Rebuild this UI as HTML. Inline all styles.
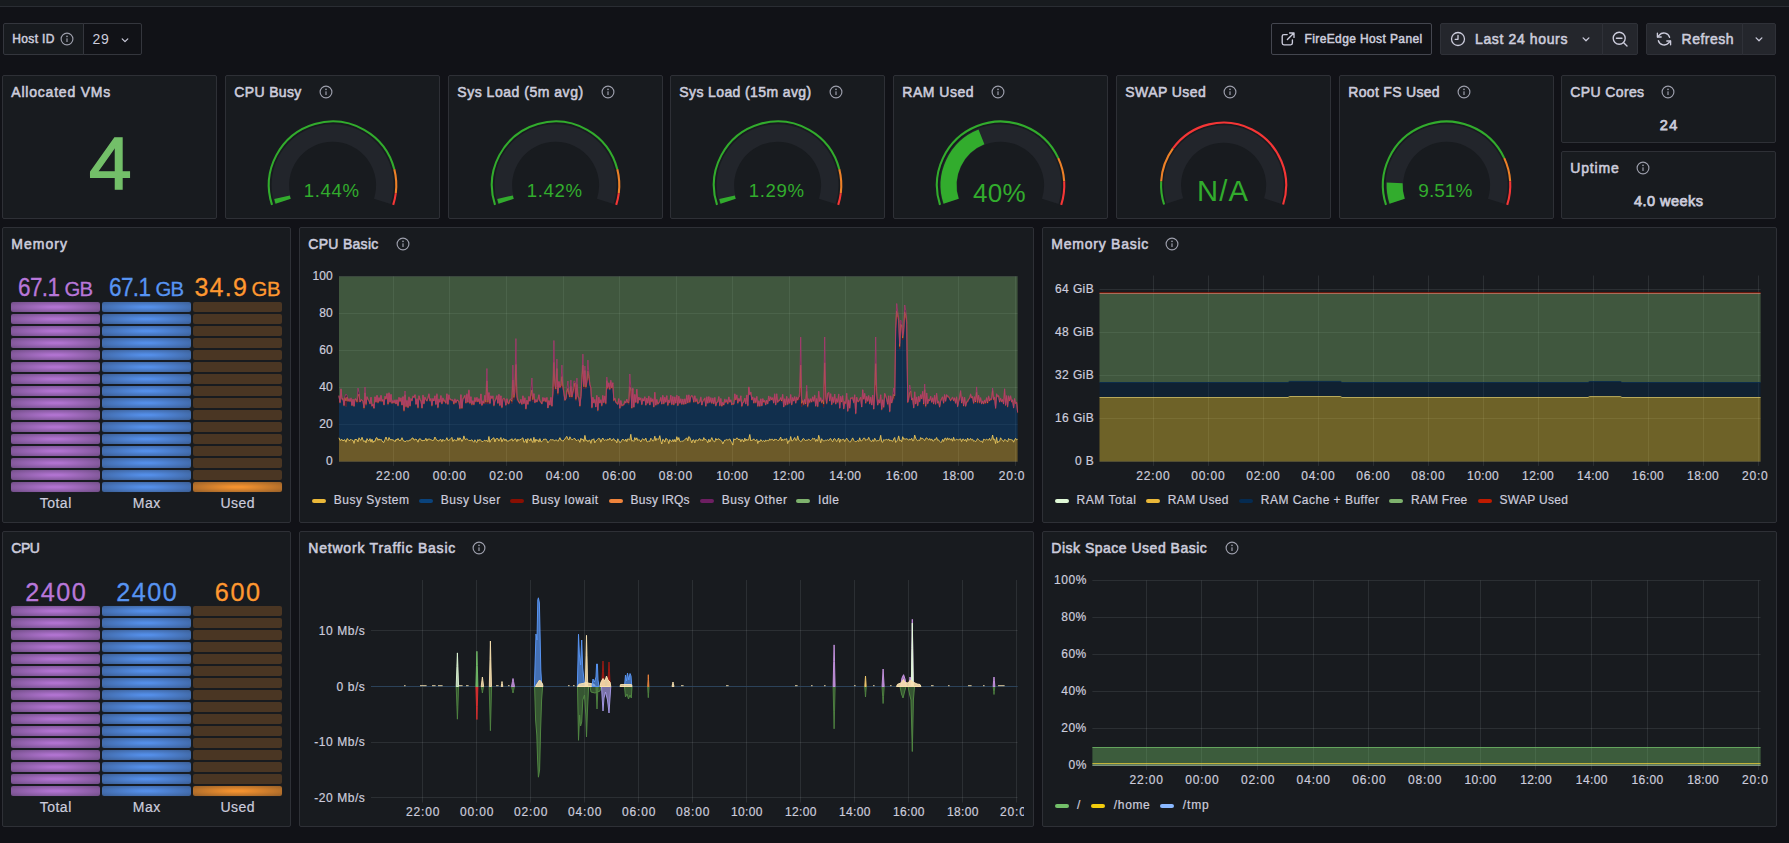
<!DOCTYPE html>
<html lang="en"><head><meta charset="utf-8"><title>Host dashboard</title>
<style>
html,body{margin:0;padding:0}
body{width:1789px;height:843px;overflow:hidden;background:#111217;position:relative;font-family:"Liberation Sans",sans-serif;color:#ccccdc}
.a{position:absolute}
.t{position:absolute;white-space:pre;line-height:normal}
.p{position:absolute;background:#181b1f;border:1px solid #2e3036;border-radius:2px}
.b{position:absolute;box-sizing:border-box;border-radius:2px}
svg{position:absolute;overflow:visible}
</style></head><body>

<div class="a" style="left:0;top:0;width:1789px;height:6px;background:#181b1f;border-bottom:1px solid #2a2d33"></div>
<div class="b" style="left:3px;top:23px;width:81px;height:32px;background:#181b1f;border:1px solid #34363d;border-radius:2px 0 0 2px"></div>
<div class="b" style="left:83px;top:23px;width:59px;height:32px;background:#111217;border:1px solid #34363d;border-radius:0 2px 2px 0"></div>
<div class="t" style="left:12.30px;top:32.44px;font-size:12px;color:#ccccdc;letter-spacing:0.332px;-webkit-text-stroke:0.5px #ccccdc;">Host ID</div>
<svg class="a" style="left:59px;top:31px" width="16" height="16" viewBox="0 0 16 16"><circle cx="8" cy="8" r="5.9" fill="none" stroke="#9d9fac" stroke-width="1.15"/><rect x="7.4" y="7.3" width="1.2" height="3.6" rx="0.5" fill="#9d9fac"/><circle cx="8" cy="5.4" r="0.8" fill="#9d9fac"/></svg>
<div class="t" style="left:92.60px;top:31.33px;font-size:14px;color:#ccccdc;letter-spacing:0.728px;">29</div>
<svg style="left:119px;top:33.6px" width="12" height="12" viewBox="-6 -6 12 12"><path d="M-2.8 -1.0999999999999999 L0 1.7 L2.8 -1.0999999999999999" fill="none" stroke="#ccccdc" stroke-width="1.2" stroke-linecap="round" stroke-linejoin="round"/></svg>
<div class="b" style="left:1271px;top:23px;width:161px;height:32px;border:1px solid #44464f"></div>
<svg style="left:1281px;top:32px" width="14" height="14" viewBox="0 0 14 14"><path d="M6.2 2.6H2.9Q1.2 2.6 1.2 4.3V11.1Q1.2 12.8 2.9 12.8H9.7Q11.4 12.8 11.4 11.1V7.8" fill="none" stroke="#ccccdc" stroke-width="1.35" stroke-linecap="round"/><path d="M8.6 1H13V5.4M13 1L6.4 7.6" fill="none" stroke="#ccccdc" stroke-width="1.35" stroke-linecap="round" stroke-linejoin="round"/></svg>
<div class="t" style="left:1304.50px;top:32.34px;font-size:12px;color:#ccccdc;letter-spacing:0.387px;-webkit-text-stroke:0.5px #ccccdc;">FireEdge Host Panel</div>
<div class="b" style="left:1440px;top:23px;width:163px;height:32px;background:#24262c;border:1px solid #2f3138;border-radius:2px 0 0 2px"></div>
<div class="b" style="left:1602px;top:23px;width:36px;height:32px;background:#24262c;border:1px solid #2f3138;border-radius:0 2px 2px 0"></div>
<svg style="left:1450px;top:31px" width="16" height="16" viewBox="0 0 16 16"><circle cx="8" cy="8" r="6.5" fill="none" stroke="#ccccdc" stroke-width="1.3"/><path d="M8 4.3V8.3H5.2" fill="none" stroke="#ccccdc" stroke-width="1.3" stroke-linecap="round" stroke-linejoin="round"/></svg>
<div class="t" style="left:1475.00px;top:31.33px;font-size:14px;color:#ccccdc;letter-spacing:0.630px;-webkit-text-stroke:0.55px #ccccdc;">Last 24 hours</div>
<svg style="left:1580.2px;top:32.8px" width="12" height="12" viewBox="-6 -6 12 12"><path d="M-2.9 -1.15 L0 1.75 L2.9 -1.15" fill="none" stroke="#ccccdc" stroke-width="1.25" stroke-linecap="round" stroke-linejoin="round"/></svg>
<svg style="left:1611px;top:30px" width="18" height="18" viewBox="0 0 18 18"><circle cx="8.2" cy="8.2" r="6" fill="none" stroke="#ccccdc" stroke-width="1.35"/><path d="M5.4 8.2H11M12.7 12.7L16 16" fill="none" stroke="#ccccdc" stroke-width="1.35" stroke-linecap="round"/></svg>
<div class="b" style="left:1646px;top:23px;width:97px;height:32px;background:#24262c;border:1px solid #2f3138;border-radius:2px 0 0 2px"></div>
<div class="b" style="left:1742px;top:23px;width:34px;height:32px;background:#24262c;border:1px solid #2f3138;border-radius:0 2px 2px 0"></div>
<svg style="left:1656px;top:31px" width="16" height="16" viewBox="0 0 16 16"><g fill="none" stroke="#ccccdc" stroke-width="1.35" stroke-linecap="round" stroke-linejoin="round"><path d="M13.6 6.3A6 6 0 0 0 3.2 4.2L1.6 5.9"/><path d="M1.4 2.2V6H5.2"/><path d="M2.4 9.7A6 6 0 0 0 12.8 11.8L14.4 10.1"/><path d="M14.6 13.8V10H10.8"/></g></svg>
<div class="t" style="left:1681.60px;top:31.33px;font-size:14px;color:#ccccdc;letter-spacing:0.497px;-webkit-text-stroke:0.55px #ccccdc;">Refresh</div>
<svg style="left:1752.8px;top:32.8px" width="12" height="12" viewBox="-6 -6 12 12"><path d="M-2.9 -1.15 L0 1.75 L2.9 -1.15" fill="none" stroke="#ccccdc" stroke-width="1.25" stroke-linecap="round" stroke-linejoin="round"/></svg>
<div class="p" style="left:2px;top:75px;width:213px;height:142px"></div>
<div class="t" style="left:11.30px;top:84.33px;font-size:14px;color:#ccccdc;letter-spacing:0.793px;-webkit-text-stroke:0.55px #ccccdc;">Allocated VMs</div>
<div class="t" style="left:88.54px;top:120.78px;font-size:73.5px;color:#73bf69;-webkit-text-stroke:1.5px #73bf69;transform:scaleX(1.04);transform-origin:0 0;">4</div>
<div class="p" style="left:225px;top:75px;width:213px;height:142px"></div>
<div class="t" style="left:234.30px;top:84.33px;font-size:14px;color:#ccccdc;letter-spacing:0.347px;-webkit-text-stroke:0.55px #ccccdc;">CPU Busy</div>
<svg class="a" style="left:318px;top:84px" width="16" height="16" viewBox="0 0 16 16"><circle cx="8" cy="8" r="5.9" fill="none" stroke="#9d9fac" stroke-width="1.15"/><rect x="7.4" y="7.3" width="1.2" height="3.6" rx="0.5" fill="#9d9fac"/><circle cx="8" cy="5.4" r="0.8" fill="#9d9fac"/></svg>
<svg style="left:0;top:0" width="1789" height="843"><path d="M282.91 201.35A52.25 52.25 0 1 1 382.29 201.35" fill="none" stroke="#22252b" stroke-width="17.5"/><path d="M272.02 204.88A63.7 63.7 0 1 1 394.30 169.36" fill="none" stroke="rgb(50,172,45)" stroke-width="2.1"/><path d="M394.30 169.36A63.7 63.7 0 0 1 395.80 193.18" fill="none" stroke="rgb(237,129,40)" stroke-width="2.1"/><path d="M395.80 193.18A63.7 63.7 0 0 1 393.18 204.88" fill="none" stroke="rgb(245,54,54)" stroke-width="2.1"/><path d="M283.15 201.27A52.0 52.0 0 0 1 282.02 197.25" fill="none" stroke="rgb(50,172,45)" stroke-width="16"/></svg>
<div class="t" style="left:303.65px;top:180.07px;font-size:18.6px;color:rgb(50,172,45);letter-spacing:0.690px;">1.44%</div>
<div class="p" style="left:448px;top:75px;width:213px;height:142px"></div>
<div class="t" style="left:457.30px;top:84.33px;font-size:14px;color:#ccccdc;letter-spacing:0.519px;-webkit-text-stroke:0.55px #ccccdc;">Sys Load (5m avg)</div>
<svg class="a" style="left:599.5px;top:84px" width="16" height="16" viewBox="0 0 16 16"><circle cx="8" cy="8" r="5.9" fill="none" stroke="#9d9fac" stroke-width="1.15"/><rect x="7.4" y="7.3" width="1.2" height="3.6" rx="0.5" fill="#9d9fac"/><circle cx="8" cy="5.4" r="0.8" fill="#9d9fac"/></svg>
<svg style="left:0;top:0" width="1789" height="843"><path d="M505.91 201.35A52.25 52.25 0 1 1 605.29 201.35" fill="none" stroke="#22252b" stroke-width="17.5"/><path d="M495.02 204.88A63.7 63.7 0 1 1 617.30 169.36" fill="none" stroke="rgb(50,172,45)" stroke-width="2.1"/><path d="M617.30 169.36A63.7 63.7 0 0 1 618.80 193.18" fill="none" stroke="rgb(237,129,40)" stroke-width="2.1"/><path d="M618.80 193.18A63.7 63.7 0 0 1 616.18 204.88" fill="none" stroke="rgb(245,54,54)" stroke-width="2.1"/><path d="M506.15 201.27A52.0 52.0 0 0 1 505.02 197.25" fill="none" stroke="rgb(50,172,45)" stroke-width="16"/></svg>
<div class="t" style="left:526.65px;top:180.07px;font-size:18.6px;color:rgb(50,172,45);letter-spacing:0.690px;">1.42%</div>
<div class="p" style="left:670px;top:75px;width:213px;height:142px"></div>
<div class="t" style="left:679.30px;top:84.33px;font-size:14px;color:#ccccdc;letter-spacing:0.383px;-webkit-text-stroke:0.55px #ccccdc;">Sys Load (15m avg)</div>
<svg class="a" style="left:828px;top:84px" width="16" height="16" viewBox="0 0 16 16"><circle cx="8" cy="8" r="5.9" fill="none" stroke="#9d9fac" stroke-width="1.15"/><rect x="7.4" y="7.3" width="1.2" height="3.6" rx="0.5" fill="#9d9fac"/><circle cx="8" cy="5.4" r="0.8" fill="#9d9fac"/></svg>
<svg style="left:0;top:0" width="1789" height="843"><path d="M727.91 201.35A52.25 52.25 0 1 1 827.29 201.35" fill="none" stroke="#22252b" stroke-width="17.5"/><path d="M717.02 204.88A63.7 63.7 0 1 1 839.30 169.36" fill="none" stroke="rgb(50,172,45)" stroke-width="2.1"/><path d="M839.30 169.36A63.7 63.7 0 0 1 840.80 193.18" fill="none" stroke="rgb(237,129,40)" stroke-width="2.1"/><path d="M840.80 193.18A63.7 63.7 0 0 1 838.18 204.88" fill="none" stroke="rgb(245,54,54)" stroke-width="2.1"/><path d="M728.15 201.27A52.0 52.0 0 0 1 727.02 197.25" fill="none" stroke="rgb(50,172,45)" stroke-width="16"/></svg>
<div class="t" style="left:748.65px;top:180.07px;font-size:18.6px;color:rgb(50,172,45);letter-spacing:0.690px;">1.29%</div>
<div class="p" style="left:893px;top:75px;width:213px;height:142px"></div>
<div class="t" style="left:902.30px;top:84.33px;font-size:14px;color:#ccccdc;letter-spacing:0.502px;-webkit-text-stroke:0.55px #ccccdc;">RAM Used</div>
<svg class="a" style="left:989.5px;top:84px" width="16" height="16" viewBox="0 0 16 16"><circle cx="8" cy="8" r="5.9" fill="none" stroke="#9d9fac" stroke-width="1.15"/><rect x="7.4" y="7.3" width="1.2" height="3.6" rx="0.5" fill="#9d9fac"/><circle cx="8" cy="5.4" r="0.8" fill="#9d9fac"/></svg>
<svg style="left:0;top:0" width="1789" height="843"><path d="M950.91 201.35A52.25 52.25 0 1 1 1050.29 201.35" fill="none" stroke="#22252b" stroke-width="17.5"/><path d="M940.02 204.88A63.7 63.7 0 0 1 1058.24 158.08" fill="none" stroke="rgb(50,172,45)" stroke-width="2.1"/><path d="M1058.24 158.08A63.7 63.7 0 0 1 1064.17 181.20" fill="none" stroke="rgb(237,129,40)" stroke-width="2.1"/><path d="M1064.17 181.20A63.7 63.7 0 0 1 1061.18 204.88" fill="none" stroke="rgb(245,54,54)" stroke-width="2.1"/><path d="M951.15 201.27A52.0 52.0 0 0 1 981.46 136.85" fill="none" stroke="rgb(50,172,45)" stroke-width="16"/></svg>
<div class="t" style="left:973.00px;top:177.97px;font-size:26px;color:rgb(50,172,45);letter-spacing:0.281px;">40%</div>
<div class="p" style="left:1116px;top:75px;width:213px;height:142px"></div>
<div class="t" style="left:1125.30px;top:84.33px;font-size:14px;color:#ccccdc;letter-spacing:0.422px;-webkit-text-stroke:0.55px #ccccdc;">SWAP Used</div>
<svg class="a" style="left:1222px;top:84px" width="16" height="16" viewBox="0 0 16 16"><circle cx="8" cy="8" r="5.9" fill="none" stroke="#9d9fac" stroke-width="1.15"/><rect x="7.4" y="7.3" width="1.2" height="3.6" rx="0.5" fill="#9d9fac"/><circle cx="8" cy="5.4" r="0.8" fill="#9d9fac"/></svg>
<svg style="left:0;top:0" width="1789" height="843"><path d="M1174.80 201.06A51.3095 51.3095 0 1 1 1272.40 201.06" fill="none" stroke="#22252b" stroke-width="17.5"/><path d="M1164.11 204.53A62.5534 62.5534 0 0 1 1161.17 181.27" fill="none" stroke="rgb(50,172,45)" stroke-width="2.1"/><path d="M1161.17 181.27A62.5534 62.5534 0 0 1 1172.99 148.43" fill="none" stroke="rgb(237,129,40)" stroke-width="2.1"/><path d="M1172.99 148.43A62.5534 62.5534 0 0 1 1283.09 204.53" fill="none" stroke="rgb(245,54,54)" stroke-width="2.1"/></svg>
<div class="t" style="left:1197.10px;top:175.47px;font-size:29.2px;color:rgb(50,172,45);letter-spacing:1.162px;">N/A</div>
<div class="p" style="left:1339px;top:75px;width:213px;height:142px"></div>
<div class="t" style="left:1348.30px;top:84.33px;font-size:14px;color:#ccccdc;letter-spacing:0.307px;-webkit-text-stroke:0.55px #ccccdc;">Root FS Used</div>
<svg class="a" style="left:1456px;top:84px" width="16" height="16" viewBox="0 0 16 16"><circle cx="8" cy="8" r="5.9" fill="none" stroke="#9d9fac" stroke-width="1.15"/><rect x="7.4" y="7.3" width="1.2" height="3.6" rx="0.5" fill="#9d9fac"/><circle cx="8" cy="5.4" r="0.8" fill="#9d9fac"/></svg>
<svg style="left:0;top:0" width="1789" height="843"><path d="M1396.91 201.35A52.25 52.25 0 1 1 1496.29 201.35" fill="none" stroke="#22252b" stroke-width="17.5"/><path d="M1386.02 204.88A63.7 63.7 0 0 1 1504.24 158.08" fill="none" stroke="rgb(50,172,45)" stroke-width="2.1"/><path d="M1504.24 158.08A63.7 63.7 0 0 1 1510.17 181.20" fill="none" stroke="rgb(237,129,40)" stroke-width="2.1"/><path d="M1510.17 181.20A63.7 63.7 0 0 1 1507.18 204.88" fill="none" stroke="rgb(245,54,54)" stroke-width="2.1"/><path d="M1397.15 201.27A52.0 52.0 0 0 1 1394.65 182.89" fill="none" stroke="rgb(50,172,45)" stroke-width="16"/></svg>
<div class="t" style="left:1418.30px;top:180.00px;font-size:19px;color:rgb(50,172,45);letter-spacing:0.032px;">9.51%</div>
<div class="p" style="left:1561px;top:75px;width:213px;height:66px"></div>
<div class="t" style="left:1570.30px;top:84.33px;font-size:14px;color:#ccccdc;letter-spacing:0.376px;-webkit-text-stroke:0.55px #ccccdc;">CPU Cores</div>
<svg class="a" style="left:1660px;top:84px" width="16" height="16" viewBox="0 0 16 16"><circle cx="8" cy="8" r="5.9" fill="none" stroke="#9d9fac" stroke-width="1.15"/><rect x="7.4" y="7.3" width="1.2" height="3.6" rx="0.5" fill="#9d9fac"/><circle cx="8" cy="5.4" r="0.8" fill="#9d9fac"/></svg>
<div class="t" style="left:1659.65px;top:116.88px;font-size:14.5px;color:#ccccdc;letter-spacing:1.571px;-webkit-text-stroke:0.75px #ccccdc;">24</div>
<div class="p" style="left:1561px;top:151px;width:213px;height:66px"></div>
<div class="t" style="left:1570.30px;top:160.33px;font-size:14px;color:#ccccdc;letter-spacing:0.831px;-webkit-text-stroke:0.55px #ccccdc;">Uptime</div>
<svg class="a" style="left:1635px;top:160px" width="16" height="16" viewBox="0 0 16 16"><circle cx="8" cy="8" r="5.9" fill="none" stroke="#9d9fac" stroke-width="1.15"/><rect x="7.4" y="7.3" width="1.2" height="3.6" rx="0.5" fill="#9d9fac"/><circle cx="8" cy="5.4" r="0.8" fill="#9d9fac"/></svg>
<div class="t" style="left:1634.00px;top:192.88px;font-size:14.5px;color:#ccccdc;letter-spacing:0.464px;-webkit-text-stroke:0.75px #ccccdc;">4.0 weeks</div>
<div class="p" style="left:2px;top:227px;width:287px;height:294px"></div>
<div class="t" style="left:11.30px;top:236.33px;font-size:14px;color:#ccccdc;letter-spacing:1.028px;-webkit-text-stroke:0.55px #ccccdc;">Memory</div>
<div class="a" style="left:11px;top:302px;width:89px;height:10px;border-radius:2px;background:radial-gradient(ellipse at center, rgba(184,119,217,0.95) 10%, rgba(184,119,217,0.55));box-shadow:0 0 2px rgba(184,119,217,0.08);"></div>
<div class="a" style="left:11px;top:314px;width:89px;height:10px;border-radius:2px;background:radial-gradient(ellipse at center, rgba(184,119,217,0.95) 10%, rgba(184,119,217,0.55));box-shadow:0 0 2px rgba(184,119,217,0.08);"></div>
<div class="a" style="left:11px;top:326px;width:89px;height:10px;border-radius:2px;background:radial-gradient(ellipse at center, rgba(184,119,217,0.95) 10%, rgba(184,119,217,0.55));box-shadow:0 0 2px rgba(184,119,217,0.08);"></div>
<div class="a" style="left:11px;top:338px;width:89px;height:10px;border-radius:2px;background:radial-gradient(ellipse at center, rgba(184,119,217,0.95) 10%, rgba(184,119,217,0.55));box-shadow:0 0 2px rgba(184,119,217,0.08);"></div>
<div class="a" style="left:11px;top:350px;width:89px;height:10px;border-radius:2px;background:radial-gradient(ellipse at center, rgba(184,119,217,0.95) 10%, rgba(184,119,217,0.55));box-shadow:0 0 2px rgba(184,119,217,0.08);"></div>
<div class="a" style="left:11px;top:362px;width:89px;height:10px;border-radius:2px;background:radial-gradient(ellipse at center, rgba(184,119,217,0.95) 10%, rgba(184,119,217,0.55));box-shadow:0 0 2px rgba(184,119,217,0.08);"></div>
<div class="a" style="left:11px;top:374px;width:89px;height:10px;border-radius:2px;background:radial-gradient(ellipse at center, rgba(184,119,217,0.95) 10%, rgba(184,119,217,0.55));box-shadow:0 0 2px rgba(184,119,217,0.08);"></div>
<div class="a" style="left:11px;top:386px;width:89px;height:10px;border-radius:2px;background:radial-gradient(ellipse at center, rgba(184,119,217,0.95) 10%, rgba(184,119,217,0.55));box-shadow:0 0 2px rgba(184,119,217,0.08);"></div>
<div class="a" style="left:11px;top:398px;width:89px;height:10px;border-radius:2px;background:radial-gradient(ellipse at center, rgba(184,119,217,0.95) 10%, rgba(184,119,217,0.55));box-shadow:0 0 2px rgba(184,119,217,0.08);"></div>
<div class="a" style="left:11px;top:410px;width:89px;height:10px;border-radius:2px;background:radial-gradient(ellipse at center, rgba(184,119,217,0.95) 10%, rgba(184,119,217,0.55));box-shadow:0 0 2px rgba(184,119,217,0.08);"></div>
<div class="a" style="left:11px;top:422px;width:89px;height:10px;border-radius:2px;background:radial-gradient(ellipse at center, rgba(184,119,217,0.95) 10%, rgba(184,119,217,0.55));box-shadow:0 0 2px rgba(184,119,217,0.08);"></div>
<div class="a" style="left:11px;top:434px;width:89px;height:10px;border-radius:2px;background:radial-gradient(ellipse at center, rgba(184,119,217,0.95) 10%, rgba(184,119,217,0.55));box-shadow:0 0 2px rgba(184,119,217,0.08);"></div>
<div class="a" style="left:11px;top:446px;width:89px;height:10px;border-radius:2px;background:radial-gradient(ellipse at center, rgba(184,119,217,0.95) 10%, rgba(184,119,217,0.55));box-shadow:0 0 2px rgba(184,119,217,0.08);"></div>
<div class="a" style="left:11px;top:458px;width:89px;height:10px;border-radius:2px;background:radial-gradient(ellipse at center, rgba(184,119,217,0.95) 10%, rgba(184,119,217,0.55));box-shadow:0 0 2px rgba(184,119,217,0.08);"></div>
<div class="a" style="left:11px;top:470px;width:89px;height:10px;border-radius:2px;background:radial-gradient(ellipse at center, rgba(184,119,217,0.95) 10%, rgba(184,119,217,0.55));box-shadow:0 0 2px rgba(184,119,217,0.08);"></div>
<div class="a" style="left:11px;top:482px;width:89px;height:10px;border-radius:2px;background:radial-gradient(ellipse at center, rgba(184,119,217,0.95) 10%, rgba(184,119,217,0.55));box-shadow:0 0 2px rgba(184,119,217,0.08);"></div>
<div class="t" style="left:39.75px;top:494.73px;font-size:14px;color:#ccccdc;letter-spacing:0.482px;-webkit-text-stroke:0.2px #ccccdc;">Total</div>
<div class="t" style="left:17.90px;top:273.38px;font-size:25px;color:#b877d9;letter-spacing:-0.664px;-webkit-text-stroke:0.3px #b877d9;transform:scaleX(0.9);transform-origin:0 0;">67.1</div>
<div class="t" style="left:64.50px;top:277.63px;font-size:20.3px;color:#b877d9;letter-spacing:-0.730px;-webkit-text-stroke:0.3px #b877d9;">GB</div>
<div class="a" style="left:102px;top:302px;width:89px;height:10px;border-radius:2px;background:radial-gradient(ellipse at center, rgba(87,148,242,0.95) 10%, rgba(87,148,242,0.55));box-shadow:0 0 2px rgba(87,148,242,0.08);"></div>
<div class="a" style="left:102px;top:314px;width:89px;height:10px;border-radius:2px;background:radial-gradient(ellipse at center, rgba(87,148,242,0.95) 10%, rgba(87,148,242,0.55));box-shadow:0 0 2px rgba(87,148,242,0.08);"></div>
<div class="a" style="left:102px;top:326px;width:89px;height:10px;border-radius:2px;background:radial-gradient(ellipse at center, rgba(87,148,242,0.95) 10%, rgba(87,148,242,0.55));box-shadow:0 0 2px rgba(87,148,242,0.08);"></div>
<div class="a" style="left:102px;top:338px;width:89px;height:10px;border-radius:2px;background:radial-gradient(ellipse at center, rgba(87,148,242,0.95) 10%, rgba(87,148,242,0.55));box-shadow:0 0 2px rgba(87,148,242,0.08);"></div>
<div class="a" style="left:102px;top:350px;width:89px;height:10px;border-radius:2px;background:radial-gradient(ellipse at center, rgba(87,148,242,0.95) 10%, rgba(87,148,242,0.55));box-shadow:0 0 2px rgba(87,148,242,0.08);"></div>
<div class="a" style="left:102px;top:362px;width:89px;height:10px;border-radius:2px;background:radial-gradient(ellipse at center, rgba(87,148,242,0.95) 10%, rgba(87,148,242,0.55));box-shadow:0 0 2px rgba(87,148,242,0.08);"></div>
<div class="a" style="left:102px;top:374px;width:89px;height:10px;border-radius:2px;background:radial-gradient(ellipse at center, rgba(87,148,242,0.95) 10%, rgba(87,148,242,0.55));box-shadow:0 0 2px rgba(87,148,242,0.08);"></div>
<div class="a" style="left:102px;top:386px;width:89px;height:10px;border-radius:2px;background:radial-gradient(ellipse at center, rgba(87,148,242,0.95) 10%, rgba(87,148,242,0.55));box-shadow:0 0 2px rgba(87,148,242,0.08);"></div>
<div class="a" style="left:102px;top:398px;width:89px;height:10px;border-radius:2px;background:radial-gradient(ellipse at center, rgba(87,148,242,0.95) 10%, rgba(87,148,242,0.55));box-shadow:0 0 2px rgba(87,148,242,0.08);"></div>
<div class="a" style="left:102px;top:410px;width:89px;height:10px;border-radius:2px;background:radial-gradient(ellipse at center, rgba(87,148,242,0.95) 10%, rgba(87,148,242,0.55));box-shadow:0 0 2px rgba(87,148,242,0.08);"></div>
<div class="a" style="left:102px;top:422px;width:89px;height:10px;border-radius:2px;background:radial-gradient(ellipse at center, rgba(87,148,242,0.95) 10%, rgba(87,148,242,0.55));box-shadow:0 0 2px rgba(87,148,242,0.08);"></div>
<div class="a" style="left:102px;top:434px;width:89px;height:10px;border-radius:2px;background:radial-gradient(ellipse at center, rgba(87,148,242,0.95) 10%, rgba(87,148,242,0.55));box-shadow:0 0 2px rgba(87,148,242,0.08);"></div>
<div class="a" style="left:102px;top:446px;width:89px;height:10px;border-radius:2px;background:radial-gradient(ellipse at center, rgba(87,148,242,0.95) 10%, rgba(87,148,242,0.55));box-shadow:0 0 2px rgba(87,148,242,0.08);"></div>
<div class="a" style="left:102px;top:458px;width:89px;height:10px;border-radius:2px;background:radial-gradient(ellipse at center, rgba(87,148,242,0.95) 10%, rgba(87,148,242,0.55));box-shadow:0 0 2px rgba(87,148,242,0.08);"></div>
<div class="a" style="left:102px;top:470px;width:89px;height:10px;border-radius:2px;background:radial-gradient(ellipse at center, rgba(87,148,242,0.95) 10%, rgba(87,148,242,0.55));box-shadow:0 0 2px rgba(87,148,242,0.08);"></div>
<div class="a" style="left:102px;top:482px;width:89px;height:10px;border-radius:2px;background:radial-gradient(ellipse at center, rgba(87,148,242,0.95) 10%, rgba(87,148,242,0.55));box-shadow:0 0 2px rgba(87,148,242,0.08);"></div>
<div class="t" style="left:132.75px;top:494.73px;font-size:14px;color:#ccccdc;letter-spacing:0.526px;-webkit-text-stroke:0.2px #ccccdc;">Max</div>
<div class="t" style="left:108.90px;top:273.38px;font-size:25px;color:#5794f2;letter-spacing:-0.664px;-webkit-text-stroke:0.3px #5794f2;transform:scaleX(0.9);transform-origin:0 0;">67.1</div>
<div class="t" style="left:155.50px;top:277.63px;font-size:20.3px;color:#5794f2;letter-spacing:-0.730px;-webkit-text-stroke:0.3px #5794f2;">GB</div>
<div class="a" style="left:193px;top:302px;width:89px;height:10px;border-radius:2px;background:rgba(255,152,48,0.22);"></div>
<div class="a" style="left:193px;top:314px;width:89px;height:10px;border-radius:2px;background:rgba(255,152,48,0.22);"></div>
<div class="a" style="left:193px;top:326px;width:89px;height:10px;border-radius:2px;background:rgba(255,152,48,0.22);"></div>
<div class="a" style="left:193px;top:338px;width:89px;height:10px;border-radius:2px;background:rgba(255,152,48,0.22);"></div>
<div class="a" style="left:193px;top:350px;width:89px;height:10px;border-radius:2px;background:rgba(255,152,48,0.22);"></div>
<div class="a" style="left:193px;top:362px;width:89px;height:10px;border-radius:2px;background:rgba(255,152,48,0.22);"></div>
<div class="a" style="left:193px;top:374px;width:89px;height:10px;border-radius:2px;background:rgba(255,152,48,0.22);"></div>
<div class="a" style="left:193px;top:386px;width:89px;height:10px;border-radius:2px;background:rgba(255,152,48,0.22);"></div>
<div class="a" style="left:193px;top:398px;width:89px;height:10px;border-radius:2px;background:rgba(255,152,48,0.22);"></div>
<div class="a" style="left:193px;top:410px;width:89px;height:10px;border-radius:2px;background:rgba(255,152,48,0.22);"></div>
<div class="a" style="left:193px;top:422px;width:89px;height:10px;border-radius:2px;background:rgba(255,152,48,0.22);"></div>
<div class="a" style="left:193px;top:434px;width:89px;height:10px;border-radius:2px;background:rgba(255,152,48,0.22);"></div>
<div class="a" style="left:193px;top:446px;width:89px;height:10px;border-radius:2px;background:rgba(255,152,48,0.22);"></div>
<div class="a" style="left:193px;top:458px;width:89px;height:10px;border-radius:2px;background:rgba(255,152,48,0.22);"></div>
<div class="a" style="left:193px;top:470px;width:89px;height:10px;border-radius:2px;background:rgba(255,152,48,0.22);"></div>
<div class="a" style="left:193px;top:482px;width:89px;height:10px;border-radius:2px;background:radial-gradient(ellipse at center, rgba(255,152,48,0.95) 10%, rgba(255,152,48,0.55));box-shadow:0 0 2px rgba(255,152,48,0.08);"></div>
<div class="t" style="left:220.50px;top:494.73px;font-size:14px;color:#ccccdc;letter-spacing:0.439px;-webkit-text-stroke:0.2px #ccccdc;">Used</div>
<div class="t" style="left:194.40px;top:273.38px;font-size:25px;color:#ff9830;letter-spacing:1.314px;-webkit-text-stroke:0.3px #ff9830;">34.9</div>
<div class="t" style="left:251.60px;top:277.63px;font-size:20.3px;color:#ff9830;letter-spacing:-0.330px;-webkit-text-stroke:0.3px #ff9830;">GB</div>
<div class="p" style="left:2px;top:531px;width:287px;height:294px"></div>
<div class="t" style="left:11.30px;top:540.33px;font-size:14px;color:#ccccdc;letter-spacing:-0.529px;-webkit-text-stroke:0.55px #ccccdc;">CPU</div>
<div class="a" style="left:11px;top:606px;width:89px;height:10px;border-radius:2px;background:radial-gradient(ellipse at center, rgba(184,119,217,0.95) 10%, rgba(184,119,217,0.55));box-shadow:0 0 2px rgba(184,119,217,0.08);"></div>
<div class="a" style="left:11px;top:618px;width:89px;height:10px;border-radius:2px;background:radial-gradient(ellipse at center, rgba(184,119,217,0.95) 10%, rgba(184,119,217,0.55));box-shadow:0 0 2px rgba(184,119,217,0.08);"></div>
<div class="a" style="left:11px;top:630px;width:89px;height:10px;border-radius:2px;background:radial-gradient(ellipse at center, rgba(184,119,217,0.95) 10%, rgba(184,119,217,0.55));box-shadow:0 0 2px rgba(184,119,217,0.08);"></div>
<div class="a" style="left:11px;top:642px;width:89px;height:10px;border-radius:2px;background:radial-gradient(ellipse at center, rgba(184,119,217,0.95) 10%, rgba(184,119,217,0.55));box-shadow:0 0 2px rgba(184,119,217,0.08);"></div>
<div class="a" style="left:11px;top:654px;width:89px;height:10px;border-radius:2px;background:radial-gradient(ellipse at center, rgba(184,119,217,0.95) 10%, rgba(184,119,217,0.55));box-shadow:0 0 2px rgba(184,119,217,0.08);"></div>
<div class="a" style="left:11px;top:666px;width:89px;height:10px;border-radius:2px;background:radial-gradient(ellipse at center, rgba(184,119,217,0.95) 10%, rgba(184,119,217,0.55));box-shadow:0 0 2px rgba(184,119,217,0.08);"></div>
<div class="a" style="left:11px;top:678px;width:89px;height:10px;border-radius:2px;background:radial-gradient(ellipse at center, rgba(184,119,217,0.95) 10%, rgba(184,119,217,0.55));box-shadow:0 0 2px rgba(184,119,217,0.08);"></div>
<div class="a" style="left:11px;top:690px;width:89px;height:10px;border-radius:2px;background:radial-gradient(ellipse at center, rgba(184,119,217,0.95) 10%, rgba(184,119,217,0.55));box-shadow:0 0 2px rgba(184,119,217,0.08);"></div>
<div class="a" style="left:11px;top:702px;width:89px;height:10px;border-radius:2px;background:radial-gradient(ellipse at center, rgba(184,119,217,0.95) 10%, rgba(184,119,217,0.55));box-shadow:0 0 2px rgba(184,119,217,0.08);"></div>
<div class="a" style="left:11px;top:714px;width:89px;height:10px;border-radius:2px;background:radial-gradient(ellipse at center, rgba(184,119,217,0.95) 10%, rgba(184,119,217,0.55));box-shadow:0 0 2px rgba(184,119,217,0.08);"></div>
<div class="a" style="left:11px;top:726px;width:89px;height:10px;border-radius:2px;background:radial-gradient(ellipse at center, rgba(184,119,217,0.95) 10%, rgba(184,119,217,0.55));box-shadow:0 0 2px rgba(184,119,217,0.08);"></div>
<div class="a" style="left:11px;top:738px;width:89px;height:10px;border-radius:2px;background:radial-gradient(ellipse at center, rgba(184,119,217,0.95) 10%, rgba(184,119,217,0.55));box-shadow:0 0 2px rgba(184,119,217,0.08);"></div>
<div class="a" style="left:11px;top:750px;width:89px;height:10px;border-radius:2px;background:radial-gradient(ellipse at center, rgba(184,119,217,0.95) 10%, rgba(184,119,217,0.55));box-shadow:0 0 2px rgba(184,119,217,0.08);"></div>
<div class="a" style="left:11px;top:762px;width:89px;height:10px;border-radius:2px;background:radial-gradient(ellipse at center, rgba(184,119,217,0.95) 10%, rgba(184,119,217,0.55));box-shadow:0 0 2px rgba(184,119,217,0.08);"></div>
<div class="a" style="left:11px;top:774px;width:89px;height:10px;border-radius:2px;background:radial-gradient(ellipse at center, rgba(184,119,217,0.95) 10%, rgba(184,119,217,0.55));box-shadow:0 0 2px rgba(184,119,217,0.08);"></div>
<div class="a" style="left:11px;top:786px;width:89px;height:10px;border-radius:2px;background:radial-gradient(ellipse at center, rgba(184,119,217,0.95) 10%, rgba(184,119,217,0.55));box-shadow:0 0 2px rgba(184,119,217,0.08);"></div>
<div class="t" style="left:39.75px;top:798.73px;font-size:14px;color:#ccccdc;letter-spacing:0.482px;-webkit-text-stroke:0.2px #ccccdc;">Total</div>
<div class="t" style="left:25.30px;top:577.99px;font-size:25.2px;color:#b877d9;letter-spacing:1.446px;-webkit-text-stroke:0.3px #b877d9;">2400</div>
<div class="a" style="left:102px;top:606px;width:89px;height:10px;border-radius:2px;background:radial-gradient(ellipse at center, rgba(87,148,242,0.95) 10%, rgba(87,148,242,0.55));box-shadow:0 0 2px rgba(87,148,242,0.08);"></div>
<div class="a" style="left:102px;top:618px;width:89px;height:10px;border-radius:2px;background:radial-gradient(ellipse at center, rgba(87,148,242,0.95) 10%, rgba(87,148,242,0.55));box-shadow:0 0 2px rgba(87,148,242,0.08);"></div>
<div class="a" style="left:102px;top:630px;width:89px;height:10px;border-radius:2px;background:radial-gradient(ellipse at center, rgba(87,148,242,0.95) 10%, rgba(87,148,242,0.55));box-shadow:0 0 2px rgba(87,148,242,0.08);"></div>
<div class="a" style="left:102px;top:642px;width:89px;height:10px;border-radius:2px;background:radial-gradient(ellipse at center, rgba(87,148,242,0.95) 10%, rgba(87,148,242,0.55));box-shadow:0 0 2px rgba(87,148,242,0.08);"></div>
<div class="a" style="left:102px;top:654px;width:89px;height:10px;border-radius:2px;background:radial-gradient(ellipse at center, rgba(87,148,242,0.95) 10%, rgba(87,148,242,0.55));box-shadow:0 0 2px rgba(87,148,242,0.08);"></div>
<div class="a" style="left:102px;top:666px;width:89px;height:10px;border-radius:2px;background:radial-gradient(ellipse at center, rgba(87,148,242,0.95) 10%, rgba(87,148,242,0.55));box-shadow:0 0 2px rgba(87,148,242,0.08);"></div>
<div class="a" style="left:102px;top:678px;width:89px;height:10px;border-radius:2px;background:radial-gradient(ellipse at center, rgba(87,148,242,0.95) 10%, rgba(87,148,242,0.55));box-shadow:0 0 2px rgba(87,148,242,0.08);"></div>
<div class="a" style="left:102px;top:690px;width:89px;height:10px;border-radius:2px;background:radial-gradient(ellipse at center, rgba(87,148,242,0.95) 10%, rgba(87,148,242,0.55));box-shadow:0 0 2px rgba(87,148,242,0.08);"></div>
<div class="a" style="left:102px;top:702px;width:89px;height:10px;border-radius:2px;background:radial-gradient(ellipse at center, rgba(87,148,242,0.95) 10%, rgba(87,148,242,0.55));box-shadow:0 0 2px rgba(87,148,242,0.08);"></div>
<div class="a" style="left:102px;top:714px;width:89px;height:10px;border-radius:2px;background:radial-gradient(ellipse at center, rgba(87,148,242,0.95) 10%, rgba(87,148,242,0.55));box-shadow:0 0 2px rgba(87,148,242,0.08);"></div>
<div class="a" style="left:102px;top:726px;width:89px;height:10px;border-radius:2px;background:radial-gradient(ellipse at center, rgba(87,148,242,0.95) 10%, rgba(87,148,242,0.55));box-shadow:0 0 2px rgba(87,148,242,0.08);"></div>
<div class="a" style="left:102px;top:738px;width:89px;height:10px;border-radius:2px;background:radial-gradient(ellipse at center, rgba(87,148,242,0.95) 10%, rgba(87,148,242,0.55));box-shadow:0 0 2px rgba(87,148,242,0.08);"></div>
<div class="a" style="left:102px;top:750px;width:89px;height:10px;border-radius:2px;background:radial-gradient(ellipse at center, rgba(87,148,242,0.95) 10%, rgba(87,148,242,0.55));box-shadow:0 0 2px rgba(87,148,242,0.08);"></div>
<div class="a" style="left:102px;top:762px;width:89px;height:10px;border-radius:2px;background:radial-gradient(ellipse at center, rgba(87,148,242,0.95) 10%, rgba(87,148,242,0.55));box-shadow:0 0 2px rgba(87,148,242,0.08);"></div>
<div class="a" style="left:102px;top:774px;width:89px;height:10px;border-radius:2px;background:radial-gradient(ellipse at center, rgba(87,148,242,0.95) 10%, rgba(87,148,242,0.55));box-shadow:0 0 2px rgba(87,148,242,0.08);"></div>
<div class="a" style="left:102px;top:786px;width:89px;height:10px;border-radius:2px;background:radial-gradient(ellipse at center, rgba(87,148,242,0.95) 10%, rgba(87,148,242,0.55));box-shadow:0 0 2px rgba(87,148,242,0.08);"></div>
<div class="t" style="left:132.75px;top:798.73px;font-size:14px;color:#ccccdc;letter-spacing:0.526px;-webkit-text-stroke:0.2px #ccccdc;">Max</div>
<div class="t" style="left:116.30px;top:577.99px;font-size:25.2px;color:#5794f2;letter-spacing:1.446px;-webkit-text-stroke:0.3px #5794f2;">2400</div>
<div class="a" style="left:193px;top:606px;width:89px;height:10px;border-radius:2px;background:rgba(255,152,48,0.22);"></div>
<div class="a" style="left:193px;top:618px;width:89px;height:10px;border-radius:2px;background:rgba(255,152,48,0.22);"></div>
<div class="a" style="left:193px;top:630px;width:89px;height:10px;border-radius:2px;background:rgba(255,152,48,0.22);"></div>
<div class="a" style="left:193px;top:642px;width:89px;height:10px;border-radius:2px;background:rgba(255,152,48,0.22);"></div>
<div class="a" style="left:193px;top:654px;width:89px;height:10px;border-radius:2px;background:rgba(255,152,48,0.22);"></div>
<div class="a" style="left:193px;top:666px;width:89px;height:10px;border-radius:2px;background:rgba(255,152,48,0.22);"></div>
<div class="a" style="left:193px;top:678px;width:89px;height:10px;border-radius:2px;background:rgba(255,152,48,0.22);"></div>
<div class="a" style="left:193px;top:690px;width:89px;height:10px;border-radius:2px;background:rgba(255,152,48,0.22);"></div>
<div class="a" style="left:193px;top:702px;width:89px;height:10px;border-radius:2px;background:rgba(255,152,48,0.22);"></div>
<div class="a" style="left:193px;top:714px;width:89px;height:10px;border-radius:2px;background:rgba(255,152,48,0.22);"></div>
<div class="a" style="left:193px;top:726px;width:89px;height:10px;border-radius:2px;background:rgba(255,152,48,0.22);"></div>
<div class="a" style="left:193px;top:738px;width:89px;height:10px;border-radius:2px;background:rgba(255,152,48,0.22);"></div>
<div class="a" style="left:193px;top:750px;width:89px;height:10px;border-radius:2px;background:rgba(255,152,48,0.22);"></div>
<div class="a" style="left:193px;top:762px;width:89px;height:10px;border-radius:2px;background:rgba(255,152,48,0.22);"></div>
<div class="a" style="left:193px;top:774px;width:89px;height:10px;border-radius:2px;background:rgba(255,152,48,0.22);"></div>
<div class="a" style="left:193px;top:786px;width:89px;height:10px;border-radius:2px;background:radial-gradient(ellipse at center, rgba(255,152,48,0.95) 10%, rgba(255,152,48,0.55));box-shadow:0 0 2px rgba(255,152,48,0.08);"></div>
<div class="t" style="left:220.50px;top:798.73px;font-size:14px;color:#ccccdc;letter-spacing:0.439px;-webkit-text-stroke:0.2px #ccccdc;">Used</div>
<div class="t" style="left:214.85px;top:577.99px;font-size:25.2px;color:#ff9830;letter-spacing:1.627px;-webkit-text-stroke:0.3px #ff9830;">600</div>
<div class="p" style="left:299px;top:227px;width:733px;height:294px"></div>
<div class="t" style="left:308.30px;top:236.33px;font-size:14px;color:#ccccdc;letter-spacing:0.290px;-webkit-text-stroke:0.55px #ccccdc;">CPU Basic</div>
<svg class="a" style="left:395px;top:236px" width="16" height="16" viewBox="0 0 16 16"><circle cx="8" cy="8" r="5.9" fill="none" stroke="#9d9fac" stroke-width="1.15"/><rect x="7.4" y="7.3" width="1.2" height="3.6" rx="0.5" fill="#9d9fac"/><circle cx="8" cy="5.4" r="0.8" fill="#9d9fac"/></svg>
<svg style="left:0;top:0" width="1789" height="843"><path d="M339.0 461.5H1017.6" stroke="rgba(240,250,255,0.09)" stroke-width="1"/><path d="M339.0 424.5H1017.6" stroke="rgba(240,250,255,0.09)" stroke-width="1"/><path d="M339.0 387.5H1017.6" stroke="rgba(240,250,255,0.09)" stroke-width="1"/><path d="M339.0 350.5H1017.6" stroke="rgba(240,250,255,0.09)" stroke-width="1"/><path d="M339.0 313.5H1017.6" stroke="rgba(240,250,255,0.09)" stroke-width="1"/><path d="M339.0 276.5H1017.6" stroke="rgba(240,250,255,0.09)" stroke-width="1"/><path d="M393.5 276.4V465.9" stroke="rgba(240,250,255,0.09)" stroke-width="1"/><path d="M449.5 276.4V465.9" stroke="rgba(240,250,255,0.09)" stroke-width="1"/><path d="M506.5 276.4V465.9" stroke="rgba(240,250,255,0.09)" stroke-width="1"/><path d="M563.5 276.4V465.9" stroke="rgba(240,250,255,0.09)" stroke-width="1"/><path d="M619.5 276.4V465.9" stroke="rgba(240,250,255,0.09)" stroke-width="1"/><path d="M676.5 276.4V465.9" stroke="rgba(240,250,255,0.09)" stroke-width="1"/><path d="M732.5 276.4V465.9" stroke="rgba(240,250,255,0.09)" stroke-width="1"/><path d="M789.5 276.4V465.9" stroke="rgba(240,250,255,0.09)" stroke-width="1"/><path d="M845.5 276.4V465.9" stroke="rgba(240,250,255,0.09)" stroke-width="1"/><path d="M902.5 276.4V465.9" stroke="rgba(240,250,255,0.09)" stroke-width="1"/><path d="M958.5 276.4V465.9" stroke="rgba(240,250,255,0.09)" stroke-width="1"/><path d="M1015.5 276.4V465.9" stroke="rgba(240,250,255,0.09)" stroke-width="1"/><polygon points="339.0,437.8 340.0,440.5 341.0,439.9 342.0,439.4 343.0,441.0 344.0,439.9 345.0,439.9 346.0,442.2 347.0,438.6 348.0,439.2 349.0,440.7 350.0,440.2 351.0,439.3 352.0,440.3 353.0,440.3 354.0,443.4 355.0,439.2 356.0,439.8 357.0,439.6 358.0,441.9 359.0,437.8 360.0,439.7 361.0,440.4 362.0,437.3 363.0,440.0 364.0,441.8 365.0,440.5 366.0,442.9 367.0,438.6 368.0,440.5 369.0,440.9 370.0,438.6 371.0,442.1 372.0,439.2 373.0,442.6 374.0,440.8 375.0,441.5 376.0,438.0 377.0,437.7 378.0,440.4 379.0,438.9 380.0,440.2 381.0,439.2 382.0,440.9 383.0,442.2 384.0,442.3 385.0,439.4 386.0,437.0 387.0,439.6 388.0,440.6 389.0,437.5 390.0,439.6 391.0,439.8 392.0,439.6 393.0,440.1 394.0,440.3 395.0,441.8 396.0,439.3 397.0,440.1 398.0,438.4 399.0,440.4 400.0,440.5 401.0,440.1 402.0,437.7 403.0,440.4 404.0,441.1 405.0,441.5 406.0,441.3 407.0,440.3 408.0,441.5 409.0,440.2 410.0,440.3 411.0,439.8 412.0,438.1 413.0,438.0 414.0,440.2 415.0,439.5 416.0,439.0 417.0,440.2 418.0,442.2 419.0,439.1 420.0,438.8 421.0,439.4 422.0,441.1 423.0,440.2 423.9,440.7 424.9,440.3 425.9,438.3 426.9,441.1 427.9,439.1 428.9,439.2 429.9,439.1 430.9,440.0 431.9,440.0 432.9,440.8 433.9,440.0 434.9,437.0 435.9,438.8 436.9,440.4 437.9,440.6 438.9,441.1 439.9,439.5 440.9,439.4 441.9,441.8 442.9,439.3 443.9,440.7 444.9,440.7 445.9,439.7 446.9,437.7 447.9,440.5 448.9,440.3 449.9,439.6 450.9,438.6 451.9,437.4 452.9,441.5 453.9,439.7 454.9,439.9 455.9,440.5 456.9,440.8 457.9,437.7 458.9,440.4 459.9,437.8 460.9,439.1 461.9,441.5 462.9,440.0 463.9,435.9 464.9,439.3 465.9,439.5 466.9,438.7 467.9,439.6 468.9,440.7 469.9,440.4 470.9,440.6 471.9,439.7 472.9,441.3 473.9,442.3 474.9,439.8 475.9,441.7 476.9,442.5 477.9,439.5 478.9,440.9 479.9,439.3 480.9,440.6 481.9,441.4 482.9,441.6 483.9,440.6 484.9,440.3 485.9,441.0 486.9,440.3 487.9,441.9 488.9,436.5 489.9,442.3 490.9,440.2 491.9,439.0 492.9,438.5 493.9,437.7 494.9,442.0 495.9,439.0 496.9,438.4 497.9,438.7 498.9,441.1 499.9,439.4 500.9,437.5 501.9,441.9 502.9,439.3 503.9,438.5 504.9,440.8 505.9,439.2 506.9,441.3 507.9,441.0 508.9,441.0 509.9,439.7 510.9,440.1 511.9,438.7 512.9,441.2 513.9,440.1 514.9,438.7 515.9,439.2 516.9,441.7 517.9,439.1 518.9,440.6 519.9,439.4 520.9,439.6 521.9,438.4 522.9,437.9 523.9,442.3 524.9,441.7 525.9,439.0 526.9,443.1 527.9,438.5 528.9,439.6 529.9,440.9 530.9,438.5 531.9,441.0 532.9,442.6 533.9,437.3 534.9,442.4 535.9,439.1 536.9,440.9 537.9,439.7 538.9,442.1 539.9,438.6 540.9,441.8 541.9,441.7 542.9,440.4 543.9,438.9 544.9,439.6 545.9,438.9 546.9,440.5 547.9,442.9 548.9,441.4 549.9,440.4 550.9,439.2 551.9,440.3 552.9,439.3 553.9,440.7 554.9,440.7 555.9,439.9 556.9,440.2 557.9,441.4 558.9,439.7 559.9,437.7 560.9,440.2 561.9,440.2 562.9,441.3 563.9,439.9 564.9,439.1 565.9,437.3 566.9,436.4 567.9,439.0 568.9,440.1 569.9,436.8 570.9,438.7 571.9,439.8 572.9,439.4 573.9,438.4 574.9,438.5 575.9,440.4 576.9,440.6 577.9,439.6 578.9,440.1 579.9,442.4 580.9,438.3 581.9,439.9 582.9,439.0 583.9,441.5 584.9,435.4 585.9,440.7 586.9,440.1 587.9,441.8 588.9,440.2 589.9,440.2 590.9,443.4 591.9,439.4 592.9,439.9 593.8,438.7 594.8,442.9 595.8,441.2 596.8,440.0 597.8,439.1 598.8,438.3 599.8,438.9 600.8,442.2 601.8,439.5 602.8,438.0 603.8,439.9 604.8,440.6 605.8,439.5 606.8,440.6 607.8,439.1 608.8,440.0 609.8,438.1 610.8,439.3 611.8,440.9 612.8,439.2 613.8,438.7 614.8,440.7 615.8,440.5 616.8,442.9 617.8,438.8 618.8,440.7 619.8,442.7 620.8,442.2 621.8,440.2 622.8,439.0 623.8,440.1 624.8,441.2 625.8,439.1 626.8,441.7 627.8,438.8 628.8,439.3 629.8,440.0 630.8,434.3 631.8,441.2 632.8,440.5 633.8,441.5 634.8,437.6 635.8,439.9 636.8,437.8 637.8,440.7 638.8,439.5 639.8,440.2 640.8,442.0 641.8,439.6 642.8,438.7 643.8,440.1 644.8,440.0 645.8,438.1 646.8,441.6 647.8,441.9 648.8,440.8 649.8,441.5 650.8,438.2 651.8,439.5 652.8,441.1 653.8,440.7 654.8,436.2 655.8,440.7 656.8,438.4 657.8,439.5 658.8,439.1 659.8,435.7 660.8,441.1 661.8,444.0 662.8,439.2 663.8,440.0 664.8,442.1 665.8,438.4 666.8,438.9 667.8,440.3 668.8,443.6 669.8,439.6 670.8,440.8 671.8,441.7 672.8,439.5 673.8,441.8 674.8,439.4 675.8,441.8 676.8,436.7 677.8,440.1 678.8,437.6 679.8,441.3 680.8,441.8 681.8,440.8 682.8,441.4 683.8,440.7 684.8,439.4 685.8,438.9 686.8,437.8 687.8,440.9 688.8,436.5 689.8,437.4 690.8,440.2 691.8,442.9 692.8,440.0 693.8,439.8 694.8,442.9 695.8,439.8 696.8,440.2 697.8,441.0 698.8,439.1 699.8,438.6 700.8,440.6 701.8,439.6 702.8,440.8 703.8,437.6 704.8,439.8 705.8,439.3 706.8,440.7 707.8,442.8 708.8,439.2 709.8,442.0 710.8,439.8 711.8,437.6 712.8,440.0 713.8,441.5 714.8,441.8 715.8,438.4 716.8,440.0 717.8,439.2 718.8,438.7 719.8,440.0 720.8,440.3 721.8,441.2 722.8,443.9 723.8,441.9 724.8,440.0 725.8,440.2 726.8,439.4 727.8,440.1 728.8,439.7 729.8,438.9 730.8,441.1 731.8,442.6 732.8,445.1 733.8,438.7 734.8,439.9 735.8,439.3 736.8,437.9 737.8,438.5 738.8,440.0 739.8,438.9 740.8,441.8 741.8,439.4 742.8,439.8 743.8,442.0 744.8,438.2 745.8,440.9 746.8,439.1 747.8,440.5 748.8,438.7 749.8,434.5 750.8,441.0 751.8,440.0 752.8,440.1 753.8,438.8 754.8,440.4 755.8,440.7 756.8,439.3 757.8,443.5 758.8,440.8 759.8,441.7 760.8,439.6 761.8,440.9 762.8,441.4 763.7,440.4 764.7,441.8 765.7,440.0 766.7,440.8 767.7,440.4 768.7,440.9 769.7,438.8 770.7,440.1 771.7,439.3 772.7,439.3 773.7,441.0 774.7,439.2 775.7,439.5 776.7,439.5 777.7,440.5 778.7,440.5 779.7,438.9 780.7,437.1 781.7,441.0 782.7,439.2 783.7,440.4 784.7,438.9 785.7,439.4 786.7,438.6 787.7,443.6 788.7,440.7 789.7,441.2 790.7,436.5 791.7,440.9 792.7,440.8 793.7,439.1 794.7,437.5 795.7,440.4 796.7,440.3 797.7,435.9 798.7,439.9 799.7,440.4 800.7,441.7 801.7,441.2 802.7,439.0 803.7,438.5 804.7,439.8 805.7,441.0 806.7,439.8 807.7,440.3 808.7,439.2 809.7,439.8 810.7,440.7 811.7,439.7 812.7,438.2 813.7,438.9 814.7,438.4 815.7,441.5 816.7,439.4 817.7,441.2 818.7,435.3 819.7,438.8 820.7,442.8 821.7,438.7 822.7,440.5 823.7,440.8 824.7,440.7 825.7,440.1 826.7,440.4 827.7,439.7 828.7,440.7 829.7,438.9 830.7,438.6 831.7,440.6 832.7,441.8 833.7,439.0 834.7,438.5 835.7,440.2 836.7,441.6 837.7,439.6 838.7,438.0 839.7,442.4 840.7,439.3 841.7,440.3 842.7,439.3 843.7,439.3 844.7,441.6 845.7,439.6 846.7,438.2 847.7,439.7 848.7,441.1 849.7,442.2 850.7,441.6 851.7,439.6 852.7,437.9 853.7,440.3 854.7,441.3 855.7,441.6 856.7,441.3 857.7,440.4 858.7,441.6 859.7,437.8 860.7,440.9 861.7,441.0 862.7,439.5 863.7,438.1 864.7,438.2 865.7,440.6 866.7,439.6 867.7,439.7 868.7,437.4 869.7,439.6 870.7,441.2 871.7,441.6 872.7,439.7 873.7,441.5 874.7,438.2 875.7,439.9 876.7,441.3 877.7,440.4 878.7,440.6 879.7,440.1 880.7,435.3 881.7,441.8 882.7,442.4 883.7,439.5 884.7,440.2 885.7,439.7 886.7,439.4 887.7,440.2 888.7,438.9 889.7,441.1 890.7,439.9 891.7,441.0 892.7,441.4 893.7,439.1 894.7,437.5 895.7,442.5 896.7,441.4 897.7,439.6 898.7,435.9 899.7,440.8 900.7,440.2 901.7,441.8 902.7,436.7 903.7,439.3 904.7,438.8 905.7,439.1 906.7,438.7 907.7,439.2 908.7,440.4 909.7,439.0 910.7,439.8 911.7,438.3 912.7,440.9 913.7,440.6 914.7,435.1 915.7,438.3 916.7,439.8 917.7,440.9 918.7,440.1 919.7,440.6 920.7,437.5 921.7,438.8 922.7,438.3 923.7,439.5 924.7,440.7 925.7,438.4 926.7,437.8 927.7,439.2 928.7,440.0 929.7,438.5 930.7,440.4 931.7,438.9 932.7,440.9 933.6,441.2 934.6,439.2 935.6,439.5 936.6,437.5 937.6,440.3 938.6,439.9 939.6,441.4 940.6,442.4 941.6,442.2 942.6,439.3 943.6,441.5 944.6,438.5 945.6,438.1 946.6,440.3 947.6,437.8 948.6,439.6 949.6,438.5 950.6,440.2 951.6,438.7 952.6,441.2 953.6,437.3 954.6,440.5 955.6,440.1 956.6,439.1 957.6,439.7 958.6,440.0 959.6,439.0 960.6,438.9 961.6,441.7 962.6,439.2 963.6,439.1 964.6,440.9 965.6,439.4 966.6,441.7 967.6,438.1 968.6,440.2 969.6,440.0 970.6,438.4 971.6,440.1 972.6,439.2 973.6,441.3 974.6,440.7 975.6,441.7 976.6,440.2 977.6,438.6 978.6,439.7 979.6,440.7 980.6,441.3 981.6,441.1 982.6,442.6 983.6,439.2 984.6,439.5 985.6,440.0 986.6,439.1 987.6,440.1 988.6,440.0 989.6,438.3 990.6,440.7 991.6,439.7 992.6,435.0 993.6,439.8 994.6,439.0 995.6,443.6 996.6,437.4 997.6,442.9 998.6,441.4 999.6,441.3 1000.6,437.8 1001.6,439.5 1002.6,440.3 1003.6,441.6 1004.6,439.5 1005.6,439.8 1006.6,440.8 1007.6,441.9 1008.6,438.5 1009.6,439.7 1010.6,439.5 1011.6,439.8 1012.6,440.1 1013.6,442.2 1014.6,439.9 1015.6,438.3 1016.6,439.9 1017.6,439.3 1017.6,461.4 339.0,461.4" fill="#eab839" fill-opacity="0.4"/><polygon points="339.0,396.5 340.0,403.4 341.0,390.4 342.0,400.1 343.0,399.5 344.0,406.3 345.0,399.1 346.0,406.9 347.0,398.6 348.0,402.0 349.0,399.8 350.0,402.4 351.0,399.3 352.0,406.2 353.0,400.3 354.0,407.0 355.0,399.8 356.0,400.2 357.0,403.2 358.0,402.7 359.0,396.0 360.0,402.6 361.0,400.4 362.0,400.8 363.0,402.2 364.0,409.5 365.0,397.9 366.0,406.2 367.0,397.6 368.0,400.2 369.0,401.7 370.0,404.5 371.0,398.1 372.0,406.9 373.0,405.1 374.0,409.0 375.0,397.7 376.0,402.9 377.0,396.5 378.0,403.6 379.0,398.8 380.0,402.2 381.0,396.4 382.0,402.2 383.0,400.8 384.0,405.7 385.0,397.5 386.0,400.3 387.0,394.5 388.0,405.3 389.0,394.0 390.0,403.0 391.0,395.8 392.0,404.1 393.0,401.7 394.0,403.9 395.0,400.9 396.0,404.7 397.0,400.6 398.0,406.6 399.0,398.5 400.0,402.6 401.0,398.9 402.0,405.7 403.0,397.6 404.0,411.7 405.0,398.4 406.0,407.9 407.0,401.9 408.0,408.3 409.0,398.2 410.0,407.1 411.0,399.4 412.0,401.4 413.0,396.9 414.0,398.4 415.0,396.0 416.0,405.1 417.0,400.1 418.0,408.9 419.0,396.8 420.0,400.5 421.0,401.8 422.0,408.8 423.0,396.2 423.9,404.6 424.9,398.3 425.9,400.7 426.9,402.0 427.9,399.5 428.9,395.4 429.9,402.1 430.9,399.4 431.9,406.7 432.9,399.8 433.9,401.7 434.9,396.7 435.9,405.2 436.9,395.9 437.9,408.6 438.9,400.7 439.9,402.9 440.9,396.5 441.9,404.7 442.9,399.2 443.9,402.5 444.9,401.5 445.9,404.3 446.9,395.0 447.9,405.0 448.9,396.1 449.9,400.6 450.9,400.3 451.9,401.2 452.9,400.9 453.9,405.0 454.9,400.3 455.9,403.7 456.9,401.2 457.9,401.5 458.9,402.5 459.9,409.5 460.9,396.2 461.9,409.1 462.9,399.9 463.9,398.3 464.9,396.7 465.9,404.1 466.9,395.5 467.9,403.2 468.9,391.4 469.9,404.2 470.9,397.7 471.9,405.7 472.9,401.6 473.9,405.5 474.9,398.5 475.9,402.7 476.9,398.5 477.9,402.7 478.9,400.0 479.9,404.7 480.9,394.9 481.9,406.1 482.9,401.9 483.9,404.4 484.9,396.6 485.9,404.3 486.9,391.6 487.9,404.4 488.9,394.2 489.9,404.3 490.9,396.7 491.9,399.4 492.9,397.2 493.9,406.6 494.9,401.9 495.9,400.1 496.9,397.2 497.9,404.0 498.9,396.1 499.9,406.4 500.9,396.7 501.9,408.4 502.9,400.2 503.9,399.2 504.9,400.6 505.9,405.9 506.9,399.9 507.9,404.4 508.9,404.7 509.9,400.5 510.9,400.5 511.9,403.7 512.9,392.5 513.9,400.3 514.9,395.5 515.9,386.0 516.9,400.7 517.9,401.1 518.9,403.4 519.9,404.0 520.9,400.3 521.9,405.0 522.9,397.2 523.9,404.3 524.9,399.1 525.9,410.0 526.9,401.2 527.9,405.2 528.9,397.6 529.9,402.1 530.9,396.4 531.9,400.0 532.9,402.1 533.9,395.3 534.9,403.4 535.9,401.4 536.9,402.9 537.9,401.0 538.9,395.8 539.9,402.1 540.9,402.9 541.9,404.6 542.9,398.8 543.9,402.0 544.9,398.6 545.9,402.6 546.9,398.9 547.9,408.6 548.9,401.6 549.9,406.0 550.9,398.7 551.9,406.8 552.9,396.9 553.9,380.6 554.9,388.6 555.9,390.5 556.9,376.3 557.9,395.4 558.9,382.3 559.9,388.4 560.9,387.8 561.9,386.1 562.9,388.6 563.9,394.0 564.9,401.0 565.9,399.9 566.9,392.3 567.9,394.6 568.9,395.3 569.9,398.6 570.9,392.0 571.9,398.4 572.9,393.8 573.9,393.6 574.9,384.5 575.9,401.1 576.9,389.9 577.9,398.2 578.9,398.8 579.9,407.2 580.9,397.3 581.9,382.0 582.9,374.3 583.9,389.1 584.9,374.3 585.9,388.8 586.9,383.6 587.9,380.3 588.9,378.6 589.9,385.5 590.9,389.0 591.9,408.6 592.9,398.4 593.8,403.6 594.8,400.5 595.8,407.7 596.8,396.4 597.8,411.6 598.8,398.2 599.8,403.8 600.8,400.9 601.8,406.8 602.8,396.3 603.8,403.3 604.8,397.4 605.8,404.7 606.8,383.9 607.8,389.9 608.8,383.6 609.8,390.3 610.8,383.0 611.8,388.9 612.8,384.0 613.8,401.7 614.8,399.4 615.8,402.9 616.8,404.3 617.8,405.0 618.8,399.5 619.8,409.1 620.8,401.7 621.8,406.9 622.8,405.8 623.8,405.8 624.8,402.4 625.8,403.7 626.8,400.3 627.8,403.3 628.8,404.9 629.8,397.4 630.8,391.0 631.8,409.0 632.8,390.0 633.8,407.9 634.8,395.6 635.8,403.1 636.8,390.2 637.8,404.2 638.8,398.0 639.8,401.0 640.8,398.6 641.8,405.2 642.8,399.8 643.8,401.8 644.8,397.7 645.8,405.8 646.8,399.0 647.8,404.0 648.8,397.2 649.8,405.6 650.8,399.0 651.8,402.6 652.8,399.7 653.8,407.8 654.8,393.3 655.8,406.1 656.8,400.3 657.8,405.4 658.8,404.1 659.8,402.5 660.8,398.7 661.8,404.8 662.8,396.4 663.8,404.8 664.8,398.3 665.8,403.0 666.8,396.8 667.8,406.3 668.8,400.8 669.8,403.7 670.8,396.1 671.8,405.4 672.8,398.1 673.8,405.6 674.8,398.1 675.8,404.0 676.8,396.3 677.8,406.2 678.8,397.4 679.8,404.0 680.8,399.9 681.8,405.1 682.8,400.4 683.8,405.1 684.8,399.8 685.8,404.6 686.8,396.7 687.8,403.7 688.8,395.9 689.8,403.4 690.8,397.5 691.8,396.4 692.8,398.1 693.8,403.1 694.8,396.9 695.8,402.7 696.8,400.5 697.8,404.4 698.8,403.5 699.8,403.1 700.8,398.5 701.8,405.9 702.8,402.6 703.8,401.2 704.8,399.0 705.8,407.1 706.8,398.2 707.8,404.0 708.8,397.8 709.8,403.3 710.8,399.1 711.8,404.2 712.8,399.2 713.8,404.7 714.8,398.5 715.8,406.9 716.8,403.3 717.8,402.8 718.8,397.8 719.8,406.6 720.8,399.5 721.8,406.9 722.8,403.5 723.8,406.0 724.8,400.6 725.8,403.4 726.8,401.4 727.8,404.8 728.8,398.1 729.8,402.9 730.8,400.7 731.8,405.7 732.8,404.7 733.8,404.8 734.8,394.8 735.8,401.3 736.8,396.0 737.8,404.3 738.8,399.5 739.8,402.0 740.8,397.1 741.8,407.2 742.8,403.7 743.8,403.1 744.8,399.1 745.8,404.8 746.8,396.2 747.8,406.6 748.8,388.2 749.8,395.4 750.8,393.2 751.8,400.6 752.8,397.9 753.8,404.0 754.8,399.1 755.8,403.8 756.8,397.9 757.8,407.3 758.8,402.1 759.8,407.0 760.8,399.7 761.8,406.7 762.8,399.6 763.7,403.3 764.7,401.4 765.7,405.7 766.7,401.4 767.7,404.5 768.7,397.0 769.7,401.7 770.7,397.7 771.7,400.5 772.7,398.8 773.7,403.9 774.7,395.4 775.7,405.7 776.7,394.9 777.7,403.1 778.7,401.2 779.7,401.3 780.7,398.7 781.7,402.2 782.7,395.8 783.7,407.6 784.7,400.1 785.7,406.1 786.7,398.0 787.7,405.3 788.7,399.8 789.7,404.1 790.7,395.7 791.7,405.6 792.7,398.4 793.7,401.7 794.7,397.6 795.7,403.9 796.7,398.1 797.7,401.0 798.7,397.9 799.7,399.8 800.7,388.2 801.7,406.9 802.7,401.4 803.7,405.5 804.7,400.5 805.7,405.6 806.7,397.1 807.7,407.9 808.7,400.6 809.7,403.7 810.7,399.9 811.7,402.9 812.7,397.8 813.7,402.0 814.7,397.0 815.7,407.0 816.7,399.6 817.7,407.3 818.7,392.4 819.7,402.2 820.7,398.8 821.7,403.9 822.7,400.8 823.7,407.6 824.7,384.2 825.7,401.0 826.7,404.6 827.7,394.5 828.7,393.5 829.7,402.0 830.7,394.6 831.7,405.3 832.7,398.4 833.7,403.4 834.7,395.0 835.7,405.1 836.7,400.1 837.7,403.2 838.7,395.6 839.7,408.9 840.7,397.6 841.7,402.9 842.7,396.9 843.7,409.5 844.7,402.6 845.7,404.5 846.7,394.9 847.7,411.9 848.7,401.8 849.7,408.9 850.7,399.1 851.7,399.1 852.7,398.5 853.7,403.6 854.7,396.1 855.7,414.4 856.7,398.1 857.7,402.5 858.7,402.4 859.7,399.9 860.7,398.1 861.7,407.6 862.7,391.0 863.7,399.9 864.7,395.4 865.7,404.1 866.7,397.4 867.7,401.9 868.7,396.7 869.7,404.6 870.7,398.4 871.7,405.6 872.7,396.3 873.7,409.9 874.7,397.6 875.7,385.7 876.7,398.5 877.7,406.0 878.7,400.8 879.7,403.8 880.7,395.6 881.7,410.4 882.7,400.7 883.7,408.2 884.7,394.3 885.7,397.2 886.7,400.1 887.7,405.2 888.7,396.9 889.7,412.5 890.7,396.8 891.7,403.8 892.7,400.3 893.7,400.1 894.7,397.1 895.7,331.4 896.7,317.3 897.7,317.8 898.7,323.1 899.7,349.3 900.7,328.0 901.7,328.2 902.7,340.4 903.7,334.0 904.7,317.7 905.7,319.4 906.7,324.4 907.7,403.1 908.7,400.4 909.7,398.9 910.7,392.8 911.7,400.8 912.7,399.0 913.7,408.6 914.7,393.1 915.7,405.0 916.7,398.2 917.7,406.4 918.7,397.2 919.7,402.6 920.7,395.7 921.7,399.5 922.7,392.8 923.7,405.5 924.7,394.3 925.7,407.6 926.7,394.1 927.7,404.4 928.7,400.3 929.7,401.5 930.7,397.2 931.7,403.0 932.7,398.7 933.6,404.7 934.6,396.3 935.6,405.0 936.6,394.7 937.6,404.1 938.6,402.4 939.6,407.8 940.6,402.2 941.6,399.6 942.6,398.0 943.6,403.9 944.6,395.7 945.6,401.9 946.6,395.7 947.6,397.6 948.6,397.8 949.6,399.5 950.6,401.6 951.6,399.5 952.6,398.6 953.6,401.4 954.6,399.0 955.6,403.9 956.6,397.8 957.6,407.3 958.6,402.7 959.6,398.9 960.6,392.2 961.6,403.9 962.6,397.9 963.6,406.8 964.6,398.2 965.6,406.9 966.6,402.7 967.6,402.7 968.6,400.4 969.6,399.5 970.6,395.7 971.6,398.9 972.6,397.9 973.6,404.2 974.6,397.7 975.6,403.4 976.6,397.1 977.6,403.8 978.6,396.2 979.6,403.8 980.6,399.2 981.6,404.7 982.6,401.9 983.6,404.9 984.6,401.6 985.6,404.2 986.6,398.7 987.6,404.2 988.6,397.2 989.6,401.8 990.6,399.9 991.6,400.6 992.6,392.9 993.6,400.6 994.6,398.2 995.6,408.9 996.6,395.1 997.6,397.4 998.6,397.2 999.6,402.9 1000.6,399.1 1001.6,402.4 1002.6,400.6 1003.6,404.6 1004.6,390.2 1005.6,406.0 1006.6,397.1 1007.6,407.7 1008.6,396.9 1009.6,401.6 1010.6,396.8 1011.6,402.8 1012.6,400.7 1013.6,408.7 1014.6,399.4 1015.6,404.1 1016.6,403.1 1017.6,413.2 1017.6,439.3 1016.6,439.9 1015.6,438.3 1014.6,439.9 1013.6,442.2 1012.6,440.1 1011.6,439.8 1010.6,439.5 1009.6,439.7 1008.6,438.5 1007.6,441.9 1006.6,440.8 1005.6,439.8 1004.6,439.5 1003.6,441.6 1002.6,440.3 1001.6,439.5 1000.6,437.8 999.6,441.3 998.6,441.4 997.6,442.9 996.6,437.4 995.6,443.6 994.6,439.0 993.6,439.8 992.6,435.0 991.6,439.7 990.6,440.7 989.6,438.3 988.6,440.0 987.6,440.1 986.6,439.1 985.6,440.0 984.6,439.5 983.6,439.2 982.6,442.6 981.6,441.1 980.6,441.3 979.6,440.7 978.6,439.7 977.6,438.6 976.6,440.2 975.6,441.7 974.6,440.7 973.6,441.3 972.6,439.2 971.6,440.1 970.6,438.4 969.6,440.0 968.6,440.2 967.6,438.1 966.6,441.7 965.6,439.4 964.6,440.9 963.6,439.1 962.6,439.2 961.6,441.7 960.6,438.9 959.6,439.0 958.6,440.0 957.6,439.7 956.6,439.1 955.6,440.1 954.6,440.5 953.6,437.3 952.6,441.2 951.6,438.7 950.6,440.2 949.6,438.5 948.6,439.6 947.6,437.8 946.6,440.3 945.6,438.1 944.6,438.5 943.6,441.5 942.6,439.3 941.6,442.2 940.6,442.4 939.6,441.4 938.6,439.9 937.6,440.3 936.6,437.5 935.6,439.5 934.6,439.2 933.6,441.2 932.7,440.9 931.7,438.9 930.7,440.4 929.7,438.5 928.7,440.0 927.7,439.2 926.7,437.8 925.7,438.4 924.7,440.7 923.7,439.5 922.7,438.3 921.7,438.8 920.7,437.5 919.7,440.6 918.7,440.1 917.7,440.9 916.7,439.8 915.7,438.3 914.7,435.1 913.7,440.6 912.7,440.9 911.7,438.3 910.7,439.8 909.7,439.0 908.7,440.4 907.7,439.2 906.7,438.7 905.7,439.1 904.7,438.8 903.7,439.3 902.7,436.7 901.7,441.8 900.7,440.2 899.7,440.8 898.7,435.9 897.7,439.6 896.7,441.4 895.7,442.5 894.7,437.5 893.7,439.1 892.7,441.4 891.7,441.0 890.7,439.9 889.7,441.1 888.7,438.9 887.7,440.2 886.7,439.4 885.7,439.7 884.7,440.2 883.7,439.5 882.7,442.4 881.7,441.8 880.7,435.3 879.7,440.1 878.7,440.6 877.7,440.4 876.7,441.3 875.7,439.9 874.7,438.2 873.7,441.5 872.7,439.7 871.7,441.6 870.7,441.2 869.7,439.6 868.7,437.4 867.7,439.7 866.7,439.6 865.7,440.6 864.7,438.2 863.7,438.1 862.7,439.5 861.7,441.0 860.7,440.9 859.7,437.8 858.7,441.6 857.7,440.4 856.7,441.3 855.7,441.6 854.7,441.3 853.7,440.3 852.7,437.9 851.7,439.6 850.7,441.6 849.7,442.2 848.7,441.1 847.7,439.7 846.7,438.2 845.7,439.6 844.7,441.6 843.7,439.3 842.7,439.3 841.7,440.3 840.7,439.3 839.7,442.4 838.7,438.0 837.7,439.6 836.7,441.6 835.7,440.2 834.7,438.5 833.7,439.0 832.7,441.8 831.7,440.6 830.7,438.6 829.7,438.9 828.7,440.7 827.7,439.7 826.7,440.4 825.7,440.1 824.7,440.7 823.7,440.8 822.7,440.5 821.7,438.7 820.7,442.8 819.7,438.8 818.7,435.3 817.7,441.2 816.7,439.4 815.7,441.5 814.7,438.4 813.7,438.9 812.7,438.2 811.7,439.7 810.7,440.7 809.7,439.8 808.7,439.2 807.7,440.3 806.7,439.8 805.7,441.0 804.7,439.8 803.7,438.5 802.7,439.0 801.7,441.2 800.7,441.7 799.7,440.4 798.7,439.9 797.7,435.9 796.7,440.3 795.7,440.4 794.7,437.5 793.7,439.1 792.7,440.8 791.7,440.9 790.7,436.5 789.7,441.2 788.7,440.7 787.7,443.6 786.7,438.6 785.7,439.4 784.7,438.9 783.7,440.4 782.7,439.2 781.7,441.0 780.7,437.1 779.7,438.9 778.7,440.5 777.7,440.5 776.7,439.5 775.7,439.5 774.7,439.2 773.7,441.0 772.7,439.3 771.7,439.3 770.7,440.1 769.7,438.8 768.7,440.9 767.7,440.4 766.7,440.8 765.7,440.0 764.7,441.8 763.7,440.4 762.8,441.4 761.8,440.9 760.8,439.6 759.8,441.7 758.8,440.8 757.8,443.5 756.8,439.3 755.8,440.7 754.8,440.4 753.8,438.8 752.8,440.1 751.8,440.0 750.8,441.0 749.8,434.5 748.8,438.7 747.8,440.5 746.8,439.1 745.8,440.9 744.8,438.2 743.8,442.0 742.8,439.8 741.8,439.4 740.8,441.8 739.8,438.9 738.8,440.0 737.8,438.5 736.8,437.9 735.8,439.3 734.8,439.9 733.8,438.7 732.8,445.1 731.8,442.6 730.8,441.1 729.8,438.9 728.8,439.7 727.8,440.1 726.8,439.4 725.8,440.2 724.8,440.0 723.8,441.9 722.8,443.9 721.8,441.2 720.8,440.3 719.8,440.0 718.8,438.7 717.8,439.2 716.8,440.0 715.8,438.4 714.8,441.8 713.8,441.5 712.8,440.0 711.8,437.6 710.8,439.8 709.8,442.0 708.8,439.2 707.8,442.8 706.8,440.7 705.8,439.3 704.8,439.8 703.8,437.6 702.8,440.8 701.8,439.6 700.8,440.6 699.8,438.6 698.8,439.1 697.8,441.0 696.8,440.2 695.8,439.8 694.8,442.9 693.8,439.8 692.8,440.0 691.8,442.9 690.8,440.2 689.8,437.4 688.8,436.5 687.8,440.9 686.8,437.8 685.8,438.9 684.8,439.4 683.8,440.7 682.8,441.4 681.8,440.8 680.8,441.8 679.8,441.3 678.8,437.6 677.8,440.1 676.8,436.7 675.8,441.8 674.8,439.4 673.8,441.8 672.8,439.5 671.8,441.7 670.8,440.8 669.8,439.6 668.8,443.6 667.8,440.3 666.8,438.9 665.8,438.4 664.8,442.1 663.8,440.0 662.8,439.2 661.8,444.0 660.8,441.1 659.8,435.7 658.8,439.1 657.8,439.5 656.8,438.4 655.8,440.7 654.8,436.2 653.8,440.7 652.8,441.1 651.8,439.5 650.8,438.2 649.8,441.5 648.8,440.8 647.8,441.9 646.8,441.6 645.8,438.1 644.8,440.0 643.8,440.1 642.8,438.7 641.8,439.6 640.8,442.0 639.8,440.2 638.8,439.5 637.8,440.7 636.8,437.8 635.8,439.9 634.8,437.6 633.8,441.5 632.8,440.5 631.8,441.2 630.8,434.3 629.8,440.0 628.8,439.3 627.8,438.8 626.8,441.7 625.8,439.1 624.8,441.2 623.8,440.1 622.8,439.0 621.8,440.2 620.8,442.2 619.8,442.7 618.8,440.7 617.8,438.8 616.8,442.9 615.8,440.5 614.8,440.7 613.8,438.7 612.8,439.2 611.8,440.9 610.8,439.3 609.8,438.1 608.8,440.0 607.8,439.1 606.8,440.6 605.8,439.5 604.8,440.6 603.8,439.9 602.8,438.0 601.8,439.5 600.8,442.2 599.8,438.9 598.8,438.3 597.8,439.1 596.8,440.0 595.8,441.2 594.8,442.9 593.8,438.7 592.9,439.9 591.9,439.4 590.9,443.4 589.9,440.2 588.9,440.2 587.9,441.8 586.9,440.1 585.9,440.7 584.9,435.4 583.9,441.5 582.9,439.0 581.9,439.9 580.9,438.3 579.9,442.4 578.9,440.1 577.9,439.6 576.9,440.6 575.9,440.4 574.9,438.5 573.9,438.4 572.9,439.4 571.9,439.8 570.9,438.7 569.9,436.8 568.9,440.1 567.9,439.0 566.9,436.4 565.9,437.3 564.9,439.1 563.9,439.9 562.9,441.3 561.9,440.2 560.9,440.2 559.9,437.7 558.9,439.7 557.9,441.4 556.9,440.2 555.9,439.9 554.9,440.7 553.9,440.7 552.9,439.3 551.9,440.3 550.9,439.2 549.9,440.4 548.9,441.4 547.9,442.9 546.9,440.5 545.9,438.9 544.9,439.6 543.9,438.9 542.9,440.4 541.9,441.7 540.9,441.8 539.9,438.6 538.9,442.1 537.9,439.7 536.9,440.9 535.9,439.1 534.9,442.4 533.9,437.3 532.9,442.6 531.9,441.0 530.9,438.5 529.9,440.9 528.9,439.6 527.9,438.5 526.9,443.1 525.9,439.0 524.9,441.7 523.9,442.3 522.9,437.9 521.9,438.4 520.9,439.6 519.9,439.4 518.9,440.6 517.9,439.1 516.9,441.7 515.9,439.2 514.9,438.7 513.9,440.1 512.9,441.2 511.9,438.7 510.9,440.1 509.9,439.7 508.9,441.0 507.9,441.0 506.9,441.3 505.9,439.2 504.9,440.8 503.9,438.5 502.9,439.3 501.9,441.9 500.9,437.5 499.9,439.4 498.9,441.1 497.9,438.7 496.9,438.4 495.9,439.0 494.9,442.0 493.9,437.7 492.9,438.5 491.9,439.0 490.9,440.2 489.9,442.3 488.9,436.5 487.9,441.9 486.9,440.3 485.9,441.0 484.9,440.3 483.9,440.6 482.9,441.6 481.9,441.4 480.9,440.6 479.9,439.3 478.9,440.9 477.9,439.5 476.9,442.5 475.9,441.7 474.9,439.8 473.9,442.3 472.9,441.3 471.9,439.7 470.9,440.6 469.9,440.4 468.9,440.7 467.9,439.6 466.9,438.7 465.9,439.5 464.9,439.3 463.9,435.9 462.9,440.0 461.9,441.5 460.9,439.1 459.9,437.8 458.9,440.4 457.9,437.7 456.9,440.8 455.9,440.5 454.9,439.9 453.9,439.7 452.9,441.5 451.9,437.4 450.9,438.6 449.9,439.6 448.9,440.3 447.9,440.5 446.9,437.7 445.9,439.7 444.9,440.7 443.9,440.7 442.9,439.3 441.9,441.8 440.9,439.4 439.9,439.5 438.9,441.1 437.9,440.6 436.9,440.4 435.9,438.8 434.9,437.0 433.9,440.0 432.9,440.8 431.9,440.0 430.9,440.0 429.9,439.1 428.9,439.2 427.9,439.1 426.9,441.1 425.9,438.3 424.9,440.3 423.9,440.7 423.0,440.2 422.0,441.1 421.0,439.4 420.0,438.8 419.0,439.1 418.0,442.2 417.0,440.2 416.0,439.0 415.0,439.5 414.0,440.2 413.0,438.0 412.0,438.1 411.0,439.8 410.0,440.3 409.0,440.2 408.0,441.5 407.0,440.3 406.0,441.3 405.0,441.5 404.0,441.1 403.0,440.4 402.0,437.7 401.0,440.1 400.0,440.5 399.0,440.4 398.0,438.4 397.0,440.1 396.0,439.3 395.0,441.8 394.0,440.3 393.0,440.1 392.0,439.6 391.0,439.8 390.0,439.6 389.0,437.5 388.0,440.6 387.0,439.6 386.0,437.0 385.0,439.4 384.0,442.3 383.0,442.2 382.0,440.9 381.0,439.2 380.0,440.2 379.0,438.9 378.0,440.4 377.0,437.7 376.0,438.0 375.0,441.5 374.0,440.8 373.0,442.6 372.0,439.2 371.0,442.1 370.0,438.6 369.0,440.9 368.0,440.5 367.0,438.6 366.0,442.9 365.0,440.5 364.0,441.8 363.0,440.0 362.0,437.3 361.0,440.4 360.0,439.7 359.0,437.8 358.0,441.9 357.0,439.6 356.0,439.8 355.0,439.2 354.0,443.4 353.0,440.3 352.0,440.3 351.0,439.3 350.0,440.2 349.0,440.7 348.0,439.2 347.0,438.6 346.0,442.2 345.0,439.9 344.0,439.9 343.0,441.0 342.0,439.4 341.0,439.9 340.0,440.5 339.0,437.8" fill="#0a437c" fill-opacity="0.5"/><polygon points="339.0,396.2 340.0,403.1 341.0,390.0 342.0,399.7 343.0,399.2 344.0,405.9 345.0,398.8 346.0,406.6 347.0,398.1 348.0,401.8 349.0,399.2 350.0,402.1 351.0,399.0 352.0,405.9 353.0,399.9 354.0,406.7 355.0,399.5 356.0,400.0 357.0,402.9 358.0,402.5 359.0,395.5 360.0,402.4 361.0,400.1 362.0,400.5 363.0,401.8 364.0,409.1 365.0,397.6 366.0,405.5 367.0,397.3 368.0,399.9 369.0,401.3 370.0,404.2 371.0,397.8 372.0,406.6 373.0,404.8 374.0,408.7 375.0,397.4 376.0,402.7 377.0,396.3 378.0,403.3 379.0,398.4 380.0,401.7 381.0,396.1 382.0,401.9 383.0,400.6 384.0,405.3 385.0,397.2 386.0,399.9 387.0,394.2 388.0,404.9 389.0,393.7 390.0,402.8 391.0,395.4 392.0,403.7 393.0,401.4 394.0,403.7 395.0,400.6 396.0,404.4 397.0,400.4 398.0,406.2 399.0,398.2 400.0,402.3 401.0,398.5 402.0,405.4 403.0,397.3 404.0,411.5 405.0,398.0 406.0,407.6 407.0,401.6 408.0,408.0 409.0,397.8 410.0,406.7 411.0,399.2 412.0,401.1 413.0,396.7 414.0,398.0 415.0,395.5 416.0,404.8 417.0,399.8 418.0,408.6 419.0,396.6 420.0,400.3 421.0,401.4 422.0,408.5 423.0,395.9 423.9,404.3 424.9,398.0 425.9,400.4 426.9,401.6 427.9,399.1 428.9,395.1 429.9,401.5 430.9,399.2 431.9,406.4 432.9,399.6 433.9,401.3 434.9,396.5 435.9,404.8 436.9,395.5 437.9,408.3 438.9,400.2 439.9,402.7 440.9,396.2 441.9,404.2 442.9,398.9 443.9,402.3 444.9,401.1 445.9,403.8 446.9,394.6 447.9,404.7 448.9,395.8 449.9,400.3 450.9,400.0 451.9,400.8 452.9,400.6 453.9,404.7 454.9,399.9 455.9,403.4 456.9,400.9 457.9,401.2 458.9,402.3 459.9,409.2 460.9,395.7 461.9,408.9 462.9,399.5 463.9,398.0 464.9,396.3 465.9,403.8 466.9,395.2 467.9,402.8 468.9,391.0 469.9,403.8 470.9,397.5 471.9,405.5 472.9,401.2 473.9,405.0 474.9,398.2 475.9,402.4 476.9,398.1 477.9,402.4 478.9,399.7 479.9,404.2 480.9,394.6 481.9,405.8 482.9,401.4 483.9,404.1 484.9,396.4 485.9,403.9 486.9,391.2 487.9,404.0 488.9,393.8 489.9,403.8 490.9,396.4 491.9,398.9 492.9,396.9 493.9,406.3 494.9,401.5 495.9,399.8 496.9,396.7 497.9,403.7 498.9,395.6 499.9,405.9 500.9,396.4 501.9,408.0 502.9,400.0 503.9,398.8 504.9,400.3 505.9,405.7 506.9,399.4 507.9,404.1 508.9,404.3 509.9,400.1 510.9,400.1 511.9,403.4 512.9,392.2 513.9,399.8 514.9,395.2 515.9,385.5 516.9,400.3 517.9,400.7 518.9,403.0 519.9,403.7 520.9,400.0 521.9,404.8 522.9,396.9 523.9,404.0 524.9,398.9 525.9,409.6 526.9,400.9 527.9,404.9 528.9,397.3 529.9,401.6 530.9,396.0 531.9,399.6 532.9,401.7 533.9,394.8 534.9,403.0 535.9,401.1 536.9,402.5 537.9,400.7 538.9,395.6 539.9,401.8 540.9,402.6 541.9,404.3 542.9,398.5 543.9,401.8 544.9,398.3 545.9,402.3 546.9,398.3 547.9,408.3 548.9,401.1 549.9,405.6 550.9,398.4 551.9,406.6 552.9,396.6 553.9,380.3 554.9,388.4 555.9,390.2 556.9,376.1 557.9,394.9 558.9,382.0 559.9,388.0 560.9,387.4 561.9,385.8 562.9,388.3 563.9,393.7 564.9,400.7 565.9,399.5 566.9,392.0 567.9,394.2 568.9,395.0 569.9,398.2 570.9,391.8 571.9,398.1 572.9,393.5 573.9,393.4 574.9,384.1 575.9,400.7 576.9,389.6 577.9,397.9 578.9,398.6 579.9,406.8 580.9,397.1 581.9,381.6 582.9,374.0 583.9,388.8 584.9,374.0 585.9,388.5 586.9,383.3 587.9,380.0 588.9,378.3 589.9,385.2 590.9,388.7 591.9,408.1 592.9,398.1 593.8,403.2 594.8,400.2 595.8,407.4 596.8,396.1 597.8,411.1 598.8,397.9 599.8,403.5 600.8,400.5 601.8,406.4 602.8,396.0 603.8,403.1 604.8,396.8 605.8,404.5 606.8,383.6 607.8,389.2 608.8,383.4 609.8,389.9 610.8,382.6 611.8,388.7 612.8,383.7 613.8,401.3 614.8,398.9 615.8,402.6 616.8,404.0 617.8,404.7 618.8,399.2 619.8,408.7 620.8,401.4 621.8,406.5 622.8,405.5 623.8,405.5 624.8,402.0 625.8,403.4 626.8,399.9 627.8,403.0 628.8,404.5 629.8,397.0 630.8,390.8 631.8,408.7 632.8,389.6 633.8,407.6 634.8,395.3 635.8,402.9 636.8,390.0 637.8,403.8 638.8,397.7 639.8,400.6 640.8,398.3 641.8,405.0 642.8,399.5 643.8,401.4 644.8,397.3 645.8,405.6 646.8,398.7 647.8,403.7 648.8,396.9 649.8,405.3 650.8,398.7 651.8,402.2 652.8,399.5 653.8,407.5 654.8,392.9 655.8,405.7 656.8,400.1 657.8,404.8 658.8,403.6 659.8,402.1 660.8,398.4 661.8,404.5 662.8,396.1 663.8,404.4 664.8,398.1 665.8,402.7 666.8,396.6 667.8,406.0 668.8,400.5 669.8,403.5 670.8,395.9 671.8,405.0 672.8,397.8 673.8,405.3 674.8,397.8 675.8,403.7 676.8,396.0 677.8,405.9 678.8,396.9 679.8,403.7 680.8,399.6 681.8,404.8 682.8,399.9 683.8,404.8 684.8,399.6 685.8,404.4 686.8,396.3 687.8,403.3 688.8,395.7 689.8,403.2 690.8,397.2 691.8,396.1 692.8,397.7 693.8,402.8 694.8,396.5 695.8,402.3 696.8,400.1 697.8,404.1 698.8,403.2 699.8,402.9 700.8,398.2 701.8,405.6 702.8,402.4 703.8,401.0 704.8,398.6 705.8,406.7 706.8,397.9 707.8,403.6 708.8,397.4 709.8,402.8 710.8,398.6 711.8,403.9 712.8,398.9 713.8,404.3 714.8,398.2 715.8,406.2 716.8,402.8 717.8,402.5 718.8,397.2 719.8,406.2 720.8,399.1 721.8,406.7 722.8,403.2 723.8,405.7 724.8,400.3 725.8,402.9 726.8,401.2 727.8,404.4 728.8,397.6 729.8,402.6 730.8,400.5 731.8,405.3 732.8,404.2 733.8,404.6 734.8,394.5 735.8,400.8 736.8,395.8 737.8,403.9 738.8,399.2 739.8,401.7 740.8,396.6 741.8,406.8 742.8,403.3 743.8,402.8 744.8,398.8 745.8,404.3 746.8,395.9 747.8,406.2 748.8,387.8 749.8,395.1 750.8,392.8 751.8,400.3 752.8,397.5 753.8,403.6 754.8,398.7 755.8,403.6 756.8,397.6 757.8,406.8 758.8,401.6 759.8,406.6 760.8,399.3 761.8,406.1 762.8,399.3 763.7,402.9 764.7,401.1 765.7,405.3 766.7,400.9 767.7,404.2 768.7,396.6 769.7,401.2 770.7,397.4 771.7,400.3 772.7,398.3 773.7,403.5 774.7,395.1 775.7,405.3 776.7,394.6 777.7,402.9 778.7,400.9 779.7,401.1 780.7,398.3 781.7,401.8 782.7,395.5 783.7,407.2 784.7,399.8 785.7,405.9 786.7,397.8 787.7,404.9 788.7,399.5 789.7,403.8 790.7,395.3 791.7,405.3 792.7,398.1 793.7,401.4 794.7,397.3 795.7,403.6 796.7,397.7 797.7,400.7 798.7,397.7 799.7,399.6 800.7,388.0 801.7,406.6 802.7,400.9 803.7,405.2 804.7,400.2 805.7,405.1 806.7,396.4 807.7,407.5 808.7,400.3 809.7,403.4 810.7,399.5 811.7,402.6 812.7,397.4 813.7,401.7 814.7,396.6 815.7,406.6 816.7,399.3 817.7,407.0 818.7,392.2 819.7,401.9 820.7,398.5 821.7,403.6 822.7,400.5 823.7,407.2 824.7,383.9 825.7,400.6 826.7,404.2 827.7,394.1 828.7,393.2 829.7,401.5 830.7,394.4 831.7,405.0 832.7,398.0 833.7,403.1 834.7,394.8 835.7,404.6 836.7,399.9 837.7,402.7 838.7,395.1 839.7,408.6 840.7,397.3 841.7,402.6 842.7,396.6 843.7,409.2 844.7,402.2 845.7,404.2 846.7,394.4 847.7,411.6 848.7,401.4 849.7,408.6 850.7,398.5 851.7,398.8 852.7,398.2 853.7,403.0 854.7,395.8 855.7,414.0 856.7,397.8 857.7,402.2 858.7,402.1 859.7,399.6 860.7,397.9 861.7,407.3 862.7,390.5 863.7,399.6 864.7,394.9 865.7,403.9 866.7,397.2 867.7,401.7 868.7,396.3 869.7,404.2 870.7,397.9 871.7,405.3 872.7,395.9 873.7,409.6 874.7,397.4 875.7,385.3 876.7,398.2 877.7,405.5 878.7,400.4 879.7,403.5 880.7,395.4 881.7,410.2 882.7,400.3 883.7,407.8 884.7,394.0 885.7,396.7 886.7,399.7 887.7,404.8 888.7,396.5 889.7,412.0 890.7,396.6 891.7,403.4 892.7,400.0 893.7,399.7 894.7,396.8 895.7,331.1 896.7,317.0 897.7,317.5 898.7,322.8 899.7,348.9 900.7,327.7 901.7,327.7 902.7,340.1 903.7,333.7 904.7,317.4 905.7,318.9 906.7,324.2 907.7,402.8 908.7,399.9 909.7,398.5 910.7,392.4 911.7,400.4 912.7,398.7 913.7,408.1 914.7,392.8 915.7,404.6 916.7,397.9 917.7,406.1 918.7,396.9 919.7,402.1 920.7,395.5 921.7,399.1 922.7,392.1 923.7,405.2 924.7,394.1 925.7,407.2 926.7,393.8 927.7,404.1 928.7,400.1 929.7,401.2 930.7,396.9 931.7,402.7 932.7,398.3 933.6,404.4 934.6,396.1 935.6,404.6 936.6,394.3 937.6,403.8 938.6,402.1 939.6,407.5 940.6,401.8 941.6,399.3 942.6,397.7 943.6,403.7 944.6,395.4 945.6,401.7 946.6,395.4 947.6,397.2 948.6,397.4 949.6,399.2 950.6,401.2 951.6,399.3 952.6,398.2 953.6,401.2 954.6,398.6 955.6,403.6 956.6,397.4 957.6,406.9 958.6,402.4 959.6,398.5 960.6,391.7 961.6,403.6 962.6,397.5 963.6,406.5 964.6,397.9 965.6,406.7 966.6,402.4 967.6,402.5 968.6,399.7 969.6,399.2 970.6,395.3 971.6,398.5 972.6,397.5 973.6,403.8 974.6,397.5 975.6,402.9 976.6,396.6 977.6,403.4 978.6,395.9 979.6,403.5 980.6,398.8 981.6,404.3 982.6,401.6 983.6,404.4 984.6,401.0 985.6,403.9 986.6,398.4 987.6,403.9 988.6,396.8 989.6,401.5 990.6,399.5 991.6,400.1 992.6,392.6 993.6,400.3 994.6,397.8 995.6,408.6 996.6,394.8 997.6,397.0 998.6,396.6 999.6,402.6 1000.6,398.7 1001.6,402.2 1002.6,400.2 1003.6,404.4 1004.6,389.8 1005.6,405.8 1006.6,396.8 1007.6,407.3 1008.6,396.7 1009.6,401.3 1010.6,396.5 1011.6,402.5 1012.6,400.3 1013.6,408.3 1014.6,399.2 1015.6,403.9 1016.6,402.7 1017.6,412.9 1017.6,413.2 1016.6,403.1 1015.6,404.1 1014.6,399.4 1013.6,408.7 1012.6,400.7 1011.6,402.8 1010.6,396.8 1009.6,401.6 1008.6,396.9 1007.6,407.7 1006.6,397.1 1005.6,406.0 1004.6,390.2 1003.6,404.6 1002.6,400.6 1001.6,402.4 1000.6,399.1 999.6,402.9 998.6,397.2 997.6,397.4 996.6,395.1 995.6,408.9 994.6,398.2 993.6,400.6 992.6,392.9 991.6,400.6 990.6,399.9 989.6,401.8 988.6,397.2 987.6,404.2 986.6,398.7 985.6,404.2 984.6,401.6 983.6,404.9 982.6,401.9 981.6,404.7 980.6,399.2 979.6,403.8 978.6,396.2 977.6,403.8 976.6,397.1 975.6,403.4 974.6,397.7 973.6,404.2 972.6,397.9 971.6,398.9 970.6,395.7 969.6,399.5 968.6,400.4 967.6,402.7 966.6,402.7 965.6,406.9 964.6,398.2 963.6,406.8 962.6,397.9 961.6,403.9 960.6,392.2 959.6,398.9 958.6,402.7 957.6,407.3 956.6,397.8 955.6,403.9 954.6,399.0 953.6,401.4 952.6,398.6 951.6,399.5 950.6,401.6 949.6,399.5 948.6,397.8 947.6,397.6 946.6,395.7 945.6,401.9 944.6,395.7 943.6,403.9 942.6,398.0 941.6,399.6 940.6,402.2 939.6,407.8 938.6,402.4 937.6,404.1 936.6,394.7 935.6,405.0 934.6,396.3 933.6,404.7 932.7,398.7 931.7,403.0 930.7,397.2 929.7,401.5 928.7,400.3 927.7,404.4 926.7,394.1 925.7,407.6 924.7,394.3 923.7,405.5 922.7,392.8 921.7,399.5 920.7,395.7 919.7,402.6 918.7,397.2 917.7,406.4 916.7,398.2 915.7,405.0 914.7,393.1 913.7,408.6 912.7,399.0 911.7,400.8 910.7,392.8 909.7,398.9 908.7,400.4 907.7,403.1 906.7,324.4 905.7,319.4 904.7,317.7 903.7,334.0 902.7,340.4 901.7,328.2 900.7,328.0 899.7,349.3 898.7,323.1 897.7,317.8 896.7,317.3 895.7,331.4 894.7,397.1 893.7,400.1 892.7,400.3 891.7,403.8 890.7,396.8 889.7,412.5 888.7,396.9 887.7,405.2 886.7,400.1 885.7,397.2 884.7,394.3 883.7,408.2 882.7,400.7 881.7,410.4 880.7,395.6 879.7,403.8 878.7,400.8 877.7,406.0 876.7,398.5 875.7,385.7 874.7,397.6 873.7,409.9 872.7,396.3 871.7,405.6 870.7,398.4 869.7,404.6 868.7,396.7 867.7,401.9 866.7,397.4 865.7,404.1 864.7,395.4 863.7,399.9 862.7,391.0 861.7,407.6 860.7,398.1 859.7,399.9 858.7,402.4 857.7,402.5 856.7,398.1 855.7,414.4 854.7,396.1 853.7,403.6 852.7,398.5 851.7,399.1 850.7,399.1 849.7,408.9 848.7,401.8 847.7,411.9 846.7,394.9 845.7,404.5 844.7,402.6 843.7,409.5 842.7,396.9 841.7,402.9 840.7,397.6 839.7,408.9 838.7,395.6 837.7,403.2 836.7,400.1 835.7,405.1 834.7,395.0 833.7,403.4 832.7,398.4 831.7,405.3 830.7,394.6 829.7,402.0 828.7,393.5 827.7,394.5 826.7,404.6 825.7,401.0 824.7,384.2 823.7,407.6 822.7,400.8 821.7,403.9 820.7,398.8 819.7,402.2 818.7,392.4 817.7,407.3 816.7,399.6 815.7,407.0 814.7,397.0 813.7,402.0 812.7,397.8 811.7,402.9 810.7,399.9 809.7,403.7 808.7,400.6 807.7,407.9 806.7,397.1 805.7,405.6 804.7,400.5 803.7,405.5 802.7,401.4 801.7,406.9 800.7,388.2 799.7,399.8 798.7,397.9 797.7,401.0 796.7,398.1 795.7,403.9 794.7,397.6 793.7,401.7 792.7,398.4 791.7,405.6 790.7,395.7 789.7,404.1 788.7,399.8 787.7,405.3 786.7,398.0 785.7,406.1 784.7,400.1 783.7,407.6 782.7,395.8 781.7,402.2 780.7,398.7 779.7,401.3 778.7,401.2 777.7,403.1 776.7,394.9 775.7,405.7 774.7,395.4 773.7,403.9 772.7,398.8 771.7,400.5 770.7,397.7 769.7,401.7 768.7,397.0 767.7,404.5 766.7,401.4 765.7,405.7 764.7,401.4 763.7,403.3 762.8,399.6 761.8,406.7 760.8,399.7 759.8,407.0 758.8,402.1 757.8,407.3 756.8,397.9 755.8,403.8 754.8,399.1 753.8,404.0 752.8,397.9 751.8,400.6 750.8,393.2 749.8,395.4 748.8,388.2 747.8,406.6 746.8,396.2 745.8,404.8 744.8,399.1 743.8,403.1 742.8,403.7 741.8,407.2 740.8,397.1 739.8,402.0 738.8,399.5 737.8,404.3 736.8,396.0 735.8,401.3 734.8,394.8 733.8,404.8 732.8,404.7 731.8,405.7 730.8,400.7 729.8,402.9 728.8,398.1 727.8,404.8 726.8,401.4 725.8,403.4 724.8,400.6 723.8,406.0 722.8,403.5 721.8,406.9 720.8,399.5 719.8,406.6 718.8,397.8 717.8,402.8 716.8,403.3 715.8,406.9 714.8,398.5 713.8,404.7 712.8,399.2 711.8,404.2 710.8,399.1 709.8,403.3 708.8,397.8 707.8,404.0 706.8,398.2 705.8,407.1 704.8,399.0 703.8,401.2 702.8,402.6 701.8,405.9 700.8,398.5 699.8,403.1 698.8,403.5 697.8,404.4 696.8,400.5 695.8,402.7 694.8,396.9 693.8,403.1 692.8,398.1 691.8,396.4 690.8,397.5 689.8,403.4 688.8,395.9 687.8,403.7 686.8,396.7 685.8,404.6 684.8,399.8 683.8,405.1 682.8,400.4 681.8,405.1 680.8,399.9 679.8,404.0 678.8,397.4 677.8,406.2 676.8,396.3 675.8,404.0 674.8,398.1 673.8,405.6 672.8,398.1 671.8,405.4 670.8,396.1 669.8,403.7 668.8,400.8 667.8,406.3 666.8,396.8 665.8,403.0 664.8,398.3 663.8,404.8 662.8,396.4 661.8,404.8 660.8,398.7 659.8,402.5 658.8,404.1 657.8,405.4 656.8,400.3 655.8,406.1 654.8,393.3 653.8,407.8 652.8,399.7 651.8,402.6 650.8,399.0 649.8,405.6 648.8,397.2 647.8,404.0 646.8,399.0 645.8,405.8 644.8,397.7 643.8,401.8 642.8,399.8 641.8,405.2 640.8,398.6 639.8,401.0 638.8,398.0 637.8,404.2 636.8,390.2 635.8,403.1 634.8,395.6 633.8,407.9 632.8,390.0 631.8,409.0 630.8,391.0 629.8,397.4 628.8,404.9 627.8,403.3 626.8,400.3 625.8,403.7 624.8,402.4 623.8,405.8 622.8,405.8 621.8,406.9 620.8,401.7 619.8,409.1 618.8,399.5 617.8,405.0 616.8,404.3 615.8,402.9 614.8,399.4 613.8,401.7 612.8,384.0 611.8,388.9 610.8,383.0 609.8,390.3 608.8,383.6 607.8,389.9 606.8,383.9 605.8,404.7 604.8,397.4 603.8,403.3 602.8,396.3 601.8,406.8 600.8,400.9 599.8,403.8 598.8,398.2 597.8,411.6 596.8,396.4 595.8,407.7 594.8,400.5 593.8,403.6 592.9,398.4 591.9,408.6 590.9,389.0 589.9,385.5 588.9,378.6 587.9,380.3 586.9,383.6 585.9,388.8 584.9,374.3 583.9,389.1 582.9,374.3 581.9,382.0 580.9,397.3 579.9,407.2 578.9,398.8 577.9,398.2 576.9,389.9 575.9,401.1 574.9,384.5 573.9,393.6 572.9,393.8 571.9,398.4 570.9,392.0 569.9,398.6 568.9,395.3 567.9,394.6 566.9,392.3 565.9,399.9 564.9,401.0 563.9,394.0 562.9,388.6 561.9,386.1 560.9,387.8 559.9,388.4 558.9,382.3 557.9,395.4 556.9,376.3 555.9,390.5 554.9,388.6 553.9,380.6 552.9,396.9 551.9,406.8 550.9,398.7 549.9,406.0 548.9,401.6 547.9,408.6 546.9,398.9 545.9,402.6 544.9,398.6 543.9,402.0 542.9,398.8 541.9,404.6 540.9,402.9 539.9,402.1 538.9,395.8 537.9,401.0 536.9,402.9 535.9,401.4 534.9,403.4 533.9,395.3 532.9,402.1 531.9,400.0 530.9,396.4 529.9,402.1 528.9,397.6 527.9,405.2 526.9,401.2 525.9,410.0 524.9,399.1 523.9,404.3 522.9,397.2 521.9,405.0 520.9,400.3 519.9,404.0 518.9,403.4 517.9,401.1 516.9,400.7 515.9,386.0 514.9,395.5 513.9,400.3 512.9,392.5 511.9,403.7 510.9,400.5 509.9,400.5 508.9,404.7 507.9,404.4 506.9,399.9 505.9,405.9 504.9,400.6 503.9,399.2 502.9,400.2 501.9,408.4 500.9,396.7 499.9,406.4 498.9,396.1 497.9,404.0 496.9,397.2 495.9,400.1 494.9,401.9 493.9,406.6 492.9,397.2 491.9,399.4 490.9,396.7 489.9,404.3 488.9,394.2 487.9,404.4 486.9,391.6 485.9,404.3 484.9,396.6 483.9,404.4 482.9,401.9 481.9,406.1 480.9,394.9 479.9,404.7 478.9,400.0 477.9,402.7 476.9,398.5 475.9,402.7 474.9,398.5 473.9,405.5 472.9,401.6 471.9,405.7 470.9,397.7 469.9,404.2 468.9,391.4 467.9,403.2 466.9,395.5 465.9,404.1 464.9,396.7 463.9,398.3 462.9,399.9 461.9,409.1 460.9,396.2 459.9,409.5 458.9,402.5 457.9,401.5 456.9,401.2 455.9,403.7 454.9,400.3 453.9,405.0 452.9,400.9 451.9,401.2 450.9,400.3 449.9,400.6 448.9,396.1 447.9,405.0 446.9,395.0 445.9,404.3 444.9,401.5 443.9,402.5 442.9,399.2 441.9,404.7 440.9,396.5 439.9,402.9 438.9,400.7 437.9,408.6 436.9,395.9 435.9,405.2 434.9,396.7 433.9,401.7 432.9,399.8 431.9,406.7 430.9,399.4 429.9,402.1 428.9,395.4 427.9,399.5 426.9,402.0 425.9,400.7 424.9,398.3 423.9,404.6 423.0,396.2 422.0,408.8 421.0,401.8 420.0,400.5 419.0,396.8 418.0,408.9 417.0,400.1 416.0,405.1 415.0,396.0 414.0,398.4 413.0,396.9 412.0,401.4 411.0,399.4 410.0,407.1 409.0,398.2 408.0,408.3 407.0,401.9 406.0,407.9 405.0,398.4 404.0,411.7 403.0,397.6 402.0,405.7 401.0,398.9 400.0,402.6 399.0,398.5 398.0,406.6 397.0,400.6 396.0,404.7 395.0,400.9 394.0,403.9 393.0,401.7 392.0,404.1 391.0,395.8 390.0,403.0 389.0,394.0 388.0,405.3 387.0,394.5 386.0,400.3 385.0,397.5 384.0,405.7 383.0,400.8 382.0,402.2 381.0,396.4 380.0,402.2 379.0,398.8 378.0,403.6 377.0,396.5 376.0,402.9 375.0,397.7 374.0,409.0 373.0,405.1 372.0,406.9 371.0,398.1 370.0,404.5 369.0,401.7 368.0,400.2 367.0,397.6 366.0,406.2 365.0,397.9 364.0,409.5 363.0,402.2 362.0,400.8 361.0,400.4 360.0,402.6 359.0,396.0 358.0,402.7 357.0,403.2 356.0,400.2 355.0,399.8 354.0,407.0 353.0,400.3 352.0,406.2 351.0,399.3 350.0,402.4 349.0,399.8 348.0,402.0 347.0,398.6 346.0,406.9 345.0,399.1 344.0,406.3 343.0,399.5 342.0,400.1 341.0,390.4 340.0,403.4 339.0,396.5" fill="#890f02" fill-opacity="0.4"/><polygon points="339.0,395.9 340.0,402.7 341.0,389.4 342.0,399.4 343.0,398.7 344.0,405.6 345.0,397.6 346.0,401.0 347.0,397.0 348.0,401.3 349.0,398.9 350.0,401.6 351.0,398.5 352.0,405.6 353.0,399.5 354.0,406.3 355.0,399.1 356.0,399.5 357.0,401.8 358.0,396.0 359.0,394.1 360.0,402.0 361.0,399.8 362.0,400.1 363.0,401.5 364.0,408.1 365.0,392.9 366.0,404.5 367.0,396.9 368.0,399.5 369.0,400.9 370.0,403.8 371.0,397.5 372.0,406.2 373.0,404.4 374.0,408.3 375.0,397.0 376.0,402.2 377.0,395.7 378.0,402.7 379.0,397.9 380.0,401.3 381.0,395.7 382.0,401.4 383.0,399.9 384.0,404.9 385.0,396.7 386.0,399.1 387.0,393.8 388.0,404.2 389.0,393.2 390.0,402.2 391.0,394.8 392.0,403.4 393.0,400.9 394.0,403.1 395.0,400.2 396.0,404.0 397.0,400.0 398.0,405.7 399.0,397.7 400.0,401.6 401.0,398.1 402.0,405.1 403.0,396.9 404.0,410.7 405.0,394.8 406.0,406.8 407.0,400.9 408.0,407.6 409.0,397.3 410.0,406.1 411.0,398.8 412.0,400.7 413.0,396.3 414.0,397.6 415.0,395.0 416.0,404.4 417.0,399.2 418.0,407.8 419.0,396.1 420.0,399.8 421.0,401.0 422.0,408.1 423.0,395.4 423.9,403.8 424.9,397.5 425.9,399.7 426.9,401.1 427.9,398.5 428.9,394.4 429.9,400.8 430.9,398.8 431.9,405.7 432.9,398.9 433.9,401.0 434.9,396.1 435.9,404.5 436.9,394.6 437.9,407.7 438.9,399.6 439.9,402.3 440.9,395.8 441.9,403.8 442.9,398.3 443.9,401.3 444.9,400.7 445.9,403.4 446.9,394.1 447.9,404.4 448.9,395.3 449.9,399.8 450.9,399.5 451.9,400.4 452.9,400.1 453.9,403.9 454.9,399.4 455.9,402.8 456.9,400.3 457.9,400.6 458.9,401.9 459.9,408.6 460.9,395.2 461.9,408.3 462.9,399.1 463.9,397.7 464.9,395.8 465.9,403.1 466.9,394.5 467.9,402.4 468.9,390.5 469.9,403.4 470.9,397.0 471.9,404.7 472.9,400.9 473.9,404.7 474.9,397.8 475.9,401.8 476.9,397.7 477.9,401.9 478.9,399.1 479.9,403.8 480.9,394.2 481.9,405.4 482.9,401.1 483.9,403.4 484.9,395.8 485.9,402.2 486.9,381.0 487.9,402.3 488.9,393.1 489.9,403.5 490.9,396.0 491.9,398.5 492.9,396.4 493.9,405.7 494.9,401.1 495.9,399.4 496.9,396.1 497.9,403.4 498.9,394.9 499.9,405.6 500.9,396.0 501.9,407.6 502.9,399.5 503.9,398.3 504.9,399.9 505.9,405.3 506.9,399.0 507.9,403.3 508.9,403.8 509.9,399.8 510.9,399.6 511.9,401.4 512.9,380.0 513.9,397.5 514.9,392.0 515.9,364.4 516.9,397.1 517.9,400.3 518.9,402.5 519.9,403.3 520.9,399.6 521.9,404.4 522.9,396.3 523.9,403.7 524.9,398.3 525.9,408.9 526.9,400.5 527.9,404.4 528.9,396.8 529.9,401.2 530.9,394.3 531.9,389.9 532.9,399.7 533.9,394.1 534.9,402.7 535.9,400.2 536.9,402.0 537.9,400.0 538.9,395.1 539.9,401.4 540.9,402.1 541.9,403.9 542.9,397.9 543.9,401.3 544.9,398.0 545.9,401.8 546.9,397.8 547.9,408.0 548.9,400.8 549.9,405.1 550.9,397.8 551.9,406.2 552.9,393.8 553.9,362.4 554.9,385.5 555.9,388.9 556.9,368.5 557.9,393.4 558.9,381.7 559.9,387.7 560.9,385.5 561.9,376.5 562.9,386.7 563.9,393.3 564.9,400.3 565.9,398.9 566.9,391.0 567.9,388.3 568.9,393.9 569.9,397.0 570.9,386.5 571.9,397.0 572.9,392.1 573.9,387.8 574.9,382.9 575.9,399.4 576.9,384.4 577.9,396.8 578.9,397.9 579.9,406.1 580.9,396.7 581.9,379.8 582.9,365.1 583.9,386.8 584.9,370.5 585.9,387.3 586.9,381.8 587.9,371.1 588.9,376.6 589.9,384.7 590.9,388.3 591.9,407.7 592.9,397.6 593.8,402.9 594.8,399.8 595.8,407.0 596.8,395.7 597.8,410.5 598.8,397.5 599.8,403.1 600.8,400.1 601.8,405.7 602.8,395.7 603.8,402.7 604.8,396.4 605.8,403.6 606.8,380.7 607.8,388.4 608.8,383.0 609.8,389.4 610.8,381.5 611.8,388.0 612.8,383.1 613.8,400.6 614.8,398.5 615.8,402.2 616.8,403.6 617.8,404.3 618.8,398.9 619.8,408.3 620.8,400.9 621.8,405.9 622.8,405.1 623.8,405.0 624.8,401.5 625.8,403.1 626.8,399.5 627.8,402.6 628.8,402.8 629.8,386.7 630.8,389.0 631.8,408.1 632.8,388.8 633.8,407.2 634.8,394.8 635.8,402.5 636.8,389.6 637.8,403.4 638.8,397.4 639.8,400.1 640.8,398.0 641.8,404.6 642.8,398.9 643.8,401.0 644.8,397.0 645.8,405.2 646.8,398.4 647.8,403.3 648.8,396.5 649.8,405.0 650.8,398.2 651.8,401.7 652.8,399.1 653.8,406.9 654.8,392.6 655.8,405.2 656.8,399.7 657.8,404.2 658.8,403.2 659.8,401.5 660.8,397.8 661.8,404.1 662.8,395.7 663.8,403.8 664.8,397.6 665.8,402.3 666.8,396.0 667.8,405.4 668.8,400.2 669.8,402.8 670.8,395.5 671.8,404.6 672.8,397.1 673.8,404.8 674.8,397.3 675.8,403.2 676.8,395.6 677.8,405.6 678.8,396.5 679.8,403.3 680.8,399.1 681.8,404.4 682.8,399.4 683.8,404.4 684.8,399.2 685.8,403.9 686.8,395.6 687.8,402.9 688.8,395.2 689.8,402.3 690.8,396.9 691.8,395.7 692.8,397.1 693.8,402.2 694.8,396.1 695.8,401.7 696.8,399.3 697.8,403.7 698.8,402.9 699.8,402.2 700.8,397.6 701.8,405.0 702.8,401.6 703.8,400.4 704.8,398.3 705.8,406.2 706.8,397.3 707.8,403.3 708.8,396.9 709.8,402.5 710.8,398.1 711.8,403.4 712.8,398.4 713.8,403.9 714.8,397.8 715.8,405.8 716.8,402.3 717.8,402.1 718.8,396.9 719.8,405.7 720.8,398.8 721.8,406.2 722.8,402.7 723.8,405.0 724.8,399.6 725.8,402.5 726.8,400.3 727.8,403.8 728.8,397.2 729.8,402.2 730.8,400.0 731.8,404.9 732.8,403.7 733.8,404.3 734.8,394.1 735.8,399.9 736.8,395.4 737.8,403.2 738.8,398.8 739.8,401.3 740.8,396.1 741.8,406.3 742.8,402.8 743.8,402.3 744.8,398.4 745.8,403.9 746.8,395.4 747.8,405.7 748.8,387.4 749.8,394.7 750.8,392.4 751.8,399.8 752.8,397.2 753.8,403.1 754.8,398.2 755.8,402.7 756.8,396.9 757.8,406.3 758.8,401.1 759.8,406.3 760.8,399.0 761.8,405.8 762.8,398.9 763.7,402.2 764.7,400.7 765.7,404.8 766.7,400.5 767.7,403.8 768.7,396.3 769.7,400.8 770.7,397.1 771.7,399.9 772.7,397.9 773.7,403.1 774.7,394.5 775.7,404.8 776.7,394.2 777.7,402.4 778.7,400.4 779.7,400.6 780.7,397.9 781.7,401.0 782.7,394.8 783.7,406.9 784.7,399.2 785.7,405.2 786.7,397.0 787.7,404.5 788.7,399.0 789.7,403.4 790.7,394.9 791.7,404.8 792.7,397.8 793.7,401.1 794.7,396.9 795.7,403.2 796.7,397.3 797.7,400.1 798.7,397.4 799.7,396.2 800.7,365.1 801.7,403.3 802.7,400.5 803.7,404.5 804.7,399.6 805.7,404.0 806.7,391.4 807.7,406.5 808.7,399.5 809.7,402.5 810.7,399.0 811.7,402.1 812.7,397.0 813.7,401.3 814.7,395.8 815.7,406.2 816.7,398.9 817.7,406.6 818.7,391.7 819.7,401.5 820.7,398.0 821.7,402.7 822.7,400.0 823.7,404.1 824.7,362.8 825.7,397.2 826.7,403.5 827.7,393.7 828.7,392.7 829.7,400.9 830.7,394.0 831.7,404.6 832.7,397.5 833.7,402.6 834.7,394.4 835.7,404.1 836.7,399.2 837.7,402.4 838.7,394.5 839.7,408.2 840.7,396.7 841.7,402.0 842.7,396.1 843.7,408.8 844.7,401.9 845.7,403.6 846.7,393.8 847.7,411.3 848.7,400.6 849.7,408.2 850.7,398.1 851.7,398.3 852.7,397.7 853.7,402.6 854.7,395.3 855.7,413.6 856.7,397.5 857.7,401.6 858.7,401.5 859.7,399.3 860.7,397.5 861.7,407.0 862.7,390.1 863.7,399.2 864.7,394.1 865.7,403.2 866.7,396.7 867.7,401.3 868.7,395.9 869.7,403.7 870.7,397.4 871.7,405.0 872.7,395.5 873.7,409.1 874.7,394.1 875.7,363.6 876.7,395.0 877.7,405.1 878.7,400.0 879.7,403.1 880.7,395.0 881.7,409.5 882.7,400.0 883.7,407.3 884.7,393.7 885.7,396.2 886.7,399.3 887.7,404.3 888.7,396.1 889.7,411.6 890.7,396.2 891.7,403.0 892.7,398.7 893.7,394.4 894.7,395.8 895.7,328.7 896.7,310.9 897.7,314.8 898.7,320.7 899.7,346.5 900.7,324.3 901.7,325.0 902.7,338.1 903.7,331.0 904.7,311.8 905.7,315.0 906.7,322.1 907.7,402.4 908.7,398.6 909.7,392.4 910.7,391.2 911.7,400.0 912.7,398.3 913.7,407.8 914.7,392.3 915.7,404.0 916.7,397.4 917.7,405.7 918.7,396.5 919.7,401.7 920.7,395.0 921.7,398.8 922.7,391.7 923.7,404.1 924.7,389.6 925.7,406.3 926.7,393.4 927.7,403.7 928.7,399.6 929.7,400.8 930.7,396.6 931.7,402.3 932.7,398.0 933.6,403.9 934.6,395.6 935.6,404.3 936.6,393.7 937.6,403.2 938.6,401.5 939.6,407.1 940.6,401.4 941.6,398.8 942.6,397.2 943.6,403.2 944.6,394.9 945.6,401.3 946.6,395.0 947.6,396.7 948.6,396.8 949.6,398.7 950.6,400.7 951.6,398.8 952.6,397.6 953.6,400.7 954.6,398.1 955.6,403.3 956.6,397.1 957.6,406.6 958.6,401.9 959.6,398.0 960.6,391.2 961.6,403.0 962.6,397.1 963.6,406.0 964.6,397.5 965.6,406.3 966.6,402.0 967.6,401.9 968.6,399.2 969.6,398.7 970.6,394.6 971.6,398.0 972.6,396.9 973.6,403.3 974.6,397.1 975.6,402.0 976.6,392.2 977.6,402.5 978.6,395.5 979.6,402.6 980.6,398.2 981.6,403.9 982.6,401.3 983.6,404.0 984.6,400.5 985.6,403.2 986.6,398.0 987.6,403.0 988.6,396.4 989.6,400.9 990.6,399.0 991.6,399.5 992.6,390.6 993.6,399.6 994.6,397.4 995.6,408.3 996.6,394.3 997.6,396.6 998.6,396.0 999.6,402.1 1000.6,398.4 1001.6,401.7 1002.6,399.8 1003.6,404.0 1004.6,389.3 1005.6,405.4 1006.6,396.2 1007.6,406.7 1008.6,396.2 1009.6,400.8 1010.6,396.1 1011.6,402.1 1012.6,400.0 1013.6,407.9 1014.6,398.8 1015.6,403.6 1016.6,402.3 1017.6,412.5 1017.6,412.9 1016.6,402.7 1015.6,403.9 1014.6,399.2 1013.6,408.3 1012.6,400.3 1011.6,402.5 1010.6,396.5 1009.6,401.3 1008.6,396.7 1007.6,407.3 1006.6,396.8 1005.6,405.8 1004.6,389.8 1003.6,404.4 1002.6,400.2 1001.6,402.2 1000.6,398.7 999.6,402.6 998.6,396.6 997.6,397.0 996.6,394.8 995.6,408.6 994.6,397.8 993.6,400.3 992.6,392.6 991.6,400.1 990.6,399.5 989.6,401.5 988.6,396.8 987.6,403.9 986.6,398.4 985.6,403.9 984.6,401.0 983.6,404.4 982.6,401.6 981.6,404.3 980.6,398.8 979.6,403.5 978.6,395.9 977.6,403.4 976.6,396.6 975.6,402.9 974.6,397.5 973.6,403.8 972.6,397.5 971.6,398.5 970.6,395.3 969.6,399.2 968.6,399.7 967.6,402.5 966.6,402.4 965.6,406.7 964.6,397.9 963.6,406.5 962.6,397.5 961.6,403.6 960.6,391.7 959.6,398.5 958.6,402.4 957.6,406.9 956.6,397.4 955.6,403.6 954.6,398.6 953.6,401.2 952.6,398.2 951.6,399.3 950.6,401.2 949.6,399.2 948.6,397.4 947.6,397.2 946.6,395.4 945.6,401.7 944.6,395.4 943.6,403.7 942.6,397.7 941.6,399.3 940.6,401.8 939.6,407.5 938.6,402.1 937.6,403.8 936.6,394.3 935.6,404.6 934.6,396.1 933.6,404.4 932.7,398.3 931.7,402.7 930.7,396.9 929.7,401.2 928.7,400.1 927.7,404.1 926.7,393.8 925.7,407.2 924.7,394.1 923.7,405.2 922.7,392.1 921.7,399.1 920.7,395.5 919.7,402.1 918.7,396.9 917.7,406.1 916.7,397.9 915.7,404.6 914.7,392.8 913.7,408.1 912.7,398.7 911.7,400.4 910.7,392.4 909.7,398.5 908.7,399.9 907.7,402.8 906.7,324.2 905.7,318.9 904.7,317.4 903.7,333.7 902.7,340.1 901.7,327.7 900.7,327.7 899.7,348.9 898.7,322.8 897.7,317.5 896.7,317.0 895.7,331.1 894.7,396.8 893.7,399.7 892.7,400.0 891.7,403.4 890.7,396.6 889.7,412.0 888.7,396.5 887.7,404.8 886.7,399.7 885.7,396.7 884.7,394.0 883.7,407.8 882.7,400.3 881.7,410.2 880.7,395.4 879.7,403.5 878.7,400.4 877.7,405.5 876.7,398.2 875.7,385.3 874.7,397.4 873.7,409.6 872.7,395.9 871.7,405.3 870.7,397.9 869.7,404.2 868.7,396.3 867.7,401.7 866.7,397.2 865.7,403.9 864.7,394.9 863.7,399.6 862.7,390.5 861.7,407.3 860.7,397.9 859.7,399.6 858.7,402.1 857.7,402.2 856.7,397.8 855.7,414.0 854.7,395.8 853.7,403.0 852.7,398.2 851.7,398.8 850.7,398.5 849.7,408.6 848.7,401.4 847.7,411.6 846.7,394.4 845.7,404.2 844.7,402.2 843.7,409.2 842.7,396.6 841.7,402.6 840.7,397.3 839.7,408.6 838.7,395.1 837.7,402.7 836.7,399.9 835.7,404.6 834.7,394.8 833.7,403.1 832.7,398.0 831.7,405.0 830.7,394.4 829.7,401.5 828.7,393.2 827.7,394.1 826.7,404.2 825.7,400.6 824.7,383.9 823.7,407.2 822.7,400.5 821.7,403.6 820.7,398.5 819.7,401.9 818.7,392.2 817.7,407.0 816.7,399.3 815.7,406.6 814.7,396.6 813.7,401.7 812.7,397.4 811.7,402.6 810.7,399.5 809.7,403.4 808.7,400.3 807.7,407.5 806.7,396.4 805.7,405.1 804.7,400.2 803.7,405.2 802.7,400.9 801.7,406.6 800.7,388.0 799.7,399.6 798.7,397.7 797.7,400.7 796.7,397.7 795.7,403.6 794.7,397.3 793.7,401.4 792.7,398.1 791.7,405.3 790.7,395.3 789.7,403.8 788.7,399.5 787.7,404.9 786.7,397.8 785.7,405.9 784.7,399.8 783.7,407.2 782.7,395.5 781.7,401.8 780.7,398.3 779.7,401.1 778.7,400.9 777.7,402.9 776.7,394.6 775.7,405.3 774.7,395.1 773.7,403.5 772.7,398.3 771.7,400.3 770.7,397.4 769.7,401.2 768.7,396.6 767.7,404.2 766.7,400.9 765.7,405.3 764.7,401.1 763.7,402.9 762.8,399.3 761.8,406.1 760.8,399.3 759.8,406.6 758.8,401.6 757.8,406.8 756.8,397.6 755.8,403.6 754.8,398.7 753.8,403.6 752.8,397.5 751.8,400.3 750.8,392.8 749.8,395.1 748.8,387.8 747.8,406.2 746.8,395.9 745.8,404.3 744.8,398.8 743.8,402.8 742.8,403.3 741.8,406.8 740.8,396.6 739.8,401.7 738.8,399.2 737.8,403.9 736.8,395.8 735.8,400.8 734.8,394.5 733.8,404.6 732.8,404.2 731.8,405.3 730.8,400.5 729.8,402.6 728.8,397.6 727.8,404.4 726.8,401.2 725.8,402.9 724.8,400.3 723.8,405.7 722.8,403.2 721.8,406.7 720.8,399.1 719.8,406.2 718.8,397.2 717.8,402.5 716.8,402.8 715.8,406.2 714.8,398.2 713.8,404.3 712.8,398.9 711.8,403.9 710.8,398.6 709.8,402.8 708.8,397.4 707.8,403.6 706.8,397.9 705.8,406.7 704.8,398.6 703.8,401.0 702.8,402.4 701.8,405.6 700.8,398.2 699.8,402.9 698.8,403.2 697.8,404.1 696.8,400.1 695.8,402.3 694.8,396.5 693.8,402.8 692.8,397.7 691.8,396.1 690.8,397.2 689.8,403.2 688.8,395.7 687.8,403.3 686.8,396.3 685.8,404.4 684.8,399.6 683.8,404.8 682.8,399.9 681.8,404.8 680.8,399.6 679.8,403.7 678.8,396.9 677.8,405.9 676.8,396.0 675.8,403.7 674.8,397.8 673.8,405.3 672.8,397.8 671.8,405.0 670.8,395.9 669.8,403.5 668.8,400.5 667.8,406.0 666.8,396.6 665.8,402.7 664.8,398.1 663.8,404.4 662.8,396.1 661.8,404.5 660.8,398.4 659.8,402.1 658.8,403.6 657.8,404.8 656.8,400.1 655.8,405.7 654.8,392.9 653.8,407.5 652.8,399.5 651.8,402.2 650.8,398.7 649.8,405.3 648.8,396.9 647.8,403.7 646.8,398.7 645.8,405.6 644.8,397.3 643.8,401.4 642.8,399.5 641.8,405.0 640.8,398.3 639.8,400.6 638.8,397.7 637.8,403.8 636.8,390.0 635.8,402.9 634.8,395.3 633.8,407.6 632.8,389.6 631.8,408.7 630.8,390.8 629.8,397.0 628.8,404.5 627.8,403.0 626.8,399.9 625.8,403.4 624.8,402.0 623.8,405.5 622.8,405.5 621.8,406.5 620.8,401.4 619.8,408.7 618.8,399.2 617.8,404.7 616.8,404.0 615.8,402.6 614.8,398.9 613.8,401.3 612.8,383.7 611.8,388.7 610.8,382.6 609.8,389.9 608.8,383.4 607.8,389.2 606.8,383.6 605.8,404.5 604.8,396.8 603.8,403.1 602.8,396.0 601.8,406.4 600.8,400.5 599.8,403.5 598.8,397.9 597.8,411.1 596.8,396.1 595.8,407.4 594.8,400.2 593.8,403.2 592.9,398.1 591.9,408.1 590.9,388.7 589.9,385.2 588.9,378.3 587.9,380.0 586.9,383.3 585.9,388.5 584.9,374.0 583.9,388.8 582.9,374.0 581.9,381.6 580.9,397.1 579.9,406.8 578.9,398.6 577.9,397.9 576.9,389.6 575.9,400.7 574.9,384.1 573.9,393.4 572.9,393.5 571.9,398.1 570.9,391.8 569.9,398.2 568.9,395.0 567.9,394.2 566.9,392.0 565.9,399.5 564.9,400.7 563.9,393.7 562.9,388.3 561.9,385.8 560.9,387.4 559.9,388.0 558.9,382.0 557.9,394.9 556.9,376.1 555.9,390.2 554.9,388.4 553.9,380.3 552.9,396.6 551.9,406.6 550.9,398.4 549.9,405.6 548.9,401.1 547.9,408.3 546.9,398.3 545.9,402.3 544.9,398.3 543.9,401.8 542.9,398.5 541.9,404.3 540.9,402.6 539.9,401.8 538.9,395.6 537.9,400.7 536.9,402.5 535.9,401.1 534.9,403.0 533.9,394.8 532.9,401.7 531.9,399.6 530.9,396.0 529.9,401.6 528.9,397.3 527.9,404.9 526.9,400.9 525.9,409.6 524.9,398.9 523.9,404.0 522.9,396.9 521.9,404.8 520.9,400.0 519.9,403.7 518.9,403.0 517.9,400.7 516.9,400.3 515.9,385.5 514.9,395.2 513.9,399.8 512.9,392.2 511.9,403.4 510.9,400.1 509.9,400.1 508.9,404.3 507.9,404.1 506.9,399.4 505.9,405.7 504.9,400.3 503.9,398.8 502.9,400.0 501.9,408.0 500.9,396.4 499.9,405.9 498.9,395.6 497.9,403.7 496.9,396.7 495.9,399.8 494.9,401.5 493.9,406.3 492.9,396.9 491.9,398.9 490.9,396.4 489.9,403.8 488.9,393.8 487.9,404.0 486.9,391.2 485.9,403.9 484.9,396.4 483.9,404.1 482.9,401.4 481.9,405.8 480.9,394.6 479.9,404.2 478.9,399.7 477.9,402.4 476.9,398.1 475.9,402.4 474.9,398.2 473.9,405.0 472.9,401.2 471.9,405.5 470.9,397.5 469.9,403.8 468.9,391.0 467.9,402.8 466.9,395.2 465.9,403.8 464.9,396.3 463.9,398.0 462.9,399.5 461.9,408.9 460.9,395.7 459.9,409.2 458.9,402.3 457.9,401.2 456.9,400.9 455.9,403.4 454.9,399.9 453.9,404.7 452.9,400.6 451.9,400.8 450.9,400.0 449.9,400.3 448.9,395.8 447.9,404.7 446.9,394.6 445.9,403.8 444.9,401.1 443.9,402.3 442.9,398.9 441.9,404.2 440.9,396.2 439.9,402.7 438.9,400.2 437.9,408.3 436.9,395.5 435.9,404.8 434.9,396.5 433.9,401.3 432.9,399.6 431.9,406.4 430.9,399.2 429.9,401.5 428.9,395.1 427.9,399.1 426.9,401.6 425.9,400.4 424.9,398.0 423.9,404.3 423.0,395.9 422.0,408.5 421.0,401.4 420.0,400.3 419.0,396.6 418.0,408.6 417.0,399.8 416.0,404.8 415.0,395.5 414.0,398.0 413.0,396.7 412.0,401.1 411.0,399.2 410.0,406.7 409.0,397.8 408.0,408.0 407.0,401.6 406.0,407.6 405.0,398.0 404.0,411.5 403.0,397.3 402.0,405.4 401.0,398.5 400.0,402.3 399.0,398.2 398.0,406.2 397.0,400.4 396.0,404.4 395.0,400.6 394.0,403.7 393.0,401.4 392.0,403.7 391.0,395.4 390.0,402.8 389.0,393.7 388.0,404.9 387.0,394.2 386.0,399.9 385.0,397.2 384.0,405.3 383.0,400.6 382.0,401.9 381.0,396.1 380.0,401.7 379.0,398.4 378.0,403.3 377.0,396.3 376.0,402.7 375.0,397.4 374.0,408.7 373.0,404.8 372.0,406.6 371.0,397.8 370.0,404.2 369.0,401.3 368.0,399.9 367.0,397.3 366.0,405.5 365.0,397.6 364.0,409.1 363.0,401.8 362.0,400.5 361.0,400.1 360.0,402.4 359.0,395.5 358.0,402.5 357.0,402.9 356.0,400.0 355.0,399.5 354.0,406.7 353.0,399.9 352.0,405.9 351.0,399.0 350.0,402.1 349.0,399.2 348.0,401.8 347.0,398.1 346.0,406.6 345.0,398.8 344.0,405.9 343.0,399.2 342.0,399.7 341.0,390.0 340.0,403.1 339.0,396.2" fill="#ef843c" fill-opacity="0.4"/><polygon points="339.0,395.4 340.0,402.1 341.0,388.7 342.0,398.9 343.0,398.1 344.0,405.1 345.0,396.1 346.0,394.1 347.0,395.5 348.0,400.8 349.0,398.4 350.0,400.9 351.0,397.8 352.0,405.2 353.0,399.0 354.0,405.9 355.0,398.7 356.0,398.9 357.0,400.4 358.0,388.1 359.0,392.5 360.0,401.6 361.0,399.3 362.0,399.7 363.0,401.1 364.0,406.9 365.0,387.1 366.0,403.2 367.0,396.5 368.0,399.1 369.0,400.5 370.0,403.4 371.0,397.0 372.0,405.6 373.0,403.9 374.0,407.9 375.0,396.6 376.0,401.6 377.0,395.0 378.0,402.0 379.0,397.3 380.0,400.8 381.0,395.1 382.0,400.8 383.0,399.1 384.0,404.3 385.0,396.0 386.0,398.1 387.0,393.4 388.0,403.2 389.0,392.6 390.0,401.5 391.0,394.0 392.0,403.0 393.0,400.2 394.0,402.4 395.0,399.6 396.0,403.5 397.0,399.5 398.0,405.2 399.0,397.1 400.0,400.8 401.0,397.6 402.0,404.6 403.0,396.4 404.0,409.7 405.0,391.0 406.0,405.9 407.0,399.9 408.0,407.2 409.0,396.7 410.0,405.3 411.0,398.4 412.0,400.3 413.0,395.8 414.0,397.1 415.0,394.4 416.0,404.0 417.0,398.6 418.0,406.8 419.0,395.5 420.0,399.1 421.0,400.6 422.0,407.5 423.0,394.9 423.9,403.2 424.9,396.9 425.9,398.9 426.9,400.6 427.9,397.8 428.9,393.6 429.9,399.9 430.9,398.3 431.9,404.9 432.9,398.1 433.9,400.5 434.9,395.6 435.9,404.1 436.9,393.6 437.9,407.0 438.9,398.8 439.9,401.9 440.9,395.4 441.9,403.3 442.9,397.7 443.9,400.0 444.9,400.2 445.9,402.8 446.9,393.5 447.9,403.9 448.9,394.6 449.9,399.2 450.9,398.9 451.9,399.9 452.9,399.5 453.9,402.9 454.9,398.7 455.9,402.1 456.9,399.6 457.9,400.0 458.9,401.5 459.9,407.9 460.9,394.4 461.9,407.7 462.9,398.7 463.9,397.2 464.9,395.1 465.9,402.3 466.9,393.6 467.9,401.9 468.9,389.8 469.9,402.9 470.9,396.4 471.9,403.7 472.9,400.5 473.9,404.2 474.9,397.4 475.9,401.1 476.9,397.2 477.9,401.3 478.9,398.4 479.9,403.2 480.9,393.8 481.9,405.0 482.9,400.6 483.9,402.6 484.9,395.0 485.9,400.1 486.9,368.5 487.9,400.2 488.9,392.2 489.9,403.1 490.9,395.6 491.9,398.1 492.9,395.7 493.9,405.0 494.9,400.5 495.9,399.0 496.9,395.3 497.9,402.9 498.9,394.0 499.9,405.1 500.9,395.6 501.9,407.0 502.9,398.9 503.9,397.8 504.9,399.4 505.9,404.9 506.9,398.4 507.9,402.3 508.9,403.1 509.9,399.3 510.9,399.0 511.9,399.0 512.9,365.1 513.9,394.7 514.9,388.0 515.9,338.6 516.9,393.2 517.9,399.7 518.9,402.0 519.9,402.8 520.9,399.2 521.9,404.0 522.9,395.6 523.9,403.3 524.9,397.6 525.9,408.2 526.9,400.1 527.9,403.8 528.9,396.1 529.9,400.6 530.9,392.1 531.9,378.0 532.9,397.3 533.9,393.3 534.9,402.3 535.9,399.1 536.9,401.4 537.9,399.2 538.9,394.5 539.9,400.8 540.9,401.6 541.9,403.3 542.9,397.1 543.9,400.7 544.9,397.6 545.9,401.1 546.9,397.2 547.9,407.5 548.9,400.3 549.9,404.5 550.9,397.0 551.9,405.7 552.9,390.3 553.9,340.5 554.9,382.0 555.9,387.2 556.9,359.1 557.9,391.5 558.9,381.3 559.9,387.2 560.9,383.3 561.9,365.1 562.9,384.8 563.9,392.8 564.9,399.7 565.9,398.2 566.9,389.7 567.9,381.0 568.9,392.6 569.9,395.4 570.9,380.1 571.9,395.7 572.9,390.5 573.9,381.1 574.9,381.4 575.9,397.9 576.9,378.1 577.9,395.4 578.9,397.1 579.9,405.2 580.9,396.1 581.9,377.7 582.9,354.1 583.9,384.4 584.9,366.1 585.9,385.8 586.9,380.0 587.9,360.1 588.9,374.5 589.9,384.2 590.9,387.7 591.9,407.2 592.9,397.1 593.8,402.4 594.8,399.3 595.8,406.5 596.8,395.2 597.8,409.8 598.8,397.0 599.8,402.7 600.8,399.5 601.8,404.9 602.8,395.3 603.8,402.3 604.8,395.8 605.8,402.6 606.8,377.1 607.8,387.3 608.8,382.6 609.8,388.7 610.8,380.0 611.8,387.2 612.8,382.5 613.8,399.6 614.8,397.9 615.8,401.8 616.8,403.2 617.8,403.9 618.8,398.4 619.8,407.9 620.8,400.3 621.8,405.2 622.8,404.7 623.8,404.5 624.8,400.8 625.8,402.7 626.8,399.0 627.8,402.2 628.8,400.6 629.8,374.0 630.8,386.8 631.8,407.4 632.8,387.9 633.8,406.8 634.8,394.2 635.8,402.0 636.8,389.1 637.8,402.9 638.8,397.0 639.8,399.6 640.8,397.6 641.8,404.1 642.8,398.2 643.8,400.6 644.8,396.5 645.8,404.8 646.8,398.0 647.8,402.7 648.8,395.9 649.8,404.5 650.8,397.5 651.8,401.0 652.8,398.6 653.8,406.2 654.8,392.2 655.8,404.7 656.8,399.3 657.8,403.6 658.8,402.8 659.8,400.7 660.8,397.1 661.8,403.7 662.8,395.2 663.8,403.0 664.8,397.0 665.8,401.9 666.8,395.3 667.8,404.7 668.8,399.8 669.8,402.0 670.8,395.1 671.8,404.1 672.8,396.2 673.8,404.1 674.8,396.7 675.8,402.6 676.8,395.1 677.8,405.1 678.8,396.1 679.8,402.9 680.8,398.5 681.8,404.0 682.8,398.9 683.8,404.0 684.8,398.7 685.8,403.3 686.8,394.8 687.8,402.4 688.8,394.7 689.8,401.2 690.8,396.5 691.8,395.1 692.8,396.2 693.8,401.4 694.8,395.5 695.8,401.0 696.8,398.4 697.8,403.3 698.8,402.5 699.8,401.4 700.8,396.8 701.8,404.4 702.8,400.6 703.8,399.7 704.8,397.8 705.8,405.5 706.8,396.6 707.8,402.9 708.8,396.4 709.8,402.1 710.8,397.4 711.8,402.9 712.8,397.8 713.8,403.2 714.8,397.2 715.8,405.2 716.8,401.8 717.8,401.7 718.8,396.4 719.8,405.2 720.8,398.3 721.8,405.6 722.8,402.1 723.8,404.2 724.8,398.8 725.8,402.0 726.8,399.3 727.8,403.0 728.8,396.8 729.8,401.7 730.8,399.5 731.8,404.3 732.8,403.2 733.8,403.9 734.8,393.7 735.8,398.8 736.8,394.8 737.8,402.3 738.8,398.3 739.8,400.8 740.8,395.6 741.8,405.7 742.8,402.2 743.8,401.7 744.8,398.0 745.8,403.5 746.8,394.9 747.8,405.2 748.8,386.8 749.8,394.3 750.8,391.9 751.8,399.2 752.8,396.8 753.8,402.5 754.8,397.7 755.8,401.6 756.8,396.1 757.8,405.7 758.8,400.5 759.8,405.9 760.8,398.6 761.8,405.3 762.8,398.3 763.7,401.5 764.7,400.2 765.7,404.2 766.7,400.0 767.7,403.4 768.7,395.9 769.7,400.3 770.7,396.7 771.7,399.4 772.7,397.5 773.7,402.6 774.7,393.7 775.7,404.3 776.7,393.6 777.7,401.9 778.7,399.8 779.7,400.1 780.7,397.4 781.7,400.1 782.7,394.1 783.7,406.5 784.7,398.5 785.7,404.5 786.7,396.0 787.7,404.0 788.7,398.4 789.7,403.0 790.7,394.3 791.7,404.2 792.7,397.3 793.7,400.7 794.7,396.3 795.7,402.7 796.7,396.8 797.7,399.4 798.7,397.0 799.7,392.1 800.7,337.1 801.7,399.2 802.7,399.9 803.7,403.6 804.7,398.9 805.7,402.6 806.7,385.3 807.7,405.2 808.7,398.5 809.7,401.5 810.7,398.4 811.7,401.5 812.7,396.6 813.7,400.8 814.7,394.9 815.7,405.6 816.7,398.3 817.7,406.1 818.7,391.0 819.7,401.1 820.7,397.4 821.7,401.7 822.7,399.4 823.7,400.3 824.7,337.0 825.7,393.0 826.7,402.6 827.7,393.2 828.7,392.1 829.7,400.2 830.7,393.5 831.7,404.1 832.7,396.8 833.7,402.1 834.7,394.0 835.7,403.5 836.7,398.3 837.7,402.0 838.7,393.9 839.7,407.8 840.7,396.0 841.7,401.3 842.7,395.4 843.7,408.4 844.7,401.4 845.7,402.9 846.7,393.0 847.7,410.9 848.7,399.7 849.7,407.7 850.7,397.6 851.7,397.7 852.7,397.1 853.7,402.2 854.7,394.6 855.7,413.1 856.7,397.1 857.7,401.0 858.7,400.8 859.7,398.9 860.7,397.0 861.7,406.6 862.7,389.6 863.7,398.7 864.7,393.0 865.7,402.3 866.7,396.2 867.7,400.8 868.7,395.3 869.7,403.1 870.7,396.9 871.7,404.6 872.7,395.0 873.7,408.6 874.7,390.0 875.7,337.0 876.7,391.1 877.7,404.5 878.7,399.5 879.7,402.7 880.7,394.6 881.7,408.8 882.7,399.5 883.7,406.5 884.7,393.2 885.7,395.6 886.7,398.7 887.7,403.8 888.7,395.6 889.7,411.1 890.7,395.7 891.7,402.5 892.7,397.1 893.7,388.0 894.7,394.5 895.7,325.9 896.7,303.5 897.7,311.5 898.7,318.1 899.7,343.6 900.7,320.2 901.7,321.6 902.7,335.6 903.7,327.7 904.7,305.0 905.7,310.2 906.7,319.6 907.7,401.9 908.7,397.1 909.7,385.0 910.7,389.6 911.7,399.5 912.7,397.8 913.7,407.4 914.7,391.7 915.7,403.3 916.7,396.8 917.7,405.1 918.7,396.1 919.7,401.1 920.7,394.4 921.7,398.3 922.7,391.2 923.7,402.8 924.7,384.1 925.7,405.3 926.7,392.9 927.7,403.1 928.7,399.1 929.7,400.3 930.7,396.1 931.7,401.7 932.7,397.6 933.6,403.3 934.6,395.1 935.6,403.9 936.6,393.0 937.6,402.5 938.6,400.8 939.6,406.5 940.6,400.8 941.6,398.2 942.6,396.6 943.6,402.5 944.6,394.4 945.6,401.0 946.6,394.4 947.6,396.0 948.6,396.1 949.6,398.2 950.6,400.1 951.6,398.3 952.6,396.9 953.6,400.2 954.6,397.6 955.6,402.9 956.6,396.7 957.6,406.2 958.6,401.3 959.6,397.4 960.6,390.5 961.6,402.4 962.6,396.7 963.6,405.3 964.6,397.1 965.6,405.8 966.6,401.5 967.6,401.2 968.6,398.6 969.6,398.1 970.6,393.8 971.6,397.5 972.6,396.2 973.6,402.7 974.6,396.5 975.6,401.0 976.6,386.9 977.6,401.4 978.6,395.0 979.6,401.6 980.6,397.4 981.6,403.4 982.6,400.8 983.6,403.5 984.6,399.9 985.6,402.3 986.6,397.4 987.6,401.9 988.6,395.8 989.6,400.2 990.6,398.5 991.6,398.8 992.6,388.1 993.6,398.8 994.6,396.9 995.6,407.9 996.6,393.6 997.6,396.1 998.6,395.4 999.6,401.5 1000.6,397.9 1001.6,401.1 1002.6,399.2 1003.6,403.5 1004.6,388.7 1005.6,405.0 1006.6,395.4 1007.6,406.0 1008.6,395.6 1009.6,400.1 1010.6,395.6 1011.6,401.6 1012.6,399.6 1013.6,407.5 1014.6,398.4 1015.6,403.2 1016.6,401.9 1017.6,412.0 1017.6,412.5 1016.6,402.3 1015.6,403.6 1014.6,398.8 1013.6,407.9 1012.6,400.0 1011.6,402.1 1010.6,396.1 1009.6,400.8 1008.6,396.2 1007.6,406.7 1006.6,396.2 1005.6,405.4 1004.6,389.3 1003.6,404.0 1002.6,399.8 1001.6,401.7 1000.6,398.4 999.6,402.1 998.6,396.0 997.6,396.6 996.6,394.3 995.6,408.3 994.6,397.4 993.6,399.6 992.6,390.6 991.6,399.5 990.6,399.0 989.6,400.9 988.6,396.4 987.6,403.0 986.6,398.0 985.6,403.2 984.6,400.5 983.6,404.0 982.6,401.3 981.6,403.9 980.6,398.2 979.6,402.6 978.6,395.5 977.6,402.5 976.6,392.2 975.6,402.0 974.6,397.1 973.6,403.3 972.6,396.9 971.6,398.0 970.6,394.6 969.6,398.7 968.6,399.2 967.6,401.9 966.6,402.0 965.6,406.3 964.6,397.5 963.6,406.0 962.6,397.1 961.6,403.0 960.6,391.2 959.6,398.0 958.6,401.9 957.6,406.6 956.6,397.1 955.6,403.3 954.6,398.1 953.6,400.7 952.6,397.6 951.6,398.8 950.6,400.7 949.6,398.7 948.6,396.8 947.6,396.7 946.6,395.0 945.6,401.3 944.6,394.9 943.6,403.2 942.6,397.2 941.6,398.8 940.6,401.4 939.6,407.1 938.6,401.5 937.6,403.2 936.6,393.7 935.6,404.3 934.6,395.6 933.6,403.9 932.7,398.0 931.7,402.3 930.7,396.6 929.7,400.8 928.7,399.6 927.7,403.7 926.7,393.4 925.7,406.3 924.7,389.6 923.7,404.1 922.7,391.7 921.7,398.8 920.7,395.0 919.7,401.7 918.7,396.5 917.7,405.7 916.7,397.4 915.7,404.0 914.7,392.3 913.7,407.8 912.7,398.3 911.7,400.0 910.7,391.2 909.7,392.4 908.7,398.6 907.7,402.4 906.7,322.1 905.7,315.0 904.7,311.8 903.7,331.0 902.7,338.1 901.7,325.0 900.7,324.3 899.7,346.5 898.7,320.7 897.7,314.8 896.7,310.9 895.7,328.7 894.7,395.8 893.7,394.4 892.7,398.7 891.7,403.0 890.7,396.2 889.7,411.6 888.7,396.1 887.7,404.3 886.7,399.3 885.7,396.2 884.7,393.7 883.7,407.3 882.7,400.0 881.7,409.5 880.7,395.0 879.7,403.1 878.7,400.0 877.7,405.1 876.7,395.0 875.7,363.6 874.7,394.1 873.7,409.1 872.7,395.5 871.7,405.0 870.7,397.4 869.7,403.7 868.7,395.9 867.7,401.3 866.7,396.7 865.7,403.2 864.7,394.1 863.7,399.2 862.7,390.1 861.7,407.0 860.7,397.5 859.7,399.3 858.7,401.5 857.7,401.6 856.7,397.5 855.7,413.6 854.7,395.3 853.7,402.6 852.7,397.7 851.7,398.3 850.7,398.1 849.7,408.2 848.7,400.6 847.7,411.3 846.7,393.8 845.7,403.6 844.7,401.9 843.7,408.8 842.7,396.1 841.7,402.0 840.7,396.7 839.7,408.2 838.7,394.5 837.7,402.4 836.7,399.2 835.7,404.1 834.7,394.4 833.7,402.6 832.7,397.5 831.7,404.6 830.7,394.0 829.7,400.9 828.7,392.7 827.7,393.7 826.7,403.5 825.7,397.2 824.7,362.8 823.7,404.1 822.7,400.0 821.7,402.7 820.7,398.0 819.7,401.5 818.7,391.7 817.7,406.6 816.7,398.9 815.7,406.2 814.7,395.8 813.7,401.3 812.7,397.0 811.7,402.1 810.7,399.0 809.7,402.5 808.7,399.5 807.7,406.5 806.7,391.4 805.7,404.0 804.7,399.6 803.7,404.5 802.7,400.5 801.7,403.3 800.7,365.1 799.7,396.2 798.7,397.4 797.7,400.1 796.7,397.3 795.7,403.2 794.7,396.9 793.7,401.1 792.7,397.8 791.7,404.8 790.7,394.9 789.7,403.4 788.7,399.0 787.7,404.5 786.7,397.0 785.7,405.2 784.7,399.2 783.7,406.9 782.7,394.8 781.7,401.0 780.7,397.9 779.7,400.6 778.7,400.4 777.7,402.4 776.7,394.2 775.7,404.8 774.7,394.5 773.7,403.1 772.7,397.9 771.7,399.9 770.7,397.1 769.7,400.8 768.7,396.3 767.7,403.8 766.7,400.5 765.7,404.8 764.7,400.7 763.7,402.2 762.8,398.9 761.8,405.8 760.8,399.0 759.8,406.3 758.8,401.1 757.8,406.3 756.8,396.9 755.8,402.7 754.8,398.2 753.8,403.1 752.8,397.2 751.8,399.8 750.8,392.4 749.8,394.7 748.8,387.4 747.8,405.7 746.8,395.4 745.8,403.9 744.8,398.4 743.8,402.3 742.8,402.8 741.8,406.3 740.8,396.1 739.8,401.3 738.8,398.8 737.8,403.2 736.8,395.4 735.8,399.9 734.8,394.1 733.8,404.3 732.8,403.7 731.8,404.9 730.8,400.0 729.8,402.2 728.8,397.2 727.8,403.8 726.8,400.3 725.8,402.5 724.8,399.6 723.8,405.0 722.8,402.7 721.8,406.2 720.8,398.8 719.8,405.7 718.8,396.9 717.8,402.1 716.8,402.3 715.8,405.8 714.8,397.8 713.8,403.9 712.8,398.4 711.8,403.4 710.8,398.1 709.8,402.5 708.8,396.9 707.8,403.3 706.8,397.3 705.8,406.2 704.8,398.3 703.8,400.4 702.8,401.6 701.8,405.0 700.8,397.6 699.8,402.2 698.8,402.9 697.8,403.7 696.8,399.3 695.8,401.7 694.8,396.1 693.8,402.2 692.8,397.1 691.8,395.7 690.8,396.9 689.8,402.3 688.8,395.2 687.8,402.9 686.8,395.6 685.8,403.9 684.8,399.2 683.8,404.4 682.8,399.4 681.8,404.4 680.8,399.1 679.8,403.3 678.8,396.5 677.8,405.6 676.8,395.6 675.8,403.2 674.8,397.3 673.8,404.8 672.8,397.1 671.8,404.6 670.8,395.5 669.8,402.8 668.8,400.2 667.8,405.4 666.8,396.0 665.8,402.3 664.8,397.6 663.8,403.8 662.8,395.7 661.8,404.1 660.8,397.8 659.8,401.5 658.8,403.2 657.8,404.2 656.8,399.7 655.8,405.2 654.8,392.6 653.8,406.9 652.8,399.1 651.8,401.7 650.8,398.2 649.8,405.0 648.8,396.5 647.8,403.3 646.8,398.4 645.8,405.2 644.8,397.0 643.8,401.0 642.8,398.9 641.8,404.6 640.8,398.0 639.8,400.1 638.8,397.4 637.8,403.4 636.8,389.6 635.8,402.5 634.8,394.8 633.8,407.2 632.8,388.8 631.8,408.1 630.8,389.0 629.8,386.7 628.8,402.8 627.8,402.6 626.8,399.5 625.8,403.1 624.8,401.5 623.8,405.0 622.8,405.1 621.8,405.9 620.8,400.9 619.8,408.3 618.8,398.9 617.8,404.3 616.8,403.6 615.8,402.2 614.8,398.5 613.8,400.6 612.8,383.1 611.8,388.0 610.8,381.5 609.8,389.4 608.8,383.0 607.8,388.4 606.8,380.7 605.8,403.6 604.8,396.4 603.8,402.7 602.8,395.7 601.8,405.7 600.8,400.1 599.8,403.1 598.8,397.5 597.8,410.5 596.8,395.7 595.8,407.0 594.8,399.8 593.8,402.9 592.9,397.6 591.9,407.7 590.9,388.3 589.9,384.7 588.9,376.6 587.9,371.1 586.9,381.8 585.9,387.3 584.9,370.5 583.9,386.8 582.9,365.1 581.9,379.8 580.9,396.7 579.9,406.1 578.9,397.9 577.9,396.8 576.9,384.4 575.9,399.4 574.9,382.9 573.9,387.8 572.9,392.1 571.9,397.0 570.9,386.5 569.9,397.0 568.9,393.9 567.9,388.3 566.9,391.0 565.9,398.9 564.9,400.3 563.9,393.3 562.9,386.7 561.9,376.5 560.9,385.5 559.9,387.7 558.9,381.7 557.9,393.4 556.9,368.5 555.9,388.9 554.9,385.5 553.9,362.4 552.9,393.8 551.9,406.2 550.9,397.8 549.9,405.1 548.9,400.8 547.9,408.0 546.9,397.8 545.9,401.8 544.9,398.0 543.9,401.3 542.9,397.9 541.9,403.9 540.9,402.1 539.9,401.4 538.9,395.1 537.9,400.0 536.9,402.0 535.9,400.2 534.9,402.7 533.9,394.1 532.9,399.7 531.9,389.9 530.9,394.3 529.9,401.2 528.9,396.8 527.9,404.4 526.9,400.5 525.9,408.9 524.9,398.3 523.9,403.7 522.9,396.3 521.9,404.4 520.9,399.6 519.9,403.3 518.9,402.5 517.9,400.3 516.9,397.1 515.9,364.4 514.9,392.0 513.9,397.5 512.9,380.0 511.9,401.4 510.9,399.6 509.9,399.8 508.9,403.8 507.9,403.3 506.9,399.0 505.9,405.3 504.9,399.9 503.9,398.3 502.9,399.5 501.9,407.6 500.9,396.0 499.9,405.6 498.9,394.9 497.9,403.4 496.9,396.1 495.9,399.4 494.9,401.1 493.9,405.7 492.9,396.4 491.9,398.5 490.9,396.0 489.9,403.5 488.9,393.1 487.9,402.3 486.9,381.0 485.9,402.2 484.9,395.8 483.9,403.4 482.9,401.1 481.9,405.4 480.9,394.2 479.9,403.8 478.9,399.1 477.9,401.9 476.9,397.7 475.9,401.8 474.9,397.8 473.9,404.7 472.9,400.9 471.9,404.7 470.9,397.0 469.9,403.4 468.9,390.5 467.9,402.4 466.9,394.5 465.9,403.1 464.9,395.8 463.9,397.7 462.9,399.1 461.9,408.3 460.9,395.2 459.9,408.6 458.9,401.9 457.9,400.6 456.9,400.3 455.9,402.8 454.9,399.4 453.9,403.9 452.9,400.1 451.9,400.4 450.9,399.5 449.9,399.8 448.9,395.3 447.9,404.4 446.9,394.1 445.9,403.4 444.9,400.7 443.9,401.3 442.9,398.3 441.9,403.8 440.9,395.8 439.9,402.3 438.9,399.6 437.9,407.7 436.9,394.6 435.9,404.5 434.9,396.1 433.9,401.0 432.9,398.9 431.9,405.7 430.9,398.8 429.9,400.8 428.9,394.4 427.9,398.5 426.9,401.1 425.9,399.7 424.9,397.5 423.9,403.8 423.0,395.4 422.0,408.1 421.0,401.0 420.0,399.8 419.0,396.1 418.0,407.8 417.0,399.2 416.0,404.4 415.0,395.0 414.0,397.6 413.0,396.3 412.0,400.7 411.0,398.8 410.0,406.1 409.0,397.3 408.0,407.6 407.0,400.9 406.0,406.8 405.0,394.8 404.0,410.7 403.0,396.9 402.0,405.1 401.0,398.1 400.0,401.6 399.0,397.7 398.0,405.7 397.0,400.0 396.0,404.0 395.0,400.2 394.0,403.1 393.0,400.9 392.0,403.4 391.0,394.8 390.0,402.2 389.0,393.2 388.0,404.2 387.0,393.8 386.0,399.1 385.0,396.7 384.0,404.9 383.0,399.9 382.0,401.4 381.0,395.7 380.0,401.3 379.0,397.9 378.0,402.7 377.0,395.7 376.0,402.2 375.0,397.0 374.0,408.3 373.0,404.4 372.0,406.2 371.0,397.5 370.0,403.8 369.0,400.9 368.0,399.5 367.0,396.9 366.0,404.5 365.0,392.9 364.0,408.1 363.0,401.5 362.0,400.1 361.0,399.8 360.0,402.0 359.0,394.1 358.0,396.0 357.0,401.8 356.0,399.5 355.0,399.1 354.0,406.3 353.0,399.5 352.0,405.6 351.0,398.5 350.0,401.6 349.0,398.9 348.0,401.3 347.0,397.0 346.0,401.0 345.0,397.6 344.0,405.6 343.0,398.7 342.0,399.4 341.0,389.4 340.0,402.7 339.0,395.9" fill="#6d1f62" fill-opacity="0.4"/><polygon points="339.0,276.4 340.0,276.4 341.0,276.4 342.0,276.4 343.0,276.4 344.0,276.4 345.0,276.4 346.0,276.4 347.0,276.4 348.0,276.4 349.0,276.4 350.0,276.4 351.0,276.4 352.0,276.4 353.0,276.4 354.0,276.4 355.0,276.4 356.0,276.4 357.0,276.4 358.0,276.4 359.0,276.4 360.0,276.4 361.0,276.4 362.0,276.4 363.0,276.4 364.0,276.4 365.0,276.4 366.0,276.4 367.0,276.4 368.0,276.4 369.0,276.4 370.0,276.4 371.0,276.4 372.0,276.4 373.0,276.4 374.0,276.4 375.0,276.4 376.0,276.4 377.0,276.4 378.0,276.4 379.0,276.4 380.0,276.4 381.0,276.4 382.0,276.4 383.0,276.4 384.0,276.4 385.0,276.4 386.0,276.4 387.0,276.4 388.0,276.4 389.0,276.4 390.0,276.4 391.0,276.4 392.0,276.4 393.0,276.4 394.0,276.4 395.0,276.4 396.0,276.4 397.0,276.4 398.0,276.4 399.0,276.4 400.0,276.4 401.0,276.4 402.0,276.4 403.0,276.4 404.0,276.4 405.0,276.4 406.0,276.4 407.0,276.4 408.0,276.4 409.0,276.4 410.0,276.4 411.0,276.4 412.0,276.4 413.0,276.4 414.0,276.4 415.0,276.4 416.0,276.4 417.0,276.4 418.0,276.4 419.0,276.4 420.0,276.4 421.0,276.4 422.0,276.4 423.0,276.4 423.9,276.4 424.9,276.4 425.9,276.4 426.9,276.4 427.9,276.4 428.9,276.4 429.9,276.4 430.9,276.4 431.9,276.4 432.9,276.4 433.9,276.4 434.9,276.4 435.9,276.4 436.9,276.4 437.9,276.4 438.9,276.4 439.9,276.4 440.9,276.4 441.9,276.4 442.9,276.4 443.9,276.4 444.9,276.4 445.9,276.4 446.9,276.4 447.9,276.4 448.9,276.4 449.9,276.4 450.9,276.4 451.9,276.4 452.9,276.4 453.9,276.4 454.9,276.4 455.9,276.4 456.9,276.4 457.9,276.4 458.9,276.4 459.9,276.4 460.9,276.4 461.9,276.4 462.9,276.4 463.9,276.4 464.9,276.4 465.9,276.4 466.9,276.4 467.9,276.4 468.9,276.4 469.9,276.4 470.9,276.4 471.9,276.4 472.9,276.4 473.9,276.4 474.9,276.4 475.9,276.4 476.9,276.4 477.9,276.4 478.9,276.4 479.9,276.4 480.9,276.4 481.9,276.4 482.9,276.4 483.9,276.4 484.9,276.4 485.9,276.4 486.9,276.4 487.9,276.4 488.9,276.4 489.9,276.4 490.9,276.4 491.9,276.4 492.9,276.4 493.9,276.4 494.9,276.4 495.9,276.4 496.9,276.4 497.9,276.4 498.9,276.4 499.9,276.4 500.9,276.4 501.9,276.4 502.9,276.4 503.9,276.4 504.9,276.4 505.9,276.4 506.9,276.4 507.9,276.4 508.9,276.4 509.9,276.4 510.9,276.4 511.9,276.4 512.9,276.4 513.9,276.4 514.9,276.4 515.9,276.4 516.9,276.4 517.9,276.4 518.9,276.4 519.9,276.4 520.9,276.4 521.9,276.4 522.9,276.4 523.9,276.4 524.9,276.4 525.9,276.4 526.9,276.4 527.9,276.4 528.9,276.4 529.9,276.4 530.9,276.4 531.9,276.4 532.9,276.4 533.9,276.4 534.9,276.4 535.9,276.4 536.9,276.4 537.9,276.4 538.9,276.4 539.9,276.4 540.9,276.4 541.9,276.4 542.9,276.4 543.9,276.4 544.9,276.4 545.9,276.4 546.9,276.4 547.9,276.4 548.9,276.4 549.9,276.4 550.9,276.4 551.9,276.4 552.9,276.4 553.9,276.4 554.9,276.4 555.9,276.4 556.9,276.4 557.9,276.4 558.9,276.4 559.9,276.4 560.9,276.4 561.9,276.4 562.9,276.4 563.9,276.4 564.9,276.4 565.9,276.4 566.9,276.4 567.9,276.4 568.9,276.4 569.9,276.4 570.9,276.4 571.9,276.4 572.9,276.4 573.9,276.4 574.9,276.4 575.9,276.4 576.9,276.4 577.9,276.4 578.9,276.4 579.9,276.4 580.9,276.4 581.9,276.4 582.9,276.4 583.9,276.4 584.9,276.4 585.9,276.4 586.9,276.4 587.9,276.4 588.9,276.4 589.9,276.4 590.9,276.4 591.9,276.4 592.9,276.4 593.8,276.4 594.8,276.4 595.8,276.4 596.8,276.4 597.8,276.4 598.8,276.4 599.8,276.4 600.8,276.4 601.8,276.4 602.8,276.4 603.8,276.4 604.8,276.4 605.8,276.4 606.8,276.4 607.8,276.4 608.8,276.4 609.8,276.4 610.8,276.4 611.8,276.4 612.8,276.4 613.8,276.4 614.8,276.4 615.8,276.4 616.8,276.4 617.8,276.4 618.8,276.4 619.8,276.4 620.8,276.4 621.8,276.4 622.8,276.4 623.8,276.4 624.8,276.4 625.8,276.4 626.8,276.4 627.8,276.4 628.8,276.4 629.8,276.4 630.8,276.4 631.8,276.4 632.8,276.4 633.8,276.4 634.8,276.4 635.8,276.4 636.8,276.4 637.8,276.4 638.8,276.4 639.8,276.4 640.8,276.4 641.8,276.4 642.8,276.4 643.8,276.4 644.8,276.4 645.8,276.4 646.8,276.4 647.8,276.4 648.8,276.4 649.8,276.4 650.8,276.4 651.8,276.4 652.8,276.4 653.8,276.4 654.8,276.4 655.8,276.4 656.8,276.4 657.8,276.4 658.8,276.4 659.8,276.4 660.8,276.4 661.8,276.4 662.8,276.4 663.8,276.4 664.8,276.4 665.8,276.4 666.8,276.4 667.8,276.4 668.8,276.4 669.8,276.4 670.8,276.4 671.8,276.4 672.8,276.4 673.8,276.4 674.8,276.4 675.8,276.4 676.8,276.4 677.8,276.4 678.8,276.4 679.8,276.4 680.8,276.4 681.8,276.4 682.8,276.4 683.8,276.4 684.8,276.4 685.8,276.4 686.8,276.4 687.8,276.4 688.8,276.4 689.8,276.4 690.8,276.4 691.8,276.4 692.8,276.4 693.8,276.4 694.8,276.4 695.8,276.4 696.8,276.4 697.8,276.4 698.8,276.4 699.8,276.4 700.8,276.4 701.8,276.4 702.8,276.4 703.8,276.4 704.8,276.4 705.8,276.4 706.8,276.4 707.8,276.4 708.8,276.4 709.8,276.4 710.8,276.4 711.8,276.4 712.8,276.4 713.8,276.4 714.8,276.4 715.8,276.4 716.8,276.4 717.8,276.4 718.8,276.4 719.8,276.4 720.8,276.4 721.8,276.4 722.8,276.4 723.8,276.4 724.8,276.4 725.8,276.4 726.8,276.4 727.8,276.4 728.8,276.4 729.8,276.4 730.8,276.4 731.8,276.4 732.8,276.4 733.8,276.4 734.8,276.4 735.8,276.4 736.8,276.4 737.8,276.4 738.8,276.4 739.8,276.4 740.8,276.4 741.8,276.4 742.8,276.4 743.8,276.4 744.8,276.4 745.8,276.4 746.8,276.4 747.8,276.4 748.8,276.4 749.8,276.4 750.8,276.4 751.8,276.4 752.8,276.4 753.8,276.4 754.8,276.4 755.8,276.4 756.8,276.4 757.8,276.4 758.8,276.4 759.8,276.4 760.8,276.4 761.8,276.4 762.8,276.4 763.7,276.4 764.7,276.4 765.7,276.4 766.7,276.4 767.7,276.4 768.7,276.4 769.7,276.4 770.7,276.4 771.7,276.4 772.7,276.4 773.7,276.4 774.7,276.4 775.7,276.4 776.7,276.4 777.7,276.4 778.7,276.4 779.7,276.4 780.7,276.4 781.7,276.4 782.7,276.4 783.7,276.4 784.7,276.4 785.7,276.4 786.7,276.4 787.7,276.4 788.7,276.4 789.7,276.4 790.7,276.4 791.7,276.4 792.7,276.4 793.7,276.4 794.7,276.4 795.7,276.4 796.7,276.4 797.7,276.4 798.7,276.4 799.7,276.4 800.7,276.4 801.7,276.4 802.7,276.4 803.7,276.4 804.7,276.4 805.7,276.4 806.7,276.4 807.7,276.4 808.7,276.4 809.7,276.4 810.7,276.4 811.7,276.4 812.7,276.4 813.7,276.4 814.7,276.4 815.7,276.4 816.7,276.4 817.7,276.4 818.7,276.4 819.7,276.4 820.7,276.4 821.7,276.4 822.7,276.4 823.7,276.4 824.7,276.4 825.7,276.4 826.7,276.4 827.7,276.4 828.7,276.4 829.7,276.4 830.7,276.4 831.7,276.4 832.7,276.4 833.7,276.4 834.7,276.4 835.7,276.4 836.7,276.4 837.7,276.4 838.7,276.4 839.7,276.4 840.7,276.4 841.7,276.4 842.7,276.4 843.7,276.4 844.7,276.4 845.7,276.4 846.7,276.4 847.7,276.4 848.7,276.4 849.7,276.4 850.7,276.4 851.7,276.4 852.7,276.4 853.7,276.4 854.7,276.4 855.7,276.4 856.7,276.4 857.7,276.4 858.7,276.4 859.7,276.4 860.7,276.4 861.7,276.4 862.7,276.4 863.7,276.4 864.7,276.4 865.7,276.4 866.7,276.4 867.7,276.4 868.7,276.4 869.7,276.4 870.7,276.4 871.7,276.4 872.7,276.4 873.7,276.4 874.7,276.4 875.7,276.4 876.7,276.4 877.7,276.4 878.7,276.4 879.7,276.4 880.7,276.4 881.7,276.4 882.7,276.4 883.7,276.4 884.7,276.4 885.7,276.4 886.7,276.4 887.7,276.4 888.7,276.4 889.7,276.4 890.7,276.4 891.7,276.4 892.7,276.4 893.7,276.4 894.7,276.4 895.7,276.4 896.7,276.4 897.7,276.4 898.7,276.4 899.7,276.4 900.7,276.4 901.7,276.4 902.7,276.4 903.7,276.4 904.7,276.4 905.7,276.4 906.7,276.4 907.7,276.4 908.7,276.4 909.7,276.4 910.7,276.4 911.7,276.4 912.7,276.4 913.7,276.4 914.7,276.4 915.7,276.4 916.7,276.4 917.7,276.4 918.7,276.4 919.7,276.4 920.7,276.4 921.7,276.4 922.7,276.4 923.7,276.4 924.7,276.4 925.7,276.4 926.7,276.4 927.7,276.4 928.7,276.4 929.7,276.4 930.7,276.4 931.7,276.4 932.7,276.4 933.6,276.4 934.6,276.4 935.6,276.4 936.6,276.4 937.6,276.4 938.6,276.4 939.6,276.4 940.6,276.4 941.6,276.4 942.6,276.4 943.6,276.4 944.6,276.4 945.6,276.4 946.6,276.4 947.6,276.4 948.6,276.4 949.6,276.4 950.6,276.4 951.6,276.4 952.6,276.4 953.6,276.4 954.6,276.4 955.6,276.4 956.6,276.4 957.6,276.4 958.6,276.4 959.6,276.4 960.6,276.4 961.6,276.4 962.6,276.4 963.6,276.4 964.6,276.4 965.6,276.4 966.6,276.4 967.6,276.4 968.6,276.4 969.6,276.4 970.6,276.4 971.6,276.4 972.6,276.4 973.6,276.4 974.6,276.4 975.6,276.4 976.6,276.4 977.6,276.4 978.6,276.4 979.6,276.4 980.6,276.4 981.6,276.4 982.6,276.4 983.6,276.4 984.6,276.4 985.6,276.4 986.6,276.4 987.6,276.4 988.6,276.4 989.6,276.4 990.6,276.4 991.6,276.4 992.6,276.4 993.6,276.4 994.6,276.4 995.6,276.4 996.6,276.4 997.6,276.4 998.6,276.4 999.6,276.4 1000.6,276.4 1001.6,276.4 1002.6,276.4 1003.6,276.4 1004.6,276.4 1005.6,276.4 1006.6,276.4 1007.6,276.4 1008.6,276.4 1009.6,276.4 1010.6,276.4 1011.6,276.4 1012.6,276.4 1013.6,276.4 1014.6,276.4 1015.6,276.4 1016.6,276.4 1017.6,276.4 1017.6,412.0 1016.6,401.9 1015.6,403.2 1014.6,398.4 1013.6,407.5 1012.6,399.6 1011.6,401.6 1010.6,395.6 1009.6,400.1 1008.6,395.6 1007.6,406.0 1006.6,395.4 1005.6,405.0 1004.6,388.7 1003.6,403.5 1002.6,399.2 1001.6,401.1 1000.6,397.9 999.6,401.5 998.6,395.4 997.6,396.1 996.6,393.6 995.6,407.9 994.6,396.9 993.6,398.8 992.6,388.1 991.6,398.8 990.6,398.5 989.6,400.2 988.6,395.8 987.6,401.9 986.6,397.4 985.6,402.3 984.6,399.9 983.6,403.5 982.6,400.8 981.6,403.4 980.6,397.4 979.6,401.6 978.6,395.0 977.6,401.4 976.6,386.9 975.6,401.0 974.6,396.5 973.6,402.7 972.6,396.2 971.6,397.5 970.6,393.8 969.6,398.1 968.6,398.6 967.6,401.2 966.6,401.5 965.6,405.8 964.6,397.1 963.6,405.3 962.6,396.7 961.6,402.4 960.6,390.5 959.6,397.4 958.6,401.3 957.6,406.2 956.6,396.7 955.6,402.9 954.6,397.6 953.6,400.2 952.6,396.9 951.6,398.3 950.6,400.1 949.6,398.2 948.6,396.1 947.6,396.0 946.6,394.4 945.6,401.0 944.6,394.4 943.6,402.5 942.6,396.6 941.6,398.2 940.6,400.8 939.6,406.5 938.6,400.8 937.6,402.5 936.6,393.0 935.6,403.9 934.6,395.1 933.6,403.3 932.7,397.6 931.7,401.7 930.7,396.1 929.7,400.3 928.7,399.1 927.7,403.1 926.7,392.9 925.7,405.3 924.7,384.1 923.7,402.8 922.7,391.2 921.7,398.3 920.7,394.4 919.7,401.1 918.7,396.1 917.7,405.1 916.7,396.8 915.7,403.3 914.7,391.7 913.7,407.4 912.7,397.8 911.7,399.5 910.7,389.6 909.7,385.0 908.7,397.1 907.7,401.9 906.7,319.6 905.7,310.2 904.7,305.0 903.7,327.7 902.7,335.6 901.7,321.6 900.7,320.2 899.7,343.6 898.7,318.1 897.7,311.5 896.7,303.5 895.7,325.9 894.7,394.5 893.7,388.0 892.7,397.1 891.7,402.5 890.7,395.7 889.7,411.1 888.7,395.6 887.7,403.8 886.7,398.7 885.7,395.6 884.7,393.2 883.7,406.5 882.7,399.5 881.7,408.8 880.7,394.6 879.7,402.7 878.7,399.5 877.7,404.5 876.7,391.1 875.7,337.0 874.7,390.0 873.7,408.6 872.7,395.0 871.7,404.6 870.7,396.9 869.7,403.1 868.7,395.3 867.7,400.8 866.7,396.2 865.7,402.3 864.7,393.0 863.7,398.7 862.7,389.6 861.7,406.6 860.7,397.0 859.7,398.9 858.7,400.8 857.7,401.0 856.7,397.1 855.7,413.1 854.7,394.6 853.7,402.2 852.7,397.1 851.7,397.7 850.7,397.6 849.7,407.7 848.7,399.7 847.7,410.9 846.7,393.0 845.7,402.9 844.7,401.4 843.7,408.4 842.7,395.4 841.7,401.3 840.7,396.0 839.7,407.8 838.7,393.9 837.7,402.0 836.7,398.3 835.7,403.5 834.7,394.0 833.7,402.1 832.7,396.8 831.7,404.1 830.7,393.5 829.7,400.2 828.7,392.1 827.7,393.2 826.7,402.6 825.7,393.0 824.7,337.0 823.7,400.3 822.7,399.4 821.7,401.7 820.7,397.4 819.7,401.1 818.7,391.0 817.7,406.1 816.7,398.3 815.7,405.6 814.7,394.9 813.7,400.8 812.7,396.6 811.7,401.5 810.7,398.4 809.7,401.5 808.7,398.5 807.7,405.2 806.7,385.3 805.7,402.6 804.7,398.9 803.7,403.6 802.7,399.9 801.7,399.2 800.7,337.1 799.7,392.1 798.7,397.0 797.7,399.4 796.7,396.8 795.7,402.7 794.7,396.3 793.7,400.7 792.7,397.3 791.7,404.2 790.7,394.3 789.7,403.0 788.7,398.4 787.7,404.0 786.7,396.0 785.7,404.5 784.7,398.5 783.7,406.5 782.7,394.1 781.7,400.1 780.7,397.4 779.7,400.1 778.7,399.8 777.7,401.9 776.7,393.6 775.7,404.3 774.7,393.7 773.7,402.6 772.7,397.5 771.7,399.4 770.7,396.7 769.7,400.3 768.7,395.9 767.7,403.4 766.7,400.0 765.7,404.2 764.7,400.2 763.7,401.5 762.8,398.3 761.8,405.3 760.8,398.6 759.8,405.9 758.8,400.5 757.8,405.7 756.8,396.1 755.8,401.6 754.8,397.7 753.8,402.5 752.8,396.8 751.8,399.2 750.8,391.9 749.8,394.3 748.8,386.8 747.8,405.2 746.8,394.9 745.8,403.5 744.8,398.0 743.8,401.7 742.8,402.2 741.8,405.7 740.8,395.6 739.8,400.8 738.8,398.3 737.8,402.3 736.8,394.8 735.8,398.8 734.8,393.7 733.8,403.9 732.8,403.2 731.8,404.3 730.8,399.5 729.8,401.7 728.8,396.8 727.8,403.0 726.8,399.3 725.8,402.0 724.8,398.8 723.8,404.2 722.8,402.1 721.8,405.6 720.8,398.3 719.8,405.2 718.8,396.4 717.8,401.7 716.8,401.8 715.8,405.2 714.8,397.2 713.8,403.2 712.8,397.8 711.8,402.9 710.8,397.4 709.8,402.1 708.8,396.4 707.8,402.9 706.8,396.6 705.8,405.5 704.8,397.8 703.8,399.7 702.8,400.6 701.8,404.4 700.8,396.8 699.8,401.4 698.8,402.5 697.8,403.3 696.8,398.4 695.8,401.0 694.8,395.5 693.8,401.4 692.8,396.2 691.8,395.1 690.8,396.5 689.8,401.2 688.8,394.7 687.8,402.4 686.8,394.8 685.8,403.3 684.8,398.7 683.8,404.0 682.8,398.9 681.8,404.0 680.8,398.5 679.8,402.9 678.8,396.1 677.8,405.1 676.8,395.1 675.8,402.6 674.8,396.7 673.8,404.1 672.8,396.2 671.8,404.1 670.8,395.1 669.8,402.0 668.8,399.8 667.8,404.7 666.8,395.3 665.8,401.9 664.8,397.0 663.8,403.0 662.8,395.2 661.8,403.7 660.8,397.1 659.8,400.7 658.8,402.8 657.8,403.6 656.8,399.3 655.8,404.7 654.8,392.2 653.8,406.2 652.8,398.6 651.8,401.0 650.8,397.5 649.8,404.5 648.8,395.9 647.8,402.7 646.8,398.0 645.8,404.8 644.8,396.5 643.8,400.6 642.8,398.2 641.8,404.1 640.8,397.6 639.8,399.6 638.8,397.0 637.8,402.9 636.8,389.1 635.8,402.0 634.8,394.2 633.8,406.8 632.8,387.9 631.8,407.4 630.8,386.8 629.8,374.0 628.8,400.6 627.8,402.2 626.8,399.0 625.8,402.7 624.8,400.8 623.8,404.5 622.8,404.7 621.8,405.2 620.8,400.3 619.8,407.9 618.8,398.4 617.8,403.9 616.8,403.2 615.8,401.8 614.8,397.9 613.8,399.6 612.8,382.5 611.8,387.2 610.8,380.0 609.8,388.7 608.8,382.6 607.8,387.3 606.8,377.1 605.8,402.6 604.8,395.8 603.8,402.3 602.8,395.3 601.8,404.9 600.8,399.5 599.8,402.7 598.8,397.0 597.8,409.8 596.8,395.2 595.8,406.5 594.8,399.3 593.8,402.4 592.9,397.1 591.9,407.2 590.9,387.7 589.9,384.2 588.9,374.5 587.9,360.1 586.9,380.0 585.9,385.8 584.9,366.1 583.9,384.4 582.9,354.1 581.9,377.7 580.9,396.1 579.9,405.2 578.9,397.1 577.9,395.4 576.9,378.1 575.9,397.9 574.9,381.4 573.9,381.1 572.9,390.5 571.9,395.7 570.9,380.1 569.9,395.4 568.9,392.6 567.9,381.0 566.9,389.7 565.9,398.2 564.9,399.7 563.9,392.8 562.9,384.8 561.9,365.1 560.9,383.3 559.9,387.2 558.9,381.3 557.9,391.5 556.9,359.1 555.9,387.2 554.9,382.0 553.9,340.5 552.9,390.3 551.9,405.7 550.9,397.0 549.9,404.5 548.9,400.3 547.9,407.5 546.9,397.2 545.9,401.1 544.9,397.6 543.9,400.7 542.9,397.1 541.9,403.3 540.9,401.6 539.9,400.8 538.9,394.5 537.9,399.2 536.9,401.4 535.9,399.1 534.9,402.3 533.9,393.3 532.9,397.3 531.9,378.0 530.9,392.1 529.9,400.6 528.9,396.1 527.9,403.8 526.9,400.1 525.9,408.2 524.9,397.6 523.9,403.3 522.9,395.6 521.9,404.0 520.9,399.2 519.9,402.8 518.9,402.0 517.9,399.7 516.9,393.2 515.9,338.6 514.9,388.0 513.9,394.7 512.9,365.1 511.9,399.0 510.9,399.0 509.9,399.3 508.9,403.1 507.9,402.3 506.9,398.4 505.9,404.9 504.9,399.4 503.9,397.8 502.9,398.9 501.9,407.0 500.9,395.6 499.9,405.1 498.9,394.0 497.9,402.9 496.9,395.3 495.9,399.0 494.9,400.5 493.9,405.0 492.9,395.7 491.9,398.1 490.9,395.6 489.9,403.1 488.9,392.2 487.9,400.2 486.9,368.5 485.9,400.1 484.9,395.0 483.9,402.6 482.9,400.6 481.9,405.0 480.9,393.8 479.9,403.2 478.9,398.4 477.9,401.3 476.9,397.2 475.9,401.1 474.9,397.4 473.9,404.2 472.9,400.5 471.9,403.7 470.9,396.4 469.9,402.9 468.9,389.8 467.9,401.9 466.9,393.6 465.9,402.3 464.9,395.1 463.9,397.2 462.9,398.7 461.9,407.7 460.9,394.4 459.9,407.9 458.9,401.5 457.9,400.0 456.9,399.6 455.9,402.1 454.9,398.7 453.9,402.9 452.9,399.5 451.9,399.9 450.9,398.9 449.9,399.2 448.9,394.6 447.9,403.9 446.9,393.5 445.9,402.8 444.9,400.2 443.9,400.0 442.9,397.7 441.9,403.3 440.9,395.4 439.9,401.9 438.9,398.8 437.9,407.0 436.9,393.6 435.9,404.1 434.9,395.6 433.9,400.5 432.9,398.1 431.9,404.9 430.9,398.3 429.9,399.9 428.9,393.6 427.9,397.8 426.9,400.6 425.9,398.9 424.9,396.9 423.9,403.2 423.0,394.9 422.0,407.5 421.0,400.6 420.0,399.1 419.0,395.5 418.0,406.8 417.0,398.6 416.0,404.0 415.0,394.4 414.0,397.1 413.0,395.8 412.0,400.3 411.0,398.4 410.0,405.3 409.0,396.7 408.0,407.2 407.0,399.9 406.0,405.9 405.0,391.0 404.0,409.7 403.0,396.4 402.0,404.6 401.0,397.6 400.0,400.8 399.0,397.1 398.0,405.2 397.0,399.5 396.0,403.5 395.0,399.6 394.0,402.4 393.0,400.2 392.0,403.0 391.0,394.0 390.0,401.5 389.0,392.6 388.0,403.2 387.0,393.4 386.0,398.1 385.0,396.0 384.0,404.3 383.0,399.1 382.0,400.8 381.0,395.1 380.0,400.8 379.0,397.3 378.0,402.0 377.0,395.0 376.0,401.6 375.0,396.6 374.0,407.9 373.0,403.9 372.0,405.6 371.0,397.0 370.0,403.4 369.0,400.5 368.0,399.1 367.0,396.5 366.0,403.2 365.0,387.1 364.0,406.9 363.0,401.1 362.0,399.7 361.0,399.3 360.0,401.6 359.0,392.5 358.0,388.1 357.0,400.4 356.0,398.9 355.0,398.7 354.0,405.9 353.0,399.0 352.0,405.2 351.0,397.8 350.0,400.9 349.0,398.4 348.0,400.8 347.0,395.5 346.0,394.1 345.0,396.1 344.0,405.1 343.0,398.1 342.0,398.9 341.0,388.7 340.0,402.1 339.0,395.4" fill="#7eb26d" fill-opacity="0.4"/><polyline points="339.0,437.8 340.0,440.5 341.0,439.9 342.0,439.4 343.0,441.0 344.0,439.9 345.0,439.9 346.0,442.2 347.0,438.6 348.0,439.2 349.0,440.7 350.0,440.2 351.0,439.3 352.0,440.3 353.0,440.3 354.0,443.4 355.0,439.2 356.0,439.8 357.0,439.6 358.0,441.9 359.0,437.8 360.0,439.7 361.0,440.4 362.0,437.3 363.0,440.0 364.0,441.8 365.0,440.5 366.0,442.9 367.0,438.6 368.0,440.5 369.0,440.9 370.0,438.6 371.0,442.1 372.0,439.2 373.0,442.6 374.0,440.8 375.0,441.5 376.0,438.0 377.0,437.7 378.0,440.4 379.0,438.9 380.0,440.2 381.0,439.2 382.0,440.9 383.0,442.2 384.0,442.3 385.0,439.4 386.0,437.0 387.0,439.6 388.0,440.6 389.0,437.5 390.0,439.6 391.0,439.8 392.0,439.6 393.0,440.1 394.0,440.3 395.0,441.8 396.0,439.3 397.0,440.1 398.0,438.4 399.0,440.4 400.0,440.5 401.0,440.1 402.0,437.7 403.0,440.4 404.0,441.1 405.0,441.5 406.0,441.3 407.0,440.3 408.0,441.5 409.0,440.2 410.0,440.3 411.0,439.8 412.0,438.1 413.0,438.0 414.0,440.2 415.0,439.5 416.0,439.0 417.0,440.2 418.0,442.2 419.0,439.1 420.0,438.8 421.0,439.4 422.0,441.1 423.0,440.2 423.9,440.7 424.9,440.3 425.9,438.3 426.9,441.1 427.9,439.1 428.9,439.2 429.9,439.1 430.9,440.0 431.9,440.0 432.9,440.8 433.9,440.0 434.9,437.0 435.9,438.8 436.9,440.4 437.9,440.6 438.9,441.1 439.9,439.5 440.9,439.4 441.9,441.8 442.9,439.3 443.9,440.7 444.9,440.7 445.9,439.7 446.9,437.7 447.9,440.5 448.9,440.3 449.9,439.6 450.9,438.6 451.9,437.4 452.9,441.5 453.9,439.7 454.9,439.9 455.9,440.5 456.9,440.8 457.9,437.7 458.9,440.4 459.9,437.8 460.9,439.1 461.9,441.5 462.9,440.0 463.9,435.9 464.9,439.3 465.9,439.5 466.9,438.7 467.9,439.6 468.9,440.7 469.9,440.4 470.9,440.6 471.9,439.7 472.9,441.3 473.9,442.3 474.9,439.8 475.9,441.7 476.9,442.5 477.9,439.5 478.9,440.9 479.9,439.3 480.9,440.6 481.9,441.4 482.9,441.6 483.9,440.6 484.9,440.3 485.9,441.0 486.9,440.3 487.9,441.9 488.9,436.5 489.9,442.3 490.9,440.2 491.9,439.0 492.9,438.5 493.9,437.7 494.9,442.0 495.9,439.0 496.9,438.4 497.9,438.7 498.9,441.1 499.9,439.4 500.9,437.5 501.9,441.9 502.9,439.3 503.9,438.5 504.9,440.8 505.9,439.2 506.9,441.3 507.9,441.0 508.9,441.0 509.9,439.7 510.9,440.1 511.9,438.7 512.9,441.2 513.9,440.1 514.9,438.7 515.9,439.2 516.9,441.7 517.9,439.1 518.9,440.6 519.9,439.4 520.9,439.6 521.9,438.4 522.9,437.9 523.9,442.3 524.9,441.7 525.9,439.0 526.9,443.1 527.9,438.5 528.9,439.6 529.9,440.9 530.9,438.5 531.9,441.0 532.9,442.6 533.9,437.3 534.9,442.4 535.9,439.1 536.9,440.9 537.9,439.7 538.9,442.1 539.9,438.6 540.9,441.8 541.9,441.7 542.9,440.4 543.9,438.9 544.9,439.6 545.9,438.9 546.9,440.5 547.9,442.9 548.9,441.4 549.9,440.4 550.9,439.2 551.9,440.3 552.9,439.3 553.9,440.7 554.9,440.7 555.9,439.9 556.9,440.2 557.9,441.4 558.9,439.7 559.9,437.7 560.9,440.2 561.9,440.2 562.9,441.3 563.9,439.9 564.9,439.1 565.9,437.3 566.9,436.4 567.9,439.0 568.9,440.1 569.9,436.8 570.9,438.7 571.9,439.8 572.9,439.4 573.9,438.4 574.9,438.5 575.9,440.4 576.9,440.6 577.9,439.6 578.9,440.1 579.9,442.4 580.9,438.3 581.9,439.9 582.9,439.0 583.9,441.5 584.9,435.4 585.9,440.7 586.9,440.1 587.9,441.8 588.9,440.2 589.9,440.2 590.9,443.4 591.9,439.4 592.9,439.9 593.8,438.7 594.8,442.9 595.8,441.2 596.8,440.0 597.8,439.1 598.8,438.3 599.8,438.9 600.8,442.2 601.8,439.5 602.8,438.0 603.8,439.9 604.8,440.6 605.8,439.5 606.8,440.6 607.8,439.1 608.8,440.0 609.8,438.1 610.8,439.3 611.8,440.9 612.8,439.2 613.8,438.7 614.8,440.7 615.8,440.5 616.8,442.9 617.8,438.8 618.8,440.7 619.8,442.7 620.8,442.2 621.8,440.2 622.8,439.0 623.8,440.1 624.8,441.2 625.8,439.1 626.8,441.7 627.8,438.8 628.8,439.3 629.8,440.0 630.8,434.3 631.8,441.2 632.8,440.5 633.8,441.5 634.8,437.6 635.8,439.9 636.8,437.8 637.8,440.7 638.8,439.5 639.8,440.2 640.8,442.0 641.8,439.6 642.8,438.7 643.8,440.1 644.8,440.0 645.8,438.1 646.8,441.6 647.8,441.9 648.8,440.8 649.8,441.5 650.8,438.2 651.8,439.5 652.8,441.1 653.8,440.7 654.8,436.2 655.8,440.7 656.8,438.4 657.8,439.5 658.8,439.1 659.8,435.7 660.8,441.1 661.8,444.0 662.8,439.2 663.8,440.0 664.8,442.1 665.8,438.4 666.8,438.9 667.8,440.3 668.8,443.6 669.8,439.6 670.8,440.8 671.8,441.7 672.8,439.5 673.8,441.8 674.8,439.4 675.8,441.8 676.8,436.7 677.8,440.1 678.8,437.6 679.8,441.3 680.8,441.8 681.8,440.8 682.8,441.4 683.8,440.7 684.8,439.4 685.8,438.9 686.8,437.8 687.8,440.9 688.8,436.5 689.8,437.4 690.8,440.2 691.8,442.9 692.8,440.0 693.8,439.8 694.8,442.9 695.8,439.8 696.8,440.2 697.8,441.0 698.8,439.1 699.8,438.6 700.8,440.6 701.8,439.6 702.8,440.8 703.8,437.6 704.8,439.8 705.8,439.3 706.8,440.7 707.8,442.8 708.8,439.2 709.8,442.0 710.8,439.8 711.8,437.6 712.8,440.0 713.8,441.5 714.8,441.8 715.8,438.4 716.8,440.0 717.8,439.2 718.8,438.7 719.8,440.0 720.8,440.3 721.8,441.2 722.8,443.9 723.8,441.9 724.8,440.0 725.8,440.2 726.8,439.4 727.8,440.1 728.8,439.7 729.8,438.9 730.8,441.1 731.8,442.6 732.8,445.1 733.8,438.7 734.8,439.9 735.8,439.3 736.8,437.9 737.8,438.5 738.8,440.0 739.8,438.9 740.8,441.8 741.8,439.4 742.8,439.8 743.8,442.0 744.8,438.2 745.8,440.9 746.8,439.1 747.8,440.5 748.8,438.7 749.8,434.5 750.8,441.0 751.8,440.0 752.8,440.1 753.8,438.8 754.8,440.4 755.8,440.7 756.8,439.3 757.8,443.5 758.8,440.8 759.8,441.7 760.8,439.6 761.8,440.9 762.8,441.4 763.7,440.4 764.7,441.8 765.7,440.0 766.7,440.8 767.7,440.4 768.7,440.9 769.7,438.8 770.7,440.1 771.7,439.3 772.7,439.3 773.7,441.0 774.7,439.2 775.7,439.5 776.7,439.5 777.7,440.5 778.7,440.5 779.7,438.9 780.7,437.1 781.7,441.0 782.7,439.2 783.7,440.4 784.7,438.9 785.7,439.4 786.7,438.6 787.7,443.6 788.7,440.7 789.7,441.2 790.7,436.5 791.7,440.9 792.7,440.8 793.7,439.1 794.7,437.5 795.7,440.4 796.7,440.3 797.7,435.9 798.7,439.9 799.7,440.4 800.7,441.7 801.7,441.2 802.7,439.0 803.7,438.5 804.7,439.8 805.7,441.0 806.7,439.8 807.7,440.3 808.7,439.2 809.7,439.8 810.7,440.7 811.7,439.7 812.7,438.2 813.7,438.9 814.7,438.4 815.7,441.5 816.7,439.4 817.7,441.2 818.7,435.3 819.7,438.8 820.7,442.8 821.7,438.7 822.7,440.5 823.7,440.8 824.7,440.7 825.7,440.1 826.7,440.4 827.7,439.7 828.7,440.7 829.7,438.9 830.7,438.6 831.7,440.6 832.7,441.8 833.7,439.0 834.7,438.5 835.7,440.2 836.7,441.6 837.7,439.6 838.7,438.0 839.7,442.4 840.7,439.3 841.7,440.3 842.7,439.3 843.7,439.3 844.7,441.6 845.7,439.6 846.7,438.2 847.7,439.7 848.7,441.1 849.7,442.2 850.7,441.6 851.7,439.6 852.7,437.9 853.7,440.3 854.7,441.3 855.7,441.6 856.7,441.3 857.7,440.4 858.7,441.6 859.7,437.8 860.7,440.9 861.7,441.0 862.7,439.5 863.7,438.1 864.7,438.2 865.7,440.6 866.7,439.6 867.7,439.7 868.7,437.4 869.7,439.6 870.7,441.2 871.7,441.6 872.7,439.7 873.7,441.5 874.7,438.2 875.7,439.9 876.7,441.3 877.7,440.4 878.7,440.6 879.7,440.1 880.7,435.3 881.7,441.8 882.7,442.4 883.7,439.5 884.7,440.2 885.7,439.7 886.7,439.4 887.7,440.2 888.7,438.9 889.7,441.1 890.7,439.9 891.7,441.0 892.7,441.4 893.7,439.1 894.7,437.5 895.7,442.5 896.7,441.4 897.7,439.6 898.7,435.9 899.7,440.8 900.7,440.2 901.7,441.8 902.7,436.7 903.7,439.3 904.7,438.8 905.7,439.1 906.7,438.7 907.7,439.2 908.7,440.4 909.7,439.0 910.7,439.8 911.7,438.3 912.7,440.9 913.7,440.6 914.7,435.1 915.7,438.3 916.7,439.8 917.7,440.9 918.7,440.1 919.7,440.6 920.7,437.5 921.7,438.8 922.7,438.3 923.7,439.5 924.7,440.7 925.7,438.4 926.7,437.8 927.7,439.2 928.7,440.0 929.7,438.5 930.7,440.4 931.7,438.9 932.7,440.9 933.6,441.2 934.6,439.2 935.6,439.5 936.6,437.5 937.6,440.3 938.6,439.9 939.6,441.4 940.6,442.4 941.6,442.2 942.6,439.3 943.6,441.5 944.6,438.5 945.6,438.1 946.6,440.3 947.6,437.8 948.6,439.6 949.6,438.5 950.6,440.2 951.6,438.7 952.6,441.2 953.6,437.3 954.6,440.5 955.6,440.1 956.6,439.1 957.6,439.7 958.6,440.0 959.6,439.0 960.6,438.9 961.6,441.7 962.6,439.2 963.6,439.1 964.6,440.9 965.6,439.4 966.6,441.7 967.6,438.1 968.6,440.2 969.6,440.0 970.6,438.4 971.6,440.1 972.6,439.2 973.6,441.3 974.6,440.7 975.6,441.7 976.6,440.2 977.6,438.6 978.6,439.7 979.6,440.7 980.6,441.3 981.6,441.1 982.6,442.6 983.6,439.2 984.6,439.5 985.6,440.0 986.6,439.1 987.6,440.1 988.6,440.0 989.6,438.3 990.6,440.7 991.6,439.7 992.6,435.0 993.6,439.8 994.6,439.0 995.6,443.6 996.6,437.4 997.6,442.9 998.6,441.4 999.6,441.3 1000.6,437.8 1001.6,439.5 1002.6,440.3 1003.6,441.6 1004.6,439.5 1005.6,439.8 1006.6,440.8 1007.6,441.9 1008.6,438.5 1009.6,439.7 1010.6,439.5 1011.6,439.8 1012.6,440.1 1013.6,442.2 1014.6,439.9 1015.6,438.3 1016.6,439.9 1017.6,439.3" fill="none" stroke="#e8c45a" stroke-width="1" stroke-opacity="0.92" stroke-linejoin="round"/><polyline points="339.0,396.5 340.0,403.4 341.0,390.4 342.0,400.1 343.0,399.5 344.0,406.3 345.0,399.1 346.0,406.9 347.0,398.6 348.0,402.0 349.0,399.8 350.0,402.4 351.0,399.3 352.0,406.2 353.0,400.3 354.0,407.0 355.0,399.8 356.0,400.2 357.0,403.2 358.0,402.7 359.0,396.0 360.0,402.6 361.0,400.4 362.0,400.8 363.0,402.2 364.0,409.5 365.0,397.9 366.0,406.2 367.0,397.6 368.0,400.2 369.0,401.7 370.0,404.5 371.0,398.1 372.0,406.9 373.0,405.1 374.0,409.0 375.0,397.7 376.0,402.9 377.0,396.5 378.0,403.6 379.0,398.8 380.0,402.2 381.0,396.4 382.0,402.2 383.0,400.8 384.0,405.7 385.0,397.5 386.0,400.3 387.0,394.5 388.0,405.3 389.0,394.0 390.0,403.0 391.0,395.8 392.0,404.1 393.0,401.7 394.0,403.9 395.0,400.9 396.0,404.7 397.0,400.6 398.0,406.6 399.0,398.5 400.0,402.6 401.0,398.9 402.0,405.7 403.0,397.6 404.0,411.7 405.0,398.4 406.0,407.9 407.0,401.9 408.0,408.3 409.0,398.2 410.0,407.1 411.0,399.4 412.0,401.4 413.0,396.9 414.0,398.4 415.0,396.0 416.0,405.1 417.0,400.1 418.0,408.9 419.0,396.8 420.0,400.5 421.0,401.8 422.0,408.8 423.0,396.2 423.9,404.6 424.9,398.3 425.9,400.7 426.9,402.0 427.9,399.5 428.9,395.4 429.9,402.1 430.9,399.4 431.9,406.7 432.9,399.8 433.9,401.7 434.9,396.7 435.9,405.2 436.9,395.9 437.9,408.6 438.9,400.7 439.9,402.9 440.9,396.5 441.9,404.7 442.9,399.2 443.9,402.5 444.9,401.5 445.9,404.3 446.9,395.0 447.9,405.0 448.9,396.1 449.9,400.6 450.9,400.3 451.9,401.2 452.9,400.9 453.9,405.0 454.9,400.3 455.9,403.7 456.9,401.2 457.9,401.5 458.9,402.5 459.9,409.5 460.9,396.2 461.9,409.1 462.9,399.9 463.9,398.3 464.9,396.7 465.9,404.1 466.9,395.5 467.9,403.2 468.9,391.4 469.9,404.2 470.9,397.7 471.9,405.7 472.9,401.6 473.9,405.5 474.9,398.5 475.9,402.7 476.9,398.5 477.9,402.7 478.9,400.0 479.9,404.7 480.9,394.9 481.9,406.1 482.9,401.9 483.9,404.4 484.9,396.6 485.9,404.3 486.9,391.6 487.9,404.4 488.9,394.2 489.9,404.3 490.9,396.7 491.9,399.4 492.9,397.2 493.9,406.6 494.9,401.9 495.9,400.1 496.9,397.2 497.9,404.0 498.9,396.1 499.9,406.4 500.9,396.7 501.9,408.4 502.9,400.2 503.9,399.2 504.9,400.6 505.9,405.9 506.9,399.9 507.9,404.4 508.9,404.7 509.9,400.5 510.9,400.5 511.9,403.7 512.9,392.5 513.9,400.3 514.9,395.5 515.9,386.0 516.9,400.7 517.9,401.1 518.9,403.4 519.9,404.0 520.9,400.3 521.9,405.0 522.9,397.2 523.9,404.3 524.9,399.1 525.9,410.0 526.9,401.2 527.9,405.2 528.9,397.6 529.9,402.1 530.9,396.4 531.9,400.0 532.9,402.1 533.9,395.3 534.9,403.4 535.9,401.4 536.9,402.9 537.9,401.0 538.9,395.8 539.9,402.1 540.9,402.9 541.9,404.6 542.9,398.8 543.9,402.0 544.9,398.6 545.9,402.6 546.9,398.9 547.9,408.6 548.9,401.6 549.9,406.0 550.9,398.7 551.9,406.8 552.9,396.9 553.9,380.6 554.9,388.6 555.9,390.5 556.9,376.3 557.9,395.4 558.9,382.3 559.9,388.4 560.9,387.8 561.9,386.1 562.9,388.6 563.9,394.0 564.9,401.0 565.9,399.9 566.9,392.3 567.9,394.6 568.9,395.3 569.9,398.6 570.9,392.0 571.9,398.4 572.9,393.8 573.9,393.6 574.9,384.5 575.9,401.1 576.9,389.9 577.9,398.2 578.9,398.8 579.9,407.2 580.9,397.3 581.9,382.0 582.9,374.3 583.9,389.1 584.9,374.3 585.9,388.8 586.9,383.6 587.9,380.3 588.9,378.6 589.9,385.5 590.9,389.0 591.9,408.6 592.9,398.4 593.8,403.6 594.8,400.5 595.8,407.7 596.8,396.4 597.8,411.6 598.8,398.2 599.8,403.8 600.8,400.9 601.8,406.8 602.8,396.3 603.8,403.3 604.8,397.4 605.8,404.7 606.8,383.9 607.8,389.9 608.8,383.6 609.8,390.3 610.8,383.0 611.8,388.9 612.8,384.0 613.8,401.7 614.8,399.4 615.8,402.9 616.8,404.3 617.8,405.0 618.8,399.5 619.8,409.1 620.8,401.7 621.8,406.9 622.8,405.8 623.8,405.8 624.8,402.4 625.8,403.7 626.8,400.3 627.8,403.3 628.8,404.9 629.8,397.4 630.8,391.0 631.8,409.0 632.8,390.0 633.8,407.9 634.8,395.6 635.8,403.1 636.8,390.2 637.8,404.2 638.8,398.0 639.8,401.0 640.8,398.6 641.8,405.2 642.8,399.8 643.8,401.8 644.8,397.7 645.8,405.8 646.8,399.0 647.8,404.0 648.8,397.2 649.8,405.6 650.8,399.0 651.8,402.6 652.8,399.7 653.8,407.8 654.8,393.3 655.8,406.1 656.8,400.3 657.8,405.4 658.8,404.1 659.8,402.5 660.8,398.7 661.8,404.8 662.8,396.4 663.8,404.8 664.8,398.3 665.8,403.0 666.8,396.8 667.8,406.3 668.8,400.8 669.8,403.7 670.8,396.1 671.8,405.4 672.8,398.1 673.8,405.6 674.8,398.1 675.8,404.0 676.8,396.3 677.8,406.2 678.8,397.4 679.8,404.0 680.8,399.9 681.8,405.1 682.8,400.4 683.8,405.1 684.8,399.8 685.8,404.6 686.8,396.7 687.8,403.7 688.8,395.9 689.8,403.4 690.8,397.5 691.8,396.4 692.8,398.1 693.8,403.1 694.8,396.9 695.8,402.7 696.8,400.5 697.8,404.4 698.8,403.5 699.8,403.1 700.8,398.5 701.8,405.9 702.8,402.6 703.8,401.2 704.8,399.0 705.8,407.1 706.8,398.2 707.8,404.0 708.8,397.8 709.8,403.3 710.8,399.1 711.8,404.2 712.8,399.2 713.8,404.7 714.8,398.5 715.8,406.9 716.8,403.3 717.8,402.8 718.8,397.8 719.8,406.6 720.8,399.5 721.8,406.9 722.8,403.5 723.8,406.0 724.8,400.6 725.8,403.4 726.8,401.4 727.8,404.8 728.8,398.1 729.8,402.9 730.8,400.7 731.8,405.7 732.8,404.7 733.8,404.8 734.8,394.8 735.8,401.3 736.8,396.0 737.8,404.3 738.8,399.5 739.8,402.0 740.8,397.1 741.8,407.2 742.8,403.7 743.8,403.1 744.8,399.1 745.8,404.8 746.8,396.2 747.8,406.6 748.8,388.2 749.8,395.4 750.8,393.2 751.8,400.6 752.8,397.9 753.8,404.0 754.8,399.1 755.8,403.8 756.8,397.9 757.8,407.3 758.8,402.1 759.8,407.0 760.8,399.7 761.8,406.7 762.8,399.6 763.7,403.3 764.7,401.4 765.7,405.7 766.7,401.4 767.7,404.5 768.7,397.0 769.7,401.7 770.7,397.7 771.7,400.5 772.7,398.8 773.7,403.9 774.7,395.4 775.7,405.7 776.7,394.9 777.7,403.1 778.7,401.2 779.7,401.3 780.7,398.7 781.7,402.2 782.7,395.8 783.7,407.6 784.7,400.1 785.7,406.1 786.7,398.0 787.7,405.3 788.7,399.8 789.7,404.1 790.7,395.7 791.7,405.6 792.7,398.4 793.7,401.7 794.7,397.6 795.7,403.9 796.7,398.1 797.7,401.0 798.7,397.9 799.7,399.8 800.7,388.2 801.7,406.9 802.7,401.4 803.7,405.5 804.7,400.5 805.7,405.6 806.7,397.1 807.7,407.9 808.7,400.6 809.7,403.7 810.7,399.9 811.7,402.9 812.7,397.8 813.7,402.0 814.7,397.0 815.7,407.0 816.7,399.6 817.7,407.3 818.7,392.4 819.7,402.2 820.7,398.8 821.7,403.9 822.7,400.8 823.7,407.6 824.7,384.2 825.7,401.0 826.7,404.6 827.7,394.5 828.7,393.5 829.7,402.0 830.7,394.6 831.7,405.3 832.7,398.4 833.7,403.4 834.7,395.0 835.7,405.1 836.7,400.1 837.7,403.2 838.7,395.6 839.7,408.9 840.7,397.6 841.7,402.9 842.7,396.9 843.7,409.5 844.7,402.6 845.7,404.5 846.7,394.9 847.7,411.9 848.7,401.8 849.7,408.9 850.7,399.1 851.7,399.1 852.7,398.5 853.7,403.6 854.7,396.1 855.7,414.4 856.7,398.1 857.7,402.5 858.7,402.4 859.7,399.9 860.7,398.1 861.7,407.6 862.7,391.0 863.7,399.9 864.7,395.4 865.7,404.1 866.7,397.4 867.7,401.9 868.7,396.7 869.7,404.6 870.7,398.4 871.7,405.6 872.7,396.3 873.7,409.9 874.7,397.6 875.7,385.7 876.7,398.5 877.7,406.0 878.7,400.8 879.7,403.8 880.7,395.6 881.7,410.4 882.7,400.7 883.7,408.2 884.7,394.3 885.7,397.2 886.7,400.1 887.7,405.2 888.7,396.9 889.7,412.5 890.7,396.8 891.7,403.8 892.7,400.3 893.7,400.1 894.7,397.1 895.7,331.4 896.7,317.3 897.7,317.8 898.7,323.1 899.7,349.3 900.7,328.0 901.7,328.2 902.7,340.4 903.7,334.0 904.7,317.7 905.7,319.4 906.7,324.4 907.7,403.1 908.7,400.4 909.7,398.9 910.7,392.8 911.7,400.8 912.7,399.0 913.7,408.6 914.7,393.1 915.7,405.0 916.7,398.2 917.7,406.4 918.7,397.2 919.7,402.6 920.7,395.7 921.7,399.5 922.7,392.8 923.7,405.5 924.7,394.3 925.7,407.6 926.7,394.1 927.7,404.4 928.7,400.3 929.7,401.5 930.7,397.2 931.7,403.0 932.7,398.7 933.6,404.7 934.6,396.3 935.6,405.0 936.6,394.7 937.6,404.1 938.6,402.4 939.6,407.8 940.6,402.2 941.6,399.6 942.6,398.0 943.6,403.9 944.6,395.7 945.6,401.9 946.6,395.7 947.6,397.6 948.6,397.8 949.6,399.5 950.6,401.6 951.6,399.5 952.6,398.6 953.6,401.4 954.6,399.0 955.6,403.9 956.6,397.8 957.6,407.3 958.6,402.7 959.6,398.9 960.6,392.2 961.6,403.9 962.6,397.9 963.6,406.8 964.6,398.2 965.6,406.9 966.6,402.7 967.6,402.7 968.6,400.4 969.6,399.5 970.6,395.7 971.6,398.9 972.6,397.9 973.6,404.2 974.6,397.7 975.6,403.4 976.6,397.1 977.6,403.8 978.6,396.2 979.6,403.8 980.6,399.2 981.6,404.7 982.6,401.9 983.6,404.9 984.6,401.6 985.6,404.2 986.6,398.7 987.6,404.2 988.6,397.2 989.6,401.8 990.6,399.9 991.6,400.6 992.6,392.9 993.6,400.6 994.6,398.2 995.6,408.9 996.6,395.1 997.6,397.4 998.6,397.2 999.6,402.9 1000.6,399.1 1001.6,402.4 1002.6,400.6 1003.6,404.6 1004.6,390.2 1005.6,406.0 1006.6,397.1 1007.6,407.7 1008.6,396.9 1009.6,401.6 1010.6,396.8 1011.6,402.8 1012.6,400.7 1013.6,408.7 1014.6,399.4 1015.6,404.1 1016.6,403.1 1017.6,413.2" fill="none" stroke="#0a437c" stroke-width="1" stroke-opacity="1" stroke-linejoin="round"/><polyline points="339.0,396.2 340.0,403.1 341.0,390.0 342.0,399.7 343.0,399.2 344.0,405.9 345.0,398.8 346.0,406.6 347.0,398.1 348.0,401.8 349.0,399.2 350.0,402.1 351.0,399.0 352.0,405.9 353.0,399.9 354.0,406.7 355.0,399.5 356.0,400.0 357.0,402.9 358.0,402.5 359.0,395.5 360.0,402.4 361.0,400.1 362.0,400.5 363.0,401.8 364.0,409.1 365.0,397.6 366.0,405.5 367.0,397.3 368.0,399.9 369.0,401.3 370.0,404.2 371.0,397.8 372.0,406.6 373.0,404.8 374.0,408.7 375.0,397.4 376.0,402.7 377.0,396.3 378.0,403.3 379.0,398.4 380.0,401.7 381.0,396.1 382.0,401.9 383.0,400.6 384.0,405.3 385.0,397.2 386.0,399.9 387.0,394.2 388.0,404.9 389.0,393.7 390.0,402.8 391.0,395.4 392.0,403.7 393.0,401.4 394.0,403.7 395.0,400.6 396.0,404.4 397.0,400.4 398.0,406.2 399.0,398.2 400.0,402.3 401.0,398.5 402.0,405.4 403.0,397.3 404.0,411.5 405.0,398.0 406.0,407.6 407.0,401.6 408.0,408.0 409.0,397.8 410.0,406.7 411.0,399.2 412.0,401.1 413.0,396.7 414.0,398.0 415.0,395.5 416.0,404.8 417.0,399.8 418.0,408.6 419.0,396.6 420.0,400.3 421.0,401.4 422.0,408.5 423.0,395.9 423.9,404.3 424.9,398.0 425.9,400.4 426.9,401.6 427.9,399.1 428.9,395.1 429.9,401.5 430.9,399.2 431.9,406.4 432.9,399.6 433.9,401.3 434.9,396.5 435.9,404.8 436.9,395.5 437.9,408.3 438.9,400.2 439.9,402.7 440.9,396.2 441.9,404.2 442.9,398.9 443.9,402.3 444.9,401.1 445.9,403.8 446.9,394.6 447.9,404.7 448.9,395.8 449.9,400.3 450.9,400.0 451.9,400.8 452.9,400.6 453.9,404.7 454.9,399.9 455.9,403.4 456.9,400.9 457.9,401.2 458.9,402.3 459.9,409.2 460.9,395.7 461.9,408.9 462.9,399.5 463.9,398.0 464.9,396.3 465.9,403.8 466.9,395.2 467.9,402.8 468.9,391.0 469.9,403.8 470.9,397.5 471.9,405.5 472.9,401.2 473.9,405.0 474.9,398.2 475.9,402.4 476.9,398.1 477.9,402.4 478.9,399.7 479.9,404.2 480.9,394.6 481.9,405.8 482.9,401.4 483.9,404.1 484.9,396.4 485.9,403.9 486.9,391.2 487.9,404.0 488.9,393.8 489.9,403.8 490.9,396.4 491.9,398.9 492.9,396.9 493.9,406.3 494.9,401.5 495.9,399.8 496.9,396.7 497.9,403.7 498.9,395.6 499.9,405.9 500.9,396.4 501.9,408.0 502.9,400.0 503.9,398.8 504.9,400.3 505.9,405.7 506.9,399.4 507.9,404.1 508.9,404.3 509.9,400.1 510.9,400.1 511.9,403.4 512.9,392.2 513.9,399.8 514.9,395.2 515.9,385.5 516.9,400.3 517.9,400.7 518.9,403.0 519.9,403.7 520.9,400.0 521.9,404.8 522.9,396.9 523.9,404.0 524.9,398.9 525.9,409.6 526.9,400.9 527.9,404.9 528.9,397.3 529.9,401.6 530.9,396.0 531.9,399.6 532.9,401.7 533.9,394.8 534.9,403.0 535.9,401.1 536.9,402.5 537.9,400.7 538.9,395.6 539.9,401.8 540.9,402.6 541.9,404.3 542.9,398.5 543.9,401.8 544.9,398.3 545.9,402.3 546.9,398.3 547.9,408.3 548.9,401.1 549.9,405.6 550.9,398.4 551.9,406.6 552.9,396.6 553.9,380.3 554.9,388.4 555.9,390.2 556.9,376.1 557.9,394.9 558.9,382.0 559.9,388.0 560.9,387.4 561.9,385.8 562.9,388.3 563.9,393.7 564.9,400.7 565.9,399.5 566.9,392.0 567.9,394.2 568.9,395.0 569.9,398.2 570.9,391.8 571.9,398.1 572.9,393.5 573.9,393.4 574.9,384.1 575.9,400.7 576.9,389.6 577.9,397.9 578.9,398.6 579.9,406.8 580.9,397.1 581.9,381.6 582.9,374.0 583.9,388.8 584.9,374.0 585.9,388.5 586.9,383.3 587.9,380.0 588.9,378.3 589.9,385.2 590.9,388.7 591.9,408.1 592.9,398.1 593.8,403.2 594.8,400.2 595.8,407.4 596.8,396.1 597.8,411.1 598.8,397.9 599.8,403.5 600.8,400.5 601.8,406.4 602.8,396.0 603.8,403.1 604.8,396.8 605.8,404.5 606.8,383.6 607.8,389.2 608.8,383.4 609.8,389.9 610.8,382.6 611.8,388.7 612.8,383.7 613.8,401.3 614.8,398.9 615.8,402.6 616.8,404.0 617.8,404.7 618.8,399.2 619.8,408.7 620.8,401.4 621.8,406.5 622.8,405.5 623.8,405.5 624.8,402.0 625.8,403.4 626.8,399.9 627.8,403.0 628.8,404.5 629.8,397.0 630.8,390.8 631.8,408.7 632.8,389.6 633.8,407.6 634.8,395.3 635.8,402.9 636.8,390.0 637.8,403.8 638.8,397.7 639.8,400.6 640.8,398.3 641.8,405.0 642.8,399.5 643.8,401.4 644.8,397.3 645.8,405.6 646.8,398.7 647.8,403.7 648.8,396.9 649.8,405.3 650.8,398.7 651.8,402.2 652.8,399.5 653.8,407.5 654.8,392.9 655.8,405.7 656.8,400.1 657.8,404.8 658.8,403.6 659.8,402.1 660.8,398.4 661.8,404.5 662.8,396.1 663.8,404.4 664.8,398.1 665.8,402.7 666.8,396.6 667.8,406.0 668.8,400.5 669.8,403.5 670.8,395.9 671.8,405.0 672.8,397.8 673.8,405.3 674.8,397.8 675.8,403.7 676.8,396.0 677.8,405.9 678.8,396.9 679.8,403.7 680.8,399.6 681.8,404.8 682.8,399.9 683.8,404.8 684.8,399.6 685.8,404.4 686.8,396.3 687.8,403.3 688.8,395.7 689.8,403.2 690.8,397.2 691.8,396.1 692.8,397.7 693.8,402.8 694.8,396.5 695.8,402.3 696.8,400.1 697.8,404.1 698.8,403.2 699.8,402.9 700.8,398.2 701.8,405.6 702.8,402.4 703.8,401.0 704.8,398.6 705.8,406.7 706.8,397.9 707.8,403.6 708.8,397.4 709.8,402.8 710.8,398.6 711.8,403.9 712.8,398.9 713.8,404.3 714.8,398.2 715.8,406.2 716.8,402.8 717.8,402.5 718.8,397.2 719.8,406.2 720.8,399.1 721.8,406.7 722.8,403.2 723.8,405.7 724.8,400.3 725.8,402.9 726.8,401.2 727.8,404.4 728.8,397.6 729.8,402.6 730.8,400.5 731.8,405.3 732.8,404.2 733.8,404.6 734.8,394.5 735.8,400.8 736.8,395.8 737.8,403.9 738.8,399.2 739.8,401.7 740.8,396.6 741.8,406.8 742.8,403.3 743.8,402.8 744.8,398.8 745.8,404.3 746.8,395.9 747.8,406.2 748.8,387.8 749.8,395.1 750.8,392.8 751.8,400.3 752.8,397.5 753.8,403.6 754.8,398.7 755.8,403.6 756.8,397.6 757.8,406.8 758.8,401.6 759.8,406.6 760.8,399.3 761.8,406.1 762.8,399.3 763.7,402.9 764.7,401.1 765.7,405.3 766.7,400.9 767.7,404.2 768.7,396.6 769.7,401.2 770.7,397.4 771.7,400.3 772.7,398.3 773.7,403.5 774.7,395.1 775.7,405.3 776.7,394.6 777.7,402.9 778.7,400.9 779.7,401.1 780.7,398.3 781.7,401.8 782.7,395.5 783.7,407.2 784.7,399.8 785.7,405.9 786.7,397.8 787.7,404.9 788.7,399.5 789.7,403.8 790.7,395.3 791.7,405.3 792.7,398.1 793.7,401.4 794.7,397.3 795.7,403.6 796.7,397.7 797.7,400.7 798.7,397.7 799.7,399.6 800.7,388.0 801.7,406.6 802.7,400.9 803.7,405.2 804.7,400.2 805.7,405.1 806.7,396.4 807.7,407.5 808.7,400.3 809.7,403.4 810.7,399.5 811.7,402.6 812.7,397.4 813.7,401.7 814.7,396.6 815.7,406.6 816.7,399.3 817.7,407.0 818.7,392.2 819.7,401.9 820.7,398.5 821.7,403.6 822.7,400.5 823.7,407.2 824.7,383.9 825.7,400.6 826.7,404.2 827.7,394.1 828.7,393.2 829.7,401.5 830.7,394.4 831.7,405.0 832.7,398.0 833.7,403.1 834.7,394.8 835.7,404.6 836.7,399.9 837.7,402.7 838.7,395.1 839.7,408.6 840.7,397.3 841.7,402.6 842.7,396.6 843.7,409.2 844.7,402.2 845.7,404.2 846.7,394.4 847.7,411.6 848.7,401.4 849.7,408.6 850.7,398.5 851.7,398.8 852.7,398.2 853.7,403.0 854.7,395.8 855.7,414.0 856.7,397.8 857.7,402.2 858.7,402.1 859.7,399.6 860.7,397.9 861.7,407.3 862.7,390.5 863.7,399.6 864.7,394.9 865.7,403.9 866.7,397.2 867.7,401.7 868.7,396.3 869.7,404.2 870.7,397.9 871.7,405.3 872.7,395.9 873.7,409.6 874.7,397.4 875.7,385.3 876.7,398.2 877.7,405.5 878.7,400.4 879.7,403.5 880.7,395.4 881.7,410.2 882.7,400.3 883.7,407.8 884.7,394.0 885.7,396.7 886.7,399.7 887.7,404.8 888.7,396.5 889.7,412.0 890.7,396.6 891.7,403.4 892.7,400.0 893.7,399.7 894.7,396.8 895.7,331.1 896.7,317.0 897.7,317.5 898.7,322.8 899.7,348.9 900.7,327.7 901.7,327.7 902.7,340.1 903.7,333.7 904.7,317.4 905.7,318.9 906.7,324.2 907.7,402.8 908.7,399.9 909.7,398.5 910.7,392.4 911.7,400.4 912.7,398.7 913.7,408.1 914.7,392.8 915.7,404.6 916.7,397.9 917.7,406.1 918.7,396.9 919.7,402.1 920.7,395.5 921.7,399.1 922.7,392.1 923.7,405.2 924.7,394.1 925.7,407.2 926.7,393.8 927.7,404.1 928.7,400.1 929.7,401.2 930.7,396.9 931.7,402.7 932.7,398.3 933.6,404.4 934.6,396.1 935.6,404.6 936.6,394.3 937.6,403.8 938.6,402.1 939.6,407.5 940.6,401.8 941.6,399.3 942.6,397.7 943.6,403.7 944.6,395.4 945.6,401.7 946.6,395.4 947.6,397.2 948.6,397.4 949.6,399.2 950.6,401.2 951.6,399.3 952.6,398.2 953.6,401.2 954.6,398.6 955.6,403.6 956.6,397.4 957.6,406.9 958.6,402.4 959.6,398.5 960.6,391.7 961.6,403.6 962.6,397.5 963.6,406.5 964.6,397.9 965.6,406.7 966.6,402.4 967.6,402.5 968.6,399.7 969.6,399.2 970.6,395.3 971.6,398.5 972.6,397.5 973.6,403.8 974.6,397.5 975.6,402.9 976.6,396.6 977.6,403.4 978.6,395.9 979.6,403.5 980.6,398.8 981.6,404.3 982.6,401.6 983.6,404.4 984.6,401.0 985.6,403.9 986.6,398.4 987.6,403.9 988.6,396.8 989.6,401.5 990.6,399.5 991.6,400.1 992.6,392.6 993.6,400.3 994.6,397.8 995.6,408.6 996.6,394.8 997.6,397.0 998.6,396.6 999.6,402.6 1000.6,398.7 1001.6,402.2 1002.6,400.2 1003.6,404.4 1004.6,389.8 1005.6,405.8 1006.6,396.8 1007.6,407.3 1008.6,396.7 1009.6,401.3 1010.6,396.5 1011.6,402.5 1012.6,400.3 1013.6,408.3 1014.6,399.2 1015.6,403.9 1016.6,402.7 1017.6,412.9" fill="none" stroke="#890f02" stroke-width="0.9" stroke-opacity="0.7" stroke-linejoin="round"/><polyline points="339.0,395.9 340.0,402.7 341.0,389.4 342.0,399.4 343.0,398.7 344.0,405.6 345.0,397.6 346.0,401.0 347.0,397.0 348.0,401.3 349.0,398.9 350.0,401.6 351.0,398.5 352.0,405.6 353.0,399.5 354.0,406.3 355.0,399.1 356.0,399.5 357.0,401.8 358.0,396.0 359.0,394.1 360.0,402.0 361.0,399.8 362.0,400.1 363.0,401.5 364.0,408.1 365.0,392.9 366.0,404.5 367.0,396.9 368.0,399.5 369.0,400.9 370.0,403.8 371.0,397.5 372.0,406.2 373.0,404.4 374.0,408.3 375.0,397.0 376.0,402.2 377.0,395.7 378.0,402.7 379.0,397.9 380.0,401.3 381.0,395.7 382.0,401.4 383.0,399.9 384.0,404.9 385.0,396.7 386.0,399.1 387.0,393.8 388.0,404.2 389.0,393.2 390.0,402.2 391.0,394.8 392.0,403.4 393.0,400.9 394.0,403.1 395.0,400.2 396.0,404.0 397.0,400.0 398.0,405.7 399.0,397.7 400.0,401.6 401.0,398.1 402.0,405.1 403.0,396.9 404.0,410.7 405.0,394.8 406.0,406.8 407.0,400.9 408.0,407.6 409.0,397.3 410.0,406.1 411.0,398.8 412.0,400.7 413.0,396.3 414.0,397.6 415.0,395.0 416.0,404.4 417.0,399.2 418.0,407.8 419.0,396.1 420.0,399.8 421.0,401.0 422.0,408.1 423.0,395.4 423.9,403.8 424.9,397.5 425.9,399.7 426.9,401.1 427.9,398.5 428.9,394.4 429.9,400.8 430.9,398.8 431.9,405.7 432.9,398.9 433.9,401.0 434.9,396.1 435.9,404.5 436.9,394.6 437.9,407.7 438.9,399.6 439.9,402.3 440.9,395.8 441.9,403.8 442.9,398.3 443.9,401.3 444.9,400.7 445.9,403.4 446.9,394.1 447.9,404.4 448.9,395.3 449.9,399.8 450.9,399.5 451.9,400.4 452.9,400.1 453.9,403.9 454.9,399.4 455.9,402.8 456.9,400.3 457.9,400.6 458.9,401.9 459.9,408.6 460.9,395.2 461.9,408.3 462.9,399.1 463.9,397.7 464.9,395.8 465.9,403.1 466.9,394.5 467.9,402.4 468.9,390.5 469.9,403.4 470.9,397.0 471.9,404.7 472.9,400.9 473.9,404.7 474.9,397.8 475.9,401.8 476.9,397.7 477.9,401.9 478.9,399.1 479.9,403.8 480.9,394.2 481.9,405.4 482.9,401.1 483.9,403.4 484.9,395.8 485.9,402.2 486.9,381.0 487.9,402.3 488.9,393.1 489.9,403.5 490.9,396.0 491.9,398.5 492.9,396.4 493.9,405.7 494.9,401.1 495.9,399.4 496.9,396.1 497.9,403.4 498.9,394.9 499.9,405.6 500.9,396.0 501.9,407.6 502.9,399.5 503.9,398.3 504.9,399.9 505.9,405.3 506.9,399.0 507.9,403.3 508.9,403.8 509.9,399.8 510.9,399.6 511.9,401.4 512.9,380.0 513.9,397.5 514.9,392.0 515.9,364.4 516.9,397.1 517.9,400.3 518.9,402.5 519.9,403.3 520.9,399.6 521.9,404.4 522.9,396.3 523.9,403.7 524.9,398.3 525.9,408.9 526.9,400.5 527.9,404.4 528.9,396.8 529.9,401.2 530.9,394.3 531.9,389.9 532.9,399.7 533.9,394.1 534.9,402.7 535.9,400.2 536.9,402.0 537.9,400.0 538.9,395.1 539.9,401.4 540.9,402.1 541.9,403.9 542.9,397.9 543.9,401.3 544.9,398.0 545.9,401.8 546.9,397.8 547.9,408.0 548.9,400.8 549.9,405.1 550.9,397.8 551.9,406.2 552.9,393.8 553.9,362.4 554.9,385.5 555.9,388.9 556.9,368.5 557.9,393.4 558.9,381.7 559.9,387.7 560.9,385.5 561.9,376.5 562.9,386.7 563.9,393.3 564.9,400.3 565.9,398.9 566.9,391.0 567.9,388.3 568.9,393.9 569.9,397.0 570.9,386.5 571.9,397.0 572.9,392.1 573.9,387.8 574.9,382.9 575.9,399.4 576.9,384.4 577.9,396.8 578.9,397.9 579.9,406.1 580.9,396.7 581.9,379.8 582.9,365.1 583.9,386.8 584.9,370.5 585.9,387.3 586.9,381.8 587.9,371.1 588.9,376.6 589.9,384.7 590.9,388.3 591.9,407.7 592.9,397.6 593.8,402.9 594.8,399.8 595.8,407.0 596.8,395.7 597.8,410.5 598.8,397.5 599.8,403.1 600.8,400.1 601.8,405.7 602.8,395.7 603.8,402.7 604.8,396.4 605.8,403.6 606.8,380.7 607.8,388.4 608.8,383.0 609.8,389.4 610.8,381.5 611.8,388.0 612.8,383.1 613.8,400.6 614.8,398.5 615.8,402.2 616.8,403.6 617.8,404.3 618.8,398.9 619.8,408.3 620.8,400.9 621.8,405.9 622.8,405.1 623.8,405.0 624.8,401.5 625.8,403.1 626.8,399.5 627.8,402.6 628.8,402.8 629.8,386.7 630.8,389.0 631.8,408.1 632.8,388.8 633.8,407.2 634.8,394.8 635.8,402.5 636.8,389.6 637.8,403.4 638.8,397.4 639.8,400.1 640.8,398.0 641.8,404.6 642.8,398.9 643.8,401.0 644.8,397.0 645.8,405.2 646.8,398.4 647.8,403.3 648.8,396.5 649.8,405.0 650.8,398.2 651.8,401.7 652.8,399.1 653.8,406.9 654.8,392.6 655.8,405.2 656.8,399.7 657.8,404.2 658.8,403.2 659.8,401.5 660.8,397.8 661.8,404.1 662.8,395.7 663.8,403.8 664.8,397.6 665.8,402.3 666.8,396.0 667.8,405.4 668.8,400.2 669.8,402.8 670.8,395.5 671.8,404.6 672.8,397.1 673.8,404.8 674.8,397.3 675.8,403.2 676.8,395.6 677.8,405.6 678.8,396.5 679.8,403.3 680.8,399.1 681.8,404.4 682.8,399.4 683.8,404.4 684.8,399.2 685.8,403.9 686.8,395.6 687.8,402.9 688.8,395.2 689.8,402.3 690.8,396.9 691.8,395.7 692.8,397.1 693.8,402.2 694.8,396.1 695.8,401.7 696.8,399.3 697.8,403.7 698.8,402.9 699.8,402.2 700.8,397.6 701.8,405.0 702.8,401.6 703.8,400.4 704.8,398.3 705.8,406.2 706.8,397.3 707.8,403.3 708.8,396.9 709.8,402.5 710.8,398.1 711.8,403.4 712.8,398.4 713.8,403.9 714.8,397.8 715.8,405.8 716.8,402.3 717.8,402.1 718.8,396.9 719.8,405.7 720.8,398.8 721.8,406.2 722.8,402.7 723.8,405.0 724.8,399.6 725.8,402.5 726.8,400.3 727.8,403.8 728.8,397.2 729.8,402.2 730.8,400.0 731.8,404.9 732.8,403.7 733.8,404.3 734.8,394.1 735.8,399.9 736.8,395.4 737.8,403.2 738.8,398.8 739.8,401.3 740.8,396.1 741.8,406.3 742.8,402.8 743.8,402.3 744.8,398.4 745.8,403.9 746.8,395.4 747.8,405.7 748.8,387.4 749.8,394.7 750.8,392.4 751.8,399.8 752.8,397.2 753.8,403.1 754.8,398.2 755.8,402.7 756.8,396.9 757.8,406.3 758.8,401.1 759.8,406.3 760.8,399.0 761.8,405.8 762.8,398.9 763.7,402.2 764.7,400.7 765.7,404.8 766.7,400.5 767.7,403.8 768.7,396.3 769.7,400.8 770.7,397.1 771.7,399.9 772.7,397.9 773.7,403.1 774.7,394.5 775.7,404.8 776.7,394.2 777.7,402.4 778.7,400.4 779.7,400.6 780.7,397.9 781.7,401.0 782.7,394.8 783.7,406.9 784.7,399.2 785.7,405.2 786.7,397.0 787.7,404.5 788.7,399.0 789.7,403.4 790.7,394.9 791.7,404.8 792.7,397.8 793.7,401.1 794.7,396.9 795.7,403.2 796.7,397.3 797.7,400.1 798.7,397.4 799.7,396.2 800.7,365.1 801.7,403.3 802.7,400.5 803.7,404.5 804.7,399.6 805.7,404.0 806.7,391.4 807.7,406.5 808.7,399.5 809.7,402.5 810.7,399.0 811.7,402.1 812.7,397.0 813.7,401.3 814.7,395.8 815.7,406.2 816.7,398.9 817.7,406.6 818.7,391.7 819.7,401.5 820.7,398.0 821.7,402.7 822.7,400.0 823.7,404.1 824.7,362.8 825.7,397.2 826.7,403.5 827.7,393.7 828.7,392.7 829.7,400.9 830.7,394.0 831.7,404.6 832.7,397.5 833.7,402.6 834.7,394.4 835.7,404.1 836.7,399.2 837.7,402.4 838.7,394.5 839.7,408.2 840.7,396.7 841.7,402.0 842.7,396.1 843.7,408.8 844.7,401.9 845.7,403.6 846.7,393.8 847.7,411.3 848.7,400.6 849.7,408.2 850.7,398.1 851.7,398.3 852.7,397.7 853.7,402.6 854.7,395.3 855.7,413.6 856.7,397.5 857.7,401.6 858.7,401.5 859.7,399.3 860.7,397.5 861.7,407.0 862.7,390.1 863.7,399.2 864.7,394.1 865.7,403.2 866.7,396.7 867.7,401.3 868.7,395.9 869.7,403.7 870.7,397.4 871.7,405.0 872.7,395.5 873.7,409.1 874.7,394.1 875.7,363.6 876.7,395.0 877.7,405.1 878.7,400.0 879.7,403.1 880.7,395.0 881.7,409.5 882.7,400.0 883.7,407.3 884.7,393.7 885.7,396.2 886.7,399.3 887.7,404.3 888.7,396.1 889.7,411.6 890.7,396.2 891.7,403.0 892.7,398.7 893.7,394.4 894.7,395.8 895.7,328.7 896.7,310.9 897.7,314.8 898.7,320.7 899.7,346.5 900.7,324.3 901.7,325.0 902.7,338.1 903.7,331.0 904.7,311.8 905.7,315.0 906.7,322.1 907.7,402.4 908.7,398.6 909.7,392.4 910.7,391.2 911.7,400.0 912.7,398.3 913.7,407.8 914.7,392.3 915.7,404.0 916.7,397.4 917.7,405.7 918.7,396.5 919.7,401.7 920.7,395.0 921.7,398.8 922.7,391.7 923.7,404.1 924.7,389.6 925.7,406.3 926.7,393.4 927.7,403.7 928.7,399.6 929.7,400.8 930.7,396.6 931.7,402.3 932.7,398.0 933.6,403.9 934.6,395.6 935.6,404.3 936.6,393.7 937.6,403.2 938.6,401.5 939.6,407.1 940.6,401.4 941.6,398.8 942.6,397.2 943.6,403.2 944.6,394.9 945.6,401.3 946.6,395.0 947.6,396.7 948.6,396.8 949.6,398.7 950.6,400.7 951.6,398.8 952.6,397.6 953.6,400.7 954.6,398.1 955.6,403.3 956.6,397.1 957.6,406.6 958.6,401.9 959.6,398.0 960.6,391.2 961.6,403.0 962.6,397.1 963.6,406.0 964.6,397.5 965.6,406.3 966.6,402.0 967.6,401.9 968.6,399.2 969.6,398.7 970.6,394.6 971.6,398.0 972.6,396.9 973.6,403.3 974.6,397.1 975.6,402.0 976.6,392.2 977.6,402.5 978.6,395.5 979.6,402.6 980.6,398.2 981.6,403.9 982.6,401.3 983.6,404.0 984.6,400.5 985.6,403.2 986.6,398.0 987.6,403.0 988.6,396.4 989.6,400.9 990.6,399.0 991.6,399.5 992.6,390.6 993.6,399.6 994.6,397.4 995.6,408.3 996.6,394.3 997.6,396.6 998.6,396.0 999.6,402.1 1000.6,398.4 1001.6,401.7 1002.6,399.8 1003.6,404.0 1004.6,389.3 1005.6,405.4 1006.6,396.2 1007.6,406.7 1008.6,396.2 1009.6,400.8 1010.6,396.1 1011.6,402.1 1012.6,400.0 1013.6,407.9 1014.6,398.8 1015.6,403.6 1016.6,402.3 1017.6,412.5" fill="none" stroke="#ef843c" stroke-width="0.9" stroke-opacity="0.62" stroke-linejoin="round"/><polyline points="339.0,395.4 340.0,402.1 341.0,388.7 342.0,398.9 343.0,398.1 344.0,405.1 345.0,396.1 346.0,394.1 347.0,395.5 348.0,400.8 349.0,398.4 350.0,400.9 351.0,397.8 352.0,405.2 353.0,399.0 354.0,405.9 355.0,398.7 356.0,398.9 357.0,400.4 358.0,388.1 359.0,392.5 360.0,401.6 361.0,399.3 362.0,399.7 363.0,401.1 364.0,406.9 365.0,387.1 366.0,403.2 367.0,396.5 368.0,399.1 369.0,400.5 370.0,403.4 371.0,397.0 372.0,405.6 373.0,403.9 374.0,407.9 375.0,396.6 376.0,401.6 377.0,395.0 378.0,402.0 379.0,397.3 380.0,400.8 381.0,395.1 382.0,400.8 383.0,399.1 384.0,404.3 385.0,396.0 386.0,398.1 387.0,393.4 388.0,403.2 389.0,392.6 390.0,401.5 391.0,394.0 392.0,403.0 393.0,400.2 394.0,402.4 395.0,399.6 396.0,403.5 397.0,399.5 398.0,405.2 399.0,397.1 400.0,400.8 401.0,397.6 402.0,404.6 403.0,396.4 404.0,409.7 405.0,391.0 406.0,405.9 407.0,399.9 408.0,407.2 409.0,396.7 410.0,405.3 411.0,398.4 412.0,400.3 413.0,395.8 414.0,397.1 415.0,394.4 416.0,404.0 417.0,398.6 418.0,406.8 419.0,395.5 420.0,399.1 421.0,400.6 422.0,407.5 423.0,394.9 423.9,403.2 424.9,396.9 425.9,398.9 426.9,400.6 427.9,397.8 428.9,393.6 429.9,399.9 430.9,398.3 431.9,404.9 432.9,398.1 433.9,400.5 434.9,395.6 435.9,404.1 436.9,393.6 437.9,407.0 438.9,398.8 439.9,401.9 440.9,395.4 441.9,403.3 442.9,397.7 443.9,400.0 444.9,400.2 445.9,402.8 446.9,393.5 447.9,403.9 448.9,394.6 449.9,399.2 450.9,398.9 451.9,399.9 452.9,399.5 453.9,402.9 454.9,398.7 455.9,402.1 456.9,399.6 457.9,400.0 458.9,401.5 459.9,407.9 460.9,394.4 461.9,407.7 462.9,398.7 463.9,397.2 464.9,395.1 465.9,402.3 466.9,393.6 467.9,401.9 468.9,389.8 469.9,402.9 470.9,396.4 471.9,403.7 472.9,400.5 473.9,404.2 474.9,397.4 475.9,401.1 476.9,397.2 477.9,401.3 478.9,398.4 479.9,403.2 480.9,393.8 481.9,405.0 482.9,400.6 483.9,402.6 484.9,395.0 485.9,400.1 486.9,368.5 487.9,400.2 488.9,392.2 489.9,403.1 490.9,395.6 491.9,398.1 492.9,395.7 493.9,405.0 494.9,400.5 495.9,399.0 496.9,395.3 497.9,402.9 498.9,394.0 499.9,405.1 500.9,395.6 501.9,407.0 502.9,398.9 503.9,397.8 504.9,399.4 505.9,404.9 506.9,398.4 507.9,402.3 508.9,403.1 509.9,399.3 510.9,399.0 511.9,399.0 512.9,365.1 513.9,394.7 514.9,388.0 515.9,338.6 516.9,393.2 517.9,399.7 518.9,402.0 519.9,402.8 520.9,399.2 521.9,404.0 522.9,395.6 523.9,403.3 524.9,397.6 525.9,408.2 526.9,400.1 527.9,403.8 528.9,396.1 529.9,400.6 530.9,392.1 531.9,378.0 532.9,397.3 533.9,393.3 534.9,402.3 535.9,399.1 536.9,401.4 537.9,399.2 538.9,394.5 539.9,400.8 540.9,401.6 541.9,403.3 542.9,397.1 543.9,400.7 544.9,397.6 545.9,401.1 546.9,397.2 547.9,407.5 548.9,400.3 549.9,404.5 550.9,397.0 551.9,405.7 552.9,390.3 553.9,340.5 554.9,382.0 555.9,387.2 556.9,359.1 557.9,391.5 558.9,381.3 559.9,387.2 560.9,383.3 561.9,365.1 562.9,384.8 563.9,392.8 564.9,399.7 565.9,398.2 566.9,389.7 567.9,381.0 568.9,392.6 569.9,395.4 570.9,380.1 571.9,395.7 572.9,390.5 573.9,381.1 574.9,381.4 575.9,397.9 576.9,378.1 577.9,395.4 578.9,397.1 579.9,405.2 580.9,396.1 581.9,377.7 582.9,354.1 583.9,384.4 584.9,366.1 585.9,385.8 586.9,380.0 587.9,360.1 588.9,374.5 589.9,384.2 590.9,387.7 591.9,407.2 592.9,397.1 593.8,402.4 594.8,399.3 595.8,406.5 596.8,395.2 597.8,409.8 598.8,397.0 599.8,402.7 600.8,399.5 601.8,404.9 602.8,395.3 603.8,402.3 604.8,395.8 605.8,402.6 606.8,377.1 607.8,387.3 608.8,382.6 609.8,388.7 610.8,380.0 611.8,387.2 612.8,382.5 613.8,399.6 614.8,397.9 615.8,401.8 616.8,403.2 617.8,403.9 618.8,398.4 619.8,407.9 620.8,400.3 621.8,405.2 622.8,404.7 623.8,404.5 624.8,400.8 625.8,402.7 626.8,399.0 627.8,402.2 628.8,400.6 629.8,374.0 630.8,386.8 631.8,407.4 632.8,387.9 633.8,406.8 634.8,394.2 635.8,402.0 636.8,389.1 637.8,402.9 638.8,397.0 639.8,399.6 640.8,397.6 641.8,404.1 642.8,398.2 643.8,400.6 644.8,396.5 645.8,404.8 646.8,398.0 647.8,402.7 648.8,395.9 649.8,404.5 650.8,397.5 651.8,401.0 652.8,398.6 653.8,406.2 654.8,392.2 655.8,404.7 656.8,399.3 657.8,403.6 658.8,402.8 659.8,400.7 660.8,397.1 661.8,403.7 662.8,395.2 663.8,403.0 664.8,397.0 665.8,401.9 666.8,395.3 667.8,404.7 668.8,399.8 669.8,402.0 670.8,395.1 671.8,404.1 672.8,396.2 673.8,404.1 674.8,396.7 675.8,402.6 676.8,395.1 677.8,405.1 678.8,396.1 679.8,402.9 680.8,398.5 681.8,404.0 682.8,398.9 683.8,404.0 684.8,398.7 685.8,403.3 686.8,394.8 687.8,402.4 688.8,394.7 689.8,401.2 690.8,396.5 691.8,395.1 692.8,396.2 693.8,401.4 694.8,395.5 695.8,401.0 696.8,398.4 697.8,403.3 698.8,402.5 699.8,401.4 700.8,396.8 701.8,404.4 702.8,400.6 703.8,399.7 704.8,397.8 705.8,405.5 706.8,396.6 707.8,402.9 708.8,396.4 709.8,402.1 710.8,397.4 711.8,402.9 712.8,397.8 713.8,403.2 714.8,397.2 715.8,405.2 716.8,401.8 717.8,401.7 718.8,396.4 719.8,405.2 720.8,398.3 721.8,405.6 722.8,402.1 723.8,404.2 724.8,398.8 725.8,402.0 726.8,399.3 727.8,403.0 728.8,396.8 729.8,401.7 730.8,399.5 731.8,404.3 732.8,403.2 733.8,403.9 734.8,393.7 735.8,398.8 736.8,394.8 737.8,402.3 738.8,398.3 739.8,400.8 740.8,395.6 741.8,405.7 742.8,402.2 743.8,401.7 744.8,398.0 745.8,403.5 746.8,394.9 747.8,405.2 748.8,386.8 749.8,394.3 750.8,391.9 751.8,399.2 752.8,396.8 753.8,402.5 754.8,397.7 755.8,401.6 756.8,396.1 757.8,405.7 758.8,400.5 759.8,405.9 760.8,398.6 761.8,405.3 762.8,398.3 763.7,401.5 764.7,400.2 765.7,404.2 766.7,400.0 767.7,403.4 768.7,395.9 769.7,400.3 770.7,396.7 771.7,399.4 772.7,397.5 773.7,402.6 774.7,393.7 775.7,404.3 776.7,393.6 777.7,401.9 778.7,399.8 779.7,400.1 780.7,397.4 781.7,400.1 782.7,394.1 783.7,406.5 784.7,398.5 785.7,404.5 786.7,396.0 787.7,404.0 788.7,398.4 789.7,403.0 790.7,394.3 791.7,404.2 792.7,397.3 793.7,400.7 794.7,396.3 795.7,402.7 796.7,396.8 797.7,399.4 798.7,397.0 799.7,392.1 800.7,337.1 801.7,399.2 802.7,399.9 803.7,403.6 804.7,398.9 805.7,402.6 806.7,385.3 807.7,405.2 808.7,398.5 809.7,401.5 810.7,398.4 811.7,401.5 812.7,396.6 813.7,400.8 814.7,394.9 815.7,405.6 816.7,398.3 817.7,406.1 818.7,391.0 819.7,401.1 820.7,397.4 821.7,401.7 822.7,399.4 823.7,400.3 824.7,337.0 825.7,393.0 826.7,402.6 827.7,393.2 828.7,392.1 829.7,400.2 830.7,393.5 831.7,404.1 832.7,396.8 833.7,402.1 834.7,394.0 835.7,403.5 836.7,398.3 837.7,402.0 838.7,393.9 839.7,407.8 840.7,396.0 841.7,401.3 842.7,395.4 843.7,408.4 844.7,401.4 845.7,402.9 846.7,393.0 847.7,410.9 848.7,399.7 849.7,407.7 850.7,397.6 851.7,397.7 852.7,397.1 853.7,402.2 854.7,394.6 855.7,413.1 856.7,397.1 857.7,401.0 858.7,400.8 859.7,398.9 860.7,397.0 861.7,406.6 862.7,389.6 863.7,398.7 864.7,393.0 865.7,402.3 866.7,396.2 867.7,400.8 868.7,395.3 869.7,403.1 870.7,396.9 871.7,404.6 872.7,395.0 873.7,408.6 874.7,390.0 875.7,337.0 876.7,391.1 877.7,404.5 878.7,399.5 879.7,402.7 880.7,394.6 881.7,408.8 882.7,399.5 883.7,406.5 884.7,393.2 885.7,395.6 886.7,398.7 887.7,403.8 888.7,395.6 889.7,411.1 890.7,395.7 891.7,402.5 892.7,397.1 893.7,388.0 894.7,394.5 895.7,325.9 896.7,303.5 897.7,311.5 898.7,318.1 899.7,343.6 900.7,320.2 901.7,321.6 902.7,335.6 903.7,327.7 904.7,305.0 905.7,310.2 906.7,319.6 907.7,401.9 908.7,397.1 909.7,385.0 910.7,389.6 911.7,399.5 912.7,397.8 913.7,407.4 914.7,391.7 915.7,403.3 916.7,396.8 917.7,405.1 918.7,396.1 919.7,401.1 920.7,394.4 921.7,398.3 922.7,391.2 923.7,402.8 924.7,384.1 925.7,405.3 926.7,392.9 927.7,403.1 928.7,399.1 929.7,400.3 930.7,396.1 931.7,401.7 932.7,397.6 933.6,403.3 934.6,395.1 935.6,403.9 936.6,393.0 937.6,402.5 938.6,400.8 939.6,406.5 940.6,400.8 941.6,398.2 942.6,396.6 943.6,402.5 944.6,394.4 945.6,401.0 946.6,394.4 947.6,396.0 948.6,396.1 949.6,398.2 950.6,400.1 951.6,398.3 952.6,396.9 953.6,400.2 954.6,397.6 955.6,402.9 956.6,396.7 957.6,406.2 958.6,401.3 959.6,397.4 960.6,390.5 961.6,402.4 962.6,396.7 963.6,405.3 964.6,397.1 965.6,405.8 966.6,401.5 967.6,401.2 968.6,398.6 969.6,398.1 970.6,393.8 971.6,397.5 972.6,396.2 973.6,402.7 974.6,396.5 975.6,401.0 976.6,386.9 977.6,401.4 978.6,395.0 979.6,401.6 980.6,397.4 981.6,403.4 982.6,400.8 983.6,403.5 984.6,399.9 985.6,402.3 986.6,397.4 987.6,401.9 988.6,395.8 989.6,400.2 990.6,398.5 991.6,398.8 992.6,388.1 993.6,398.8 994.6,396.9 995.6,407.9 996.6,393.6 997.6,396.1 998.6,395.4 999.6,401.5 1000.6,397.9 1001.6,401.1 1002.6,399.2 1003.6,403.5 1004.6,388.7 1005.6,405.0 1006.6,395.4 1007.6,406.0 1008.6,395.6 1009.6,400.1 1010.6,395.6 1011.6,401.6 1012.6,399.6 1013.6,407.5 1014.6,398.4 1015.6,403.2 1016.6,401.9 1017.6,412.0" fill="none" stroke="#ad3a72" stroke-width="1.0" stroke-opacity="0.8" stroke-linejoin="round"/></svg>
<div class="t" style="left:325.93px;top:454.34px;font-size:12px;color:#ccccdc;-webkit-text-stroke:0.2px #ccccdc;">0</div>
<div class="t" style="left:319.25px;top:417.34px;font-size:12px;color:#ccccdc;-webkit-text-stroke:0.2px #ccccdc;">20</div>
<div class="t" style="left:319.25px;top:380.34px;font-size:12px;color:#ccccdc;-webkit-text-stroke:0.2px #ccccdc;">40</div>
<div class="t" style="left:319.25px;top:343.34px;font-size:12px;color:#ccccdc;-webkit-text-stroke:0.2px #ccccdc;">60</div>
<div class="t" style="left:319.25px;top:306.34px;font-size:12px;color:#ccccdc;-webkit-text-stroke:0.2px #ccccdc;">80</div>
<div class="t" style="left:312.58px;top:269.34px;font-size:12px;color:#ccccdc;-webkit-text-stroke:0.2px #ccccdc;">100</div>
<div class="t" style="left:376.10px;top:468.54px;font-size:12px;color:#ccccdc;letter-spacing:0.843px;-webkit-text-stroke:0.2px #ccccdc;">22:00</div>
<div class="t" style="left:432.64px;top:468.54px;font-size:12px;color:#ccccdc;letter-spacing:0.843px;-webkit-text-stroke:0.2px #ccccdc;">00:00</div>
<div class="t" style="left:489.18px;top:468.54px;font-size:12px;color:#ccccdc;letter-spacing:0.843px;-webkit-text-stroke:0.2px #ccccdc;">02:00</div>
<div class="t" style="left:545.72px;top:468.54px;font-size:12px;color:#ccccdc;letter-spacing:0.843px;-webkit-text-stroke:0.2px #ccccdc;">04:00</div>
<div class="t" style="left:602.26px;top:468.54px;font-size:12px;color:#ccccdc;letter-spacing:0.843px;-webkit-text-stroke:0.2px #ccccdc;">06:00</div>
<div class="t" style="left:658.80px;top:468.54px;font-size:12px;color:#ccccdc;letter-spacing:0.843px;-webkit-text-stroke:0.2px #ccccdc;">08:00</div>
<div class="t" style="left:716.24px;top:468.54px;font-size:12px;color:#ccccdc;letter-spacing:0.393px;-webkit-text-stroke:0.2px #ccccdc;">10:00</div>
<div class="t" style="left:772.78px;top:468.54px;font-size:12px;color:#ccccdc;letter-spacing:0.393px;-webkit-text-stroke:0.2px #ccccdc;">12:00</div>
<div class="t" style="left:829.32px;top:468.54px;font-size:12px;color:#ccccdc;letter-spacing:0.393px;-webkit-text-stroke:0.2px #ccccdc;">14:00</div>
<div class="t" style="left:885.86px;top:468.54px;font-size:12px;color:#ccccdc;letter-spacing:0.393px;-webkit-text-stroke:0.2px #ccccdc;">16:00</div>
<div class="t" style="left:942.40px;top:468.54px;font-size:12px;color:#ccccdc;letter-spacing:0.393px;-webkit-text-stroke:0.2px #ccccdc;">18:00</div>
<div class="a" style="left:990px;top:465px;width:35px;height:20px;overflow:hidden"><div class="t" style="left:8.64px;top:3.54px;font-size:12px;letter-spacing:0.85px;-webkit-text-stroke:0.2px #ccccdc">20:00</div></div>
<div class="a" style="left:312px;top:499px;width:14px;height:4px;border-radius:2px;background:#eab839"></div>
<div class="t" style="left:333.70px;top:493.44px;font-size:12px;color:#ccccdc;letter-spacing:0.528px;-webkit-text-stroke:0.2px #ccccdc;">Busy System</div>
<div class="a" style="left:419px;top:499px;width:14px;height:4px;border-radius:2px;background:#0a437c"></div>
<div class="t" style="left:440.80px;top:493.44px;font-size:12px;color:#ccccdc;letter-spacing:0.507px;-webkit-text-stroke:0.2px #ccccdc;">Busy User</div>
<div class="a" style="left:509.6px;top:499px;width:14px;height:4px;border-radius:2px;background:#890f02"></div>
<div class="t" style="left:531.70px;top:493.44px;font-size:12px;color:#ccccdc;letter-spacing:0.514px;-webkit-text-stroke:0.2px #ccccdc;">Busy Iowait</div>
<div class="a" style="left:609px;top:499px;width:14px;height:4px;border-radius:2px;background:#ef843c"></div>
<div class="t" style="left:630.60px;top:493.44px;font-size:12px;color:#ccccdc;letter-spacing:0.207px;-webkit-text-stroke:0.2px #ccccdc;">Busy IRQs</div>
<div class="a" style="left:700px;top:499px;width:14px;height:4px;border-radius:2px;background:#6d1f62"></div>
<div class="t" style="left:721.70px;top:493.44px;font-size:12px;color:#ccccdc;letter-spacing:0.575px;-webkit-text-stroke:0.2px #ccccdc;">Busy Other</div>
<div class="a" style="left:796px;top:499px;width:14px;height:4px;border-radius:2px;background:#7eb26d"></div>
<div class="t" style="left:818.00px;top:493.44px;font-size:12px;color:#ccccdc;letter-spacing:0.551px;-webkit-text-stroke:0.2px #ccccdc;">Idle</div>
<div class="p" style="left:1042px;top:227px;width:733px;height:294px"></div>
<div class="t" style="left:1051.30px;top:236.33px;font-size:14px;color:#ccccdc;letter-spacing:0.756px;-webkit-text-stroke:0.55px #ccccdc;">Memory Basic</div>
<svg class="a" style="left:1164px;top:236px" width="16" height="16" viewBox="0 0 16 16"><circle cx="8" cy="8" r="5.9" fill="none" stroke="#9d9fac" stroke-width="1.15"/><rect x="7.4" y="7.3" width="1.2" height="3.6" rx="0.5" fill="#9d9fac"/><circle cx="8" cy="5.4" r="0.8" fill="#9d9fac"/></svg>
<svg style="left:0;top:0" width="1789" height="843"><path d="M1099.5 461.5H1760.6" stroke="rgba(240,250,255,0.09)" stroke-width="1"/><path d="M1099.5 418.5H1760.6" stroke="rgba(240,250,255,0.09)" stroke-width="1"/><path d="M1099.5 375.5H1760.6" stroke="rgba(240,250,255,0.09)" stroke-width="1"/><path d="M1099.5 332.5H1760.6" stroke="rgba(240,250,255,0.09)" stroke-width="1"/><path d="M1099.5 289.5H1760.6" stroke="rgba(240,250,255,0.09)" stroke-width="1"/><path d="M1153.5 275.5V465.9" stroke="rgba(240,250,255,0.09)" stroke-width="1"/><path d="M1208.5 275.5V465.9" stroke="rgba(240,250,255,0.09)" stroke-width="1"/><path d="M1263.5 275.5V465.9" stroke="rgba(240,250,255,0.09)" stroke-width="1"/><path d="M1318.5 275.5V465.9" stroke="rgba(240,250,255,0.09)" stroke-width="1"/><path d="M1373.5 275.5V465.9" stroke="rgba(240,250,255,0.09)" stroke-width="1"/><path d="M1428.5 275.5V465.9" stroke="rgba(240,250,255,0.09)" stroke-width="1"/><path d="M1483.5 275.5V465.9" stroke="rgba(240,250,255,0.09)" stroke-width="1"/><path d="M1538.5 275.5V465.9" stroke="rgba(240,250,255,0.09)" stroke-width="1"/><path d="M1593.5 275.5V465.9" stroke="rgba(240,250,255,0.09)" stroke-width="1"/><path d="M1648.5 275.5V465.9" stroke="rgba(240,250,255,0.09)" stroke-width="1"/><path d="M1703.5 275.5V465.9" stroke="rgba(240,250,255,0.09)" stroke-width="1"/><path d="M1758.5 275.5V465.9" stroke="rgba(240,250,255,0.09)" stroke-width="1"/><polygon points="1099.5,397.5 1288.0,397.5 1289.5,396.5 1340.5,396.5 1342.0,397.5 1588.0,397.5 1589.5,396.6 1620.5,396.6 1622.0,397.5 1760.6,397.5 1760.6,461.4 1099.5,461.4" fill="#efcc36" fill-opacity="0.4"/><polygon points="1099.5,382.5 1288.0,382.5 1289.5,381.4 1340.5,381.4 1342.0,382.5 1588.0,382.5 1589.5,381.6 1620.5,381.6 1622.0,382.5 1760.6,382.5 1760.6,397.5 1622.0,397.5 1620.5,396.6 1589.5,396.6 1588.0,397.5 1342.0,397.5 1340.5,396.5 1289.5,396.5 1288.0,397.5 1099.5,397.5" fill="#052b51" fill-opacity="0.4"/><polygon points="1099.5,294.0 1760.6,294.0 1760.6,382.5 1622.0,382.5 1620.5,381.6 1589.5,381.6 1588.0,382.5 1342.0,382.5 1340.5,381.4 1289.5,381.4 1288.0,382.5 1099.5,382.5" fill="#7eb26d" fill-opacity="0.4"/><polyline points="1099.5,397.5 1288.0,397.5 1289.5,396.5 1340.5,396.5 1342.0,397.5 1588.0,397.5 1589.5,396.6 1620.5,396.6 1622.0,397.5 1760.6,397.5" fill="none" stroke="#e6cf6a" stroke-width="1" stroke-opacity="0.75"/><polyline points="1099.5,382.5 1288.0,382.5 1289.5,381.4 1340.5,381.4 1342.0,382.5 1588.0,382.5 1589.5,381.6 1620.5,381.6 1622.0,382.5 1760.6,382.5" fill="none" stroke="#052b51" stroke-width="1" stroke-opacity="0.8"/><path d="M1099.5 293.5H1760.6" stroke="#dd947a" stroke-width="1" stroke-opacity="0.75"/><path d="M1099.5 292.6H1760.6" stroke="#8a1605" stroke-width="1" stroke-opacity="0.8"/></svg>
<div class="t" style="left:1074.89px;top:454.34px;font-size:12px;color:#ccccdc;letter-spacing:0.400px;-webkit-text-stroke:0.2px #ccccdc;">0 B</div>
<div class="t" style="left:1055.01px;top:411.34px;font-size:12px;color:#ccccdc;letter-spacing:0.400px;-webkit-text-stroke:0.2px #ccccdc;">16 GiB</div>
<div class="t" style="left:1055.01px;top:368.34px;font-size:12px;color:#ccccdc;letter-spacing:0.400px;-webkit-text-stroke:0.2px #ccccdc;">32 GiB</div>
<div class="t" style="left:1055.01px;top:325.34px;font-size:12px;color:#ccccdc;letter-spacing:0.400px;-webkit-text-stroke:0.2px #ccccdc;">48 GiB</div>
<div class="t" style="left:1055.01px;top:282.34px;font-size:12px;color:#ccccdc;letter-spacing:0.400px;-webkit-text-stroke:0.2px #ccccdc;">64 GiB</div>
<div class="t" style="left:1136.20px;top:468.54px;font-size:12px;color:#ccccdc;letter-spacing:0.843px;-webkit-text-stroke:0.2px #ccccdc;">22:00</div>
<div class="t" style="left:1191.20px;top:468.54px;font-size:12px;color:#ccccdc;letter-spacing:0.843px;-webkit-text-stroke:0.2px #ccccdc;">00:00</div>
<div class="t" style="left:1246.20px;top:468.54px;font-size:12px;color:#ccccdc;letter-spacing:0.843px;-webkit-text-stroke:0.2px #ccccdc;">02:00</div>
<div class="t" style="left:1301.20px;top:468.54px;font-size:12px;color:#ccccdc;letter-spacing:0.843px;-webkit-text-stroke:0.2px #ccccdc;">04:00</div>
<div class="t" style="left:1356.20px;top:468.54px;font-size:12px;color:#ccccdc;letter-spacing:0.843px;-webkit-text-stroke:0.2px #ccccdc;">06:00</div>
<div class="t" style="left:1411.20px;top:468.54px;font-size:12px;color:#ccccdc;letter-spacing:0.843px;-webkit-text-stroke:0.2px #ccccdc;">08:00</div>
<div class="t" style="left:1467.10px;top:468.54px;font-size:12px;color:#ccccdc;letter-spacing:0.393px;-webkit-text-stroke:0.2px #ccccdc;">10:00</div>
<div class="t" style="left:1522.10px;top:468.54px;font-size:12px;color:#ccccdc;letter-spacing:0.393px;-webkit-text-stroke:0.2px #ccccdc;">12:00</div>
<div class="t" style="left:1577.10px;top:468.54px;font-size:12px;color:#ccccdc;letter-spacing:0.393px;-webkit-text-stroke:0.2px #ccccdc;">14:00</div>
<div class="t" style="left:1632.10px;top:468.54px;font-size:12px;color:#ccccdc;letter-spacing:0.393px;-webkit-text-stroke:0.2px #ccccdc;">16:00</div>
<div class="t" style="left:1687.10px;top:468.54px;font-size:12px;color:#ccccdc;letter-spacing:0.393px;-webkit-text-stroke:0.2px #ccccdc;">18:00</div>
<div class="a" style="left:1730px;top:465px;width:38px;height:20px;overflow:hidden"><div class="t" style="left:11.90px;top:3.54px;font-size:12px;letter-spacing:0.85px;-webkit-text-stroke:0.2px #ccccdc">20:00</div></div>
<div class="a" style="left:1055px;top:499px;width:14px;height:4px;border-radius:2px;background:#e0f9d7"></div>
<div class="t" style="left:1076.60px;top:493.44px;font-size:12px;color:#ccccdc;letter-spacing:0.509px;-webkit-text-stroke:0.2px #ccccdc;">RAM Total</div>
<div class="a" style="left:1146px;top:499px;width:14px;height:4px;border-radius:2px;background:#eab839"></div>
<div class="t" style="left:1167.80px;top:493.44px;font-size:12px;color:#ccccdc;letter-spacing:0.384px;-webkit-text-stroke:0.2px #ccccdc;">RAM Used</div>
<div class="a" style="left:1239px;top:499px;width:14px;height:4px;border-radius:2px;background:#052b51"></div>
<div class="t" style="left:1260.80px;top:493.44px;font-size:12px;color:#ccccdc;letter-spacing:0.479px;-webkit-text-stroke:0.2px #ccccdc;">RAM Cache + Buffer</div>
<div class="a" style="left:1389px;top:499px;width:14px;height:4px;border-radius:2px;background:#7eb26d"></div>
<div class="t" style="left:1411.00px;top:493.44px;font-size:12px;color:#ccccdc;letter-spacing:0.218px;-webkit-text-stroke:0.2px #ccccdc;">RAM Free</div>
<div class="a" style="left:1477.5px;top:499px;width:14px;height:4px;border-radius:2px;background:#bf1b00"></div>
<div class="t" style="left:1499.50px;top:493.44px;font-size:12px;color:#ccccdc;letter-spacing:0.310px;-webkit-text-stroke:0.2px #ccccdc;">SWAP Used</div>
<div class="p" style="left:299px;top:531px;width:733px;height:294px"></div>
<div class="t" style="left:308.30px;top:540.33px;font-size:14px;color:#ccccdc;letter-spacing:0.789px;-webkit-text-stroke:0.55px #ccccdc;">Network Traffic Basic</div>
<svg class="a" style="left:471px;top:540px" width="16" height="16" viewBox="0 0 16 16"><circle cx="8" cy="8" r="5.9" fill="none" stroke="#9d9fac" stroke-width="1.15"/><rect x="7.4" y="7.3" width="1.2" height="3.6" rx="0.5" fill="#9d9fac"/><circle cx="8" cy="5.4" r="0.8" fill="#9d9fac"/></svg>
<svg style="left:0;top:0" width="1789" height="843"><path d="M371.0 630.5H1017.6" stroke="rgba(240,250,255,0.09)" stroke-width="1"/><path d="M371.0 686.5H1017.6" stroke="rgba(240,250,255,0.09)" stroke-width="1"/><path d="M371.0 742.5H1017.6" stroke="rgba(240,250,255,0.09)" stroke-width="1"/><path d="M371.0 797.5H1017.6" stroke="rgba(240,250,255,0.09)" stroke-width="1"/><path d="M422.5 580V802.5" stroke="rgba(240,250,255,0.09)" stroke-width="1"/><path d="M476.5 580V802.5" stroke="rgba(240,250,255,0.09)" stroke-width="1"/><path d="M530.5 580V802.5" stroke="rgba(240,250,255,0.09)" stroke-width="1"/><path d="M584.5 580V802.5" stroke="rgba(240,250,255,0.09)" stroke-width="1"/><path d="M638.5 580V802.5" stroke="rgba(240,250,255,0.09)" stroke-width="1"/><path d="M692.5 580V802.5" stroke="rgba(240,250,255,0.09)" stroke-width="1"/><path d="M746.5 580V802.5" stroke="rgba(240,250,255,0.09)" stroke-width="1"/><path d="M800.5 580V802.5" stroke="rgba(240,250,255,0.09)" stroke-width="1"/><path d="M854.5 580V802.5" stroke="rgba(240,250,255,0.09)" stroke-width="1"/><path d="M908.5 580V802.5" stroke="rgba(240,250,255,0.09)" stroke-width="1"/><path d="M962.5 580V802.5" stroke="rgba(240,250,255,0.09)" stroke-width="1"/><path d="M1016.5 580V802.5" stroke="rgba(240,250,255,0.09)" stroke-width="1"/><path d="M371.0 686.5H1017.6" stroke="#2b4560" stroke-width="1" stroke-opacity="0.85"/><polygon points="456.2,686.5 456.9,706.1 457.4,719.2 457.9,706.1 458.6,686.5" fill="#508642" fill-opacity="0.55" stroke="#508642" stroke-width="0.9" stroke-linejoin="round"/><polygon points="475.9,686.5 476.5,706.3 476.9,719.5 477.3,706.3 477.9,686.5" fill="#e02f2f" fill-opacity="0.9" stroke="#e02f2f" stroke-width="0.9" stroke-linejoin="round"/><polygon points="481.3,686.5 482.0,690.4 482.4,693.0 482.8,690.4 483.5,686.5" fill="#508642" fill-opacity="0.55" stroke="#508642" stroke-width="0.9" stroke-linejoin="round"/><polygon points="489.2,686.5 489.9,713.0 490.4,730.7 490.9,713.0 491.6,686.5" fill="#508642" fill-opacity="0.55" stroke="#508642" stroke-width="0.9" stroke-linejoin="round"/><polygon points="511.6,686.5 512.4,690.4 513.0,693.0 513.6,690.4 514.4,686.5" fill="#508642" fill-opacity="0.55" stroke="#508642" stroke-width="0.9" stroke-linejoin="round"/><polygon points="534.6,686.5 535.6,720.0 536.8,735.0 537.6,760.0 538.4,777.2 539.6,770.0 540.6,730.0 541.6,700.0 542.6,686.5" fill="#508642" fill-opacity="0.55" stroke="#508642" stroke-width="1" stroke-linejoin="round"/><polygon points="577.5,686.5 578.5,740.3 579.6,715.0 580.6,726.0 581.7,722.0 582.8,700.0 584.5,695.0 585.8,715.0 586.5,737.0 587.4,712.0 588.6,686.5" fill="#508642" fill-opacity="0.55" stroke="#508642" stroke-width="1" stroke-linejoin="round"/><polygon points="596.0,686.5 596.6,700.0 597.0,709.0 597.4,700.0 598.0,686.5" fill="#508642" fill-opacity="0.55" stroke="#508642" stroke-width="0.9" stroke-linejoin="round"/><polygon points="590.0,686.5 591.0,692.0 595.0,693.0 600.0,691.0 601.0,686.5" fill="#508642" fill-opacity="0.5" stroke="#508642" stroke-width="1" stroke-linejoin="round"/><polygon points="601.5,686.5 602.3,700.0 603.0,711.0 604.0,698.0 605.5,692.0 607.5,700.0 609.0,713.0 610.0,698.0 610.8,686.5" fill="#a195e0" fill-opacity="0.7" stroke="#a195e0" stroke-width="1" stroke-linejoin="round"/><polygon points="624.5,686.5 625.5,697.0 627.0,694.0 628.5,699.0 630.0,695.0 631.3,698.0 632.0,686.5" fill="#508642" fill-opacity="0.55" stroke="#508642" stroke-width="1" stroke-linejoin="round"/><polygon points="647.6,686.5 648.0,693.2 648.3,697.7 648.6,693.2 649.0,686.5" fill="#508642" fill-opacity="0.55" stroke="#508642" stroke-width="0.9" stroke-linejoin="round"/><polygon points="833.1,686.5 833.7,711.9 834.1,728.8 834.5,711.9 835.1,686.5" fill="#508642" fill-opacity="0.55" stroke="#508642" stroke-width="0.9" stroke-linejoin="round"/><polygon points="864.7,686.5 865.2,692.8 865.5,697.0 865.8,692.8 866.3,686.5" fill="#508642" fill-opacity="0.55" stroke="#508642" stroke-width="0.9" stroke-linejoin="round"/><polygon points="882.0,686.5 882.7,696.7 883.1,703.5 883.5,696.7 884.2,686.5" fill="#508642" fill-opacity="0.55" stroke="#508642" stroke-width="0.9" stroke-linejoin="round"/><polygon points="900.0,686.5 901.5,694.0 903.0,698.0 904.5,692.0 906.0,686.5" fill="#508642" fill-opacity="0.55" stroke="#508642" stroke-width="1" stroke-linejoin="round"/><polygon points="908.0,686.5 909.5,694.0 911.0,700.0 912.3,751.5 913.4,700.0 914.5,686.5" fill="#508642" fill-opacity="0.55" stroke="#508642" stroke-width="1" stroke-linejoin="round"/><polygon points="993.2,686.5 993.7,691.3 994.0,694.5 994.3,691.3 994.8,686.5" fill="#508642" fill-opacity="0.55" stroke="#508642" stroke-width="0.9" stroke-linejoin="round"/><polygon points="456.2,686.5 456.9,666.3 457.4,652.9 457.9,666.3 458.6,686.5" fill="#e0f9d7" fill-opacity="0.8" stroke="#e0f9d7" stroke-width="0.9" stroke-linejoin="round"/><polygon points="475.9,686.5 476.5,665.4 476.9,651.3 477.3,665.4 477.9,686.5" fill="#73bf69" fill-opacity="0.85" stroke="#73bf69" stroke-width="0.9" stroke-linejoin="round"/><polygon points="481.2,686.5 481.9,680.8 482.4,677.0 482.9,680.8 483.6,686.5" fill="#f9e2b0" fill-opacity="0.8" stroke="#f9e2b0" stroke-width="0.9" stroke-linejoin="round"/><polygon points="489.3,686.5 490.0,659.2 490.4,641.0 490.8,659.2 491.5,686.5" fill="#f9e2b0" fill-opacity="0.85" stroke="#f9e2b0" stroke-width="0.9" stroke-linejoin="round"/><polygon points="501.2,686.5 501.7,683.5 502.0,681.5 502.3,683.5 502.8,686.5" fill="#f9e2b0" fill-opacity="0.8" stroke="#f9e2b0" stroke-width="0.9" stroke-linejoin="round"/><polygon points="511.5,686.5 512.4,681.7 513.0,678.5 513.6,681.7 514.5,686.5" fill="#ca95e5" fill-opacity="0.8" stroke="#ca95e5" stroke-width="0.9" stroke-linejoin="round"/><polygon points="534.4,686.5 535.2,660.0 536.0,634.0 537.0,640.0 537.8,600.0 538.4,597.8 539.4,603.0 540.2,640.0 540.8,670.0 541.8,686.5" fill="#5794f2" fill-opacity="0.7" stroke="#5794f2" stroke-width="1" stroke-linejoin="round"/><polygon points="535.5,686.5 537.0,684.0 539.6,680.0 541.0,681.5 542.5,684.0 543.0,686.5" fill="#f9e2b0" fill-opacity="0.85" stroke="#f9e2b0" stroke-width="1" stroke-linejoin="round"/><polygon points="577.3,686.5 578.0,660.0 578.5,634.3 579.4,655.0 580.6,665.0 581.7,640.0 582.7,668.0 584.0,680.0 585.0,686.5" fill="#5794f2" fill-opacity="0.7" stroke="#5794f2" stroke-width="1" stroke-linejoin="round"/><polygon points="585.3,686.5 586.0,655.8 586.5,635.3 587.0,655.8 587.7,686.5" fill="#f9e2b0" fill-opacity="0.85" stroke="#f9e2b0" stroke-width="0.9" stroke-linejoin="round"/><polygon points="577.5,686.5 579.0,684.2 583.0,683.5 586.0,682.5 590.0,683.5 594.0,684.2 595.5,686.5" fill="#f9e2b0" fill-opacity="0.85" stroke="#f9e2b0" stroke-width="1" stroke-linejoin="round"/><polygon points="592.0,686.5 593.0,679.0 594.5,682.0 596.0,677.0 596.6,664.0 597.4,664.0 598.0,680.0 599.0,686.5" fill="#5794f2" fill-opacity="0.7" stroke="#5794f2" stroke-width="1" stroke-linejoin="round"/><polygon points="601.6,686.5 602.5,671.2 603.0,661.0 603.5,671.2 604.4,686.5" fill="#a31a12" fill-opacity="0.9" stroke="#a31a12" stroke-width="0.9" stroke-linejoin="round"/><polygon points="607.7,686.5 608.5,671.8 609.0,662.0 609.5,671.8 610.3,686.5" fill="#a31a12" fill-opacity="0.9" stroke="#a31a12" stroke-width="0.9" stroke-linejoin="round"/><polygon points="600.0,686.5 601.0,682.0 603.0,678.5 605.0,681.0 606.5,676.0 608.0,680.0 610.0,682.0 610.8,686.5" fill="#f9e2b0" fill-opacity="0.9" stroke="#f9e2b0" stroke-width="1" stroke-linejoin="round"/><polygon points="624.5,686.5 625.5,675.0 626.5,681.0 627.5,673.0 628.8,680.0 630.0,673.5 631.0,676.0 631.8,686.5" fill="#5794f2" fill-opacity="0.7" stroke="#5794f2" stroke-width="1" stroke-linejoin="round"/><polygon points="620.0,686.5 620.5,684.6 631.5,684.6 632.0,686.5" fill="#f9e2b0" fill-opacity="0.8" stroke="#f9e2b0" stroke-width="1" stroke-linejoin="round"/><polygon points="647.7,686.5 648.1,679.4 648.3,674.7 648.5,679.4 648.9,686.5" fill="#ef843c" fill-opacity="0.9" stroke="#ef843c" stroke-width="0.9" stroke-linejoin="round"/><polygon points="672.0,686.5 672.6,683.8 673.0,682.0 673.4,683.8 674.0,686.5" fill="#f9e2b0" fill-opacity="0.85" stroke="#f9e2b0" stroke-width="0.9" stroke-linejoin="round"/><polygon points="833.1,686.5 833.7,661.5 834.1,644.9 834.5,661.5 835.1,686.5" fill="#ca95e5" fill-opacity="0.85" stroke="#ca95e5" stroke-width="0.9" stroke-linejoin="round"/><polygon points="864.8,686.5 865.2,680.2 865.5,676.0 865.8,680.2 866.2,686.5" fill="#f2c96d" fill-opacity="0.9" stroke="#f2c96d" stroke-width="0.9" stroke-linejoin="round"/><polygon points="882.0,686.5 882.7,676.0 883.1,669.0 883.5,676.0 884.2,686.5" fill="#ca95e5" fill-opacity="0.85" stroke="#ca95e5" stroke-width="0.9" stroke-linejoin="round"/><polygon points="900.5,686.5 902.0,678.0 903.6,674.7 905.0,679.0 906.5,686.5" fill="#ca95e5" fill-opacity="0.8" stroke="#ca95e5" stroke-width="1" stroke-linejoin="round"/><polygon points="909.0,686.5 910.0,677.0 911.0,680.0 912.0,686.5" fill="#ca95e5" fill-opacity="0.8" stroke="#ca95e5" stroke-width="1" stroke-linejoin="round"/><polygon points="911.3,686.5 911.9,646.2 912.3,619.3 912.7,646.2 913.3,686.5" fill="#ca95e5" fill-opacity="0.85" stroke="#ca95e5" stroke-width="0.9" stroke-linejoin="round"/><polygon points="911.3,686.5 911.9,648.5 912.3,623.1 912.7,648.5 913.3,686.5" fill="#e0f9d7" fill-opacity="0.95" stroke="#e0f9d7" stroke-width="0.9" stroke-linejoin="round"/><polygon points="896.5,686.5 897.5,684.3 901.0,683.0 903.5,679.5 905.0,682.5 908.0,683.0 910.5,680.0 913.0,682.0 917.0,684.0 920.0,684.5 921.0,686.5" fill="#f9e2b0" fill-opacity="0.9" stroke="#f9e2b0" stroke-width="1" stroke-linejoin="round"/><polygon points="993.1,686.5 993.6,680.8 994.0,677.0 994.4,680.8 994.9,686.5" fill="#ca95e5" fill-opacity="0.85" stroke="#ca95e5" stroke-width="0.9" stroke-linejoin="round"/><rect x="404" y="685.1" width="1.6" height="1.1" fill="#f9e2b0" fill-opacity="0.8"/><rect x="420" y="685.1" width="6.6" height="1.1" fill="#f9e2b0" fill-opacity="0.8"/><rect x="432" y="685.1" width="3.6" height="1.1" fill="#f9e2b0" fill-opacity="0.8"/><rect x="438" y="685.1" width="4.6" height="1.1" fill="#f9e2b0" fill-opacity="0.8"/><rect x="459" y="685.1" width="3.6" height="1.1" fill="#f9e2b0" fill-opacity="0.8"/><rect x="466" y="685.1" width="2.6" height="1.1" fill="#f9e2b0" fill-opacity="0.8"/><rect x="496" y="685.1" width="2.6" height="1.1" fill="#f9e2b0" fill-opacity="0.8"/><rect x="508" y="685.1" width="1.6" height="1.1" fill="#f9e2b0" fill-opacity="0.8"/><rect x="568" y="685.1" width="1.6" height="1.1" fill="#f9e2b0" fill-opacity="0.8"/><rect x="573" y="685.1" width="1.6" height="1.1" fill="#f9e2b0" fill-opacity="0.8"/><rect x="681" y="685.1" width="2.6" height="1.1" fill="#f9e2b0" fill-opacity="0.8"/><rect x="726" y="685.1" width="2.6" height="1.1" fill="#f9e2b0" fill-opacity="0.8"/><rect x="795" y="685.1" width="2.6" height="1.1" fill="#f9e2b0" fill-opacity="0.8"/><rect x="811" y="685.1" width="1.6" height="1.1" fill="#f9e2b0" fill-opacity="0.8"/><rect x="824" y="685.1" width="1.6" height="1.1" fill="#f9e2b0" fill-opacity="0.8"/><rect x="854" y="685.1" width="1.6" height="1.1" fill="#f9e2b0" fill-opacity="0.8"/><rect x="873" y="685.1" width="1.6" height="1.1" fill="#f9e2b0" fill-opacity="0.8"/><rect x="890" y="685.1" width="1.6" height="1.1" fill="#f9e2b0" fill-opacity="0.8"/><rect x="931" y="685.1" width="2.6" height="1.1" fill="#f9e2b0" fill-opacity="0.8"/><rect x="948" y="685.1" width="1.6" height="1.1" fill="#f9e2b0" fill-opacity="0.8"/><rect x="968" y="685.1" width="3.6" height="1.1" fill="#f9e2b0" fill-opacity="0.8"/><rect x="983" y="685.1" width="1.6" height="1.1" fill="#f9e2b0" fill-opacity="0.8"/><rect x="998" y="685.1" width="6.6" height="1.1" fill="#f9e2b0" fill-opacity="0.8"/></svg>
<div class="t" style="left:318.81px;top:623.98px;font-size:12px;color:#ccccdc;letter-spacing:0.550px;-webkit-text-stroke:0.2px #ccccdc;">10 Mb/s</div>
<div class="t" style="left:336.58px;top:679.54px;font-size:12px;color:#ccccdc;letter-spacing:0.550px;-webkit-text-stroke:0.2px #ccccdc;">0 b/s</div>
<div class="t" style="left:314.27px;top:735.10px;font-size:12px;color:#ccccdc;letter-spacing:0.550px;-webkit-text-stroke:0.2px #ccccdc;">-10 Mb/s</div>
<div class="t" style="left:314.27px;top:790.66px;font-size:12px;color:#ccccdc;letter-spacing:0.550px;-webkit-text-stroke:0.2px #ccccdc;">-20 Mb/s</div>
<div class="t" style="left:406.05px;top:804.94px;font-size:12px;color:#ccccdc;letter-spacing:0.843px;-webkit-text-stroke:0.2px #ccccdc;">22:00</div>
<div class="t" style="left:460.05px;top:804.94px;font-size:12px;color:#ccccdc;letter-spacing:0.843px;-webkit-text-stroke:0.2px #ccccdc;">00:00</div>
<div class="t" style="left:514.05px;top:804.94px;font-size:12px;color:#ccccdc;letter-spacing:0.843px;-webkit-text-stroke:0.2px #ccccdc;">02:00</div>
<div class="t" style="left:568.05px;top:804.94px;font-size:12px;color:#ccccdc;letter-spacing:0.843px;-webkit-text-stroke:0.2px #ccccdc;">04:00</div>
<div class="t" style="left:622.05px;top:804.94px;font-size:12px;color:#ccccdc;letter-spacing:0.843px;-webkit-text-stroke:0.2px #ccccdc;">06:00</div>
<div class="t" style="left:676.05px;top:804.94px;font-size:12px;color:#ccccdc;letter-spacing:0.843px;-webkit-text-stroke:0.2px #ccccdc;">08:00</div>
<div class="t" style="left:730.95px;top:804.94px;font-size:12px;color:#ccccdc;letter-spacing:0.393px;-webkit-text-stroke:0.2px #ccccdc;">10:00</div>
<div class="t" style="left:784.95px;top:804.94px;font-size:12px;color:#ccccdc;letter-spacing:0.393px;-webkit-text-stroke:0.2px #ccccdc;">12:00</div>
<div class="t" style="left:838.95px;top:804.94px;font-size:12px;color:#ccccdc;letter-spacing:0.393px;-webkit-text-stroke:0.2px #ccccdc;">14:00</div>
<div class="t" style="left:892.95px;top:804.94px;font-size:12px;color:#ccccdc;letter-spacing:0.393px;-webkit-text-stroke:0.2px #ccccdc;">16:00</div>
<div class="t" style="left:946.95px;top:804.94px;font-size:12px;color:#ccccdc;letter-spacing:0.393px;-webkit-text-stroke:0.2px #ccccdc;">18:00</div>
<div class="a" style="left:990px;top:800px;width:34px;height:20px;overflow:hidden"><div class="t" style="left:10.05px;top:4.94px;font-size:12px;letter-spacing:0.85px;-webkit-text-stroke:0.2px #ccccdc">20:00</div></div>
<div class="p" style="left:1042px;top:531px;width:733px;height:294px"></div>
<div class="t" style="left:1051.30px;top:540.33px;font-size:14px;color:#ccccdc;letter-spacing:0.500px;-webkit-text-stroke:0.55px #ccccdc;">Disk Space Used Basic</div>
<svg class="a" style="left:1224px;top:540px" width="16" height="16" viewBox="0 0 16 16"><circle cx="8" cy="8" r="5.9" fill="none" stroke="#9d9fac" stroke-width="1.15"/><rect x="7.4" y="7.3" width="1.2" height="3.6" rx="0.5" fill="#9d9fac"/><circle cx="8" cy="5.4" r="0.8" fill="#9d9fac"/></svg>
<svg style="left:0;top:0" width="1789" height="843"><path d="M1092.4 765.5H1760.6" stroke="rgba(240,250,255,0.09)" stroke-width="1"/><path d="M1092.4 728.5H1760.6" stroke="rgba(240,250,255,0.09)" stroke-width="1"/><path d="M1092.4 691.5H1760.6" stroke="rgba(240,250,255,0.09)" stroke-width="1"/><path d="M1092.4 654.5H1760.6" stroke="rgba(240,250,255,0.09)" stroke-width="1"/><path d="M1092.4 617.5H1760.6" stroke="rgba(240,250,255,0.09)" stroke-width="1"/><path d="M1092.4 580.5H1760.6" stroke="rgba(240,250,255,0.09)" stroke-width="1"/><path d="M1146.5 580.4V769.9" stroke="rgba(240,250,255,0.09)" stroke-width="1"/><path d="M1201.5 580.4V769.9" stroke="rgba(240,250,255,0.09)" stroke-width="1"/><path d="M1257.5 580.4V769.9" stroke="rgba(240,250,255,0.09)" stroke-width="1"/><path d="M1313.5 580.4V769.9" stroke="rgba(240,250,255,0.09)" stroke-width="1"/><path d="M1368.5 580.4V769.9" stroke="rgba(240,250,255,0.09)" stroke-width="1"/><path d="M1424.5 580.4V769.9" stroke="rgba(240,250,255,0.09)" stroke-width="1"/><path d="M1480.5 580.4V769.9" stroke="rgba(240,250,255,0.09)" stroke-width="1"/><path d="M1535.5 580.4V769.9" stroke="rgba(240,250,255,0.09)" stroke-width="1"/><path d="M1591.5 580.4V769.9" stroke="rgba(240,250,255,0.09)" stroke-width="1"/><path d="M1647.5 580.4V769.9" stroke="rgba(240,250,255,0.09)" stroke-width="1"/><path d="M1703.5 580.4V769.9" stroke="rgba(240,250,255,0.09)" stroke-width="1"/><path d="M1758.5 580.4V769.9" stroke="rgba(240,250,255,0.09)" stroke-width="1"/><rect x="1092.4" y="747.5" width="668.1999999999998" height="17.5" fill="#73bf69" fill-opacity="0.4"/><path d="M1092.4 747.5H1760.6" stroke="#73bf69" stroke-width="1" stroke-opacity="0.8"/><path d="M1092.4 763.5H1760.6" stroke="#e5c93a" stroke-width="1" stroke-opacity="0.8"/><path d="M1092.4 765.2H1760.6" stroke="#b6d6b0" stroke-width="1" stroke-opacity="0.85"/></svg>
<div class="t" style="left:1068.46px;top:758.44px;font-size:12px;color:#ccccdc;letter-spacing:0.500px;-webkit-text-stroke:0.2px #ccccdc;">0%</div>
<div class="t" style="left:1061.28px;top:721.44px;font-size:12px;color:#ccccdc;letter-spacing:0.500px;-webkit-text-stroke:0.2px #ccccdc;">20%</div>
<div class="t" style="left:1061.28px;top:684.44px;font-size:12px;color:#ccccdc;letter-spacing:0.500px;-webkit-text-stroke:0.2px #ccccdc;">40%</div>
<div class="t" style="left:1061.28px;top:647.44px;font-size:12px;color:#ccccdc;letter-spacing:0.500px;-webkit-text-stroke:0.2px #ccccdc;">60%</div>
<div class="t" style="left:1061.28px;top:610.44px;font-size:12px;color:#ccccdc;letter-spacing:0.500px;-webkit-text-stroke:0.2px #ccccdc;">80%</div>
<div class="t" style="left:1054.11px;top:573.44px;font-size:12px;color:#ccccdc;letter-spacing:0.500px;-webkit-text-stroke:0.2px #ccccdc;">100%</div>
<div class="t" style="left:1129.60px;top:773.04px;font-size:12px;color:#ccccdc;letter-spacing:0.843px;-webkit-text-stroke:0.2px #ccccdc;">22:00</div>
<div class="t" style="left:1185.27px;top:773.04px;font-size:12px;color:#ccccdc;letter-spacing:0.843px;-webkit-text-stroke:0.2px #ccccdc;">00:00</div>
<div class="t" style="left:1240.94px;top:773.04px;font-size:12px;color:#ccccdc;letter-spacing:0.843px;-webkit-text-stroke:0.2px #ccccdc;">02:00</div>
<div class="t" style="left:1296.61px;top:773.04px;font-size:12px;color:#ccccdc;letter-spacing:0.843px;-webkit-text-stroke:0.2px #ccccdc;">04:00</div>
<div class="t" style="left:1352.28px;top:773.04px;font-size:12px;color:#ccccdc;letter-spacing:0.843px;-webkit-text-stroke:0.2px #ccccdc;">06:00</div>
<div class="t" style="left:1407.95px;top:773.04px;font-size:12px;color:#ccccdc;letter-spacing:0.843px;-webkit-text-stroke:0.2px #ccccdc;">08:00</div>
<div class="t" style="left:1464.52px;top:773.04px;font-size:12px;color:#ccccdc;letter-spacing:0.393px;-webkit-text-stroke:0.2px #ccccdc;">10:00</div>
<div class="t" style="left:1520.19px;top:773.04px;font-size:12px;color:#ccccdc;letter-spacing:0.393px;-webkit-text-stroke:0.2px #ccccdc;">12:00</div>
<div class="t" style="left:1575.86px;top:773.04px;font-size:12px;color:#ccccdc;letter-spacing:0.393px;-webkit-text-stroke:0.2px #ccccdc;">14:00</div>
<div class="t" style="left:1631.53px;top:773.04px;font-size:12px;color:#ccccdc;letter-spacing:0.393px;-webkit-text-stroke:0.2px #ccccdc;">16:00</div>
<div class="t" style="left:1687.20px;top:773.04px;font-size:12px;color:#ccccdc;letter-spacing:0.393px;-webkit-text-stroke:0.2px #ccccdc;">18:00</div>
<div class="a" style="left:1730px;top:768px;width:38px;height:20px;overflow:hidden"><div class="t" style="left:11.97px;top:5.04px;font-size:12px;letter-spacing:0.85px;-webkit-text-stroke:0.2px #ccccdc">20:00</div></div>
<div class="a" style="left:1055px;top:804px;width:14px;height:4px;border-radius:2px;background:#73bf69"></div>
<div class="t" style="left:1077.00px;top:798.44px;font-size:12px;color:#ccccdc;-webkit-text-stroke:0.2px #ccccdc;">/</div>
<div class="a" style="left:1091px;top:804px;width:14px;height:4px;border-radius:2px;background:#f2cc0c"></div>
<div class="t" style="left:1113.80px;top:798.44px;font-size:12px;color:#ccccdc;letter-spacing:0.662px;-webkit-text-stroke:0.2px #ccccdc;">/home</div>
<div class="a" style="left:1160px;top:804px;width:14px;height:4px;border-radius:2px;background:#8ab8ff"></div>
<div class="t" style="left:1182.70px;top:798.44px;font-size:12px;color:#ccccdc;letter-spacing:0.887px;-webkit-text-stroke:0.2px #ccccdc;">/tmp</div>
</body></html>
